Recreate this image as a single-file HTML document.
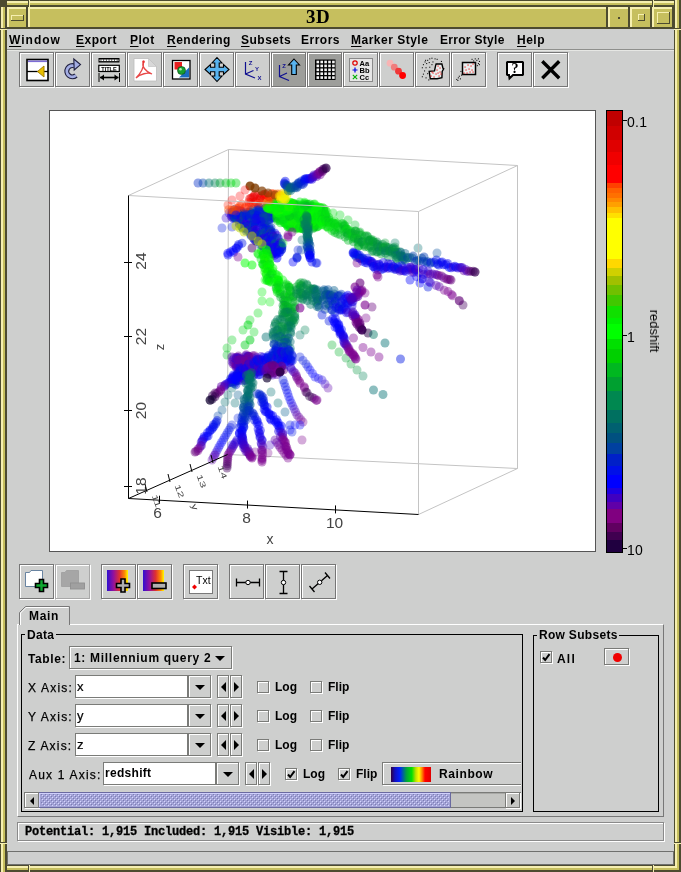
<!DOCTYPE html><html><head><meta charset="utf-8"><style>html,body{margin:0;padding:0;}body{width:681px;height:872px;position:relative;overflow:hidden;background:#4d4b30;font-family:'Liberation Sans',sans-serif}</style></head><body><div style="position:absolute;left:0;top:0;width:681px;height:872px;background:#c6bf5e"></div><div style="position:absolute;left:0px;top:0px;width:681px;height:1px;background:#4d4b30"></div><div style="position:absolute;left:0px;top:1px;width:681px;height:2px;background:#f6efb0"></div><div style="position:absolute;left:0px;top:3px;width:681px;height:2px;background:#c6bf5e"></div><div style="position:absolute;left:0px;top:5px;width:681px;height:2px;background:#4d4b30"></div><div style="position:absolute;left:0px;top:865px;width:681px;height:1px;background:#4d4b30"></div><div style="position:absolute;left:0px;top:866px;width:681px;height:2px;background:#f6efb0"></div><div style="position:absolute;left:0px;top:868px;width:681px;height:2px;background:#c6bf5e"></div><div style="position:absolute;left:0px;top:870px;width:681px;height:2px;background:#4d4b30"></div><div style="position:absolute;left:0px;top:0px;width:1px;height:872px;background:#4d4b30"></div><div style="position:absolute;left:1px;top:0px;width:2px;height:872px;background:#f6efb0"></div><div style="position:absolute;left:3px;top:0px;width:2px;height:872px;background:#c6bf5e"></div><div style="position:absolute;left:5px;top:0px;width:2px;height:872px;background:#4d4b30"></div><div style="position:absolute;left:674px;top:0px;width:1px;height:872px;background:#4d4b30"></div><div style="position:absolute;left:675px;top:0px;width:2px;height:872px;background:#f6efb0"></div><div style="position:absolute;left:677px;top:0px;width:2px;height:872px;background:#c6bf5e"></div><div style="position:absolute;left:679px;top:0px;width:2px;height:872px;background:#4d4b30"></div><div style="position:absolute;left:6px;top:6px;width:1px;height:1px;background:#4d4b30"></div><div style="position:absolute;left:5px;top:5px;width:2px;height:2px;background:#4d4b30"></div><div style="position:absolute;left:4px;top:4px;width:3px;height:3px;background:#c6bf5e"></div><div style="position:absolute;left:3px;top:3px;width:4px;height:4px;background:#c6bf5e"></div><div style="position:absolute;left:2px;top:2px;width:5px;height:5px;background:#f6efb0"></div><div style="position:absolute;left:1px;top:1px;width:6px;height:6px;background:#f6efb0"></div><div style="position:absolute;left:0px;top:0px;width:7px;height:7px;background:#4d4b30"></div><div style="position:absolute;left:674px;top:865px;width:7px;height:7px;background:#4d4b30"></div><div style="position:absolute;left:674px;top:865px;width:6px;height:6px;background:#4d4b30"></div><div style="position:absolute;left:674px;top:865px;width:5px;height:5px;background:#c6bf5e"></div><div style="position:absolute;left:674px;top:865px;width:4px;height:4px;background:#c6bf5e"></div><div style="position:absolute;left:674px;top:865px;width:3px;height:3px;background:#f6efb0"></div><div style="position:absolute;left:674px;top:865px;width:2px;height:2px;background:#f6efb0"></div><div style="position:absolute;left:674px;top:865px;width:1px;height:1px;background:#4d4b30"></div><div style="position:absolute;left:0px;top:28px;width:7px;height:1px;background:#4d4b30"></div><div style="position:absolute;left:0px;top:29px;width:7px;height:1px;background:#f6efb0"></div><div style="position:absolute;left:674px;top:28px;width:7px;height:1px;background:#4d4b30"></div><div style="position:absolute;left:674px;top:29px;width:7px;height:1px;background:#f6efb0"></div><div style="position:absolute;left:0px;top:842px;width:7px;height:1px;background:#4d4b30"></div><div style="position:absolute;left:0px;top:843px;width:7px;height:1px;background:#f6efb0"></div><div style="position:absolute;left:674px;top:842px;width:7px;height:1px;background:#4d4b30"></div><div style="position:absolute;left:674px;top:843px;width:7px;height:1px;background:#f6efb0"></div><div style="position:absolute;left:28px;top:0px;width:1px;height:7px;background:#4d4b30"></div><div style="position:absolute;left:29px;top:0px;width:1px;height:7px;background:#f6efb0"></div><div style="position:absolute;left:652px;top:0px;width:1px;height:7px;background:#4d4b30"></div><div style="position:absolute;left:653px;top:0px;width:1px;height:7px;background:#f6efb0"></div><div style="position:absolute;left:28px;top:865px;width:1px;height:7px;background:#4d4b30"></div><div style="position:absolute;left:29px;top:865px;width:1px;height:7px;background:#f6efb0"></div><div style="position:absolute;left:652px;top:865px;width:1px;height:7px;background:#4d4b30"></div><div style="position:absolute;left:653px;top:865px;width:1px;height:7px;background:#f6efb0"></div><div style="position:absolute;left:7px;top:7px;width:21px;height:22px;background:#4d4b30"></div><div style="position:absolute;left:7px;top:7px;width:19px;height:20px;background:#f6efb0"></div><div style="position:absolute;left:9px;top:9px;width:17px;height:18px;background:#c6bf5e"></div><div style="position:absolute;left:11px;top:15px;width:13px;height:6px;background:#4d4b30"></div><div style="position:absolute;left:11px;top:15px;width:12px;height:5px;background:#f6efb0"></div><div style="position:absolute;left:12px;top:16px;width:11px;height:4px;background:#c6bf5e"></div><div style="position:absolute;left:28px;top:7px;width:580px;height:22px;background:#4d4b30"></div><div style="position:absolute;left:28px;top:7px;width:578px;height:20px;background:#f6efb0"></div><div style="position:absolute;left:30px;top:9px;width:576px;height:18px;background:#c6bf5e"></div><div style="position:absolute;left:608px;top:7px;width:22px;height:22px;background:#4d4b30"></div><div style="position:absolute;left:608px;top:7px;width:20px;height:20px;background:#f6efb0"></div><div style="position:absolute;left:610px;top:9px;width:18px;height:18px;background:#c6bf5e"></div><div style="position:absolute;left:630px;top:7px;width:22px;height:22px;background:#4d4b30"></div><div style="position:absolute;left:630px;top:7px;width:20px;height:20px;background:#f6efb0"></div><div style="position:absolute;left:632px;top:9px;width:18px;height:18px;background:#c6bf5e"></div><div style="position:absolute;left:652px;top:7px;width:22px;height:22px;background:#4d4b30"></div><div style="position:absolute;left:652px;top:7px;width:20px;height:20px;background:#f6efb0"></div><div style="position:absolute;left:654px;top:9px;width:18px;height:18px;background:#c6bf5e"></div><div style="position:absolute;left:618px;top:17px;width:2px;height:2px;background:#4d4b30"></div><div style="position:absolute;left:638px;top:14px;width:7px;height:7px;background:#4d4b30"></div><div style="position:absolute;left:638px;top:14px;width:6px;height:6px;background:#f6efb0"></div><div style="position:absolute;left:639px;top:15px;width:5px;height:5px;background:#c6bf5e"></div><div style="position:absolute;left:657px;top:12px;width:13px;height:12px;background:#4d4b30"></div><div style="position:absolute;left:657px;top:12px;width:12px;height:11px;background:#f6efb0"></div><div style="position:absolute;left:658px;top:13px;width:11px;height:10px;background:#c6bf5e"></div><div style="position:absolute;left:306px;top:6px;white-space:pre;will-change:transform;font-family:'Liberation Serif',serif;font-weight:bold;font-size:19px;color:#000;line-height:22px;letter-spacing:0.5px">3D</div><div style="position:absolute;left:7px;top:29px;width:667px;height:836px;background:#cecfce"></div><div style="position:absolute;left:7px;top:49px;width:667px;height:1px;background:#8e8f8c"></div><div style="position:absolute;left:7px;top:50px;width:667px;height:1px;background:#e6e7e4"></div><div style="position:absolute;left:9px;top:33px;white-space:pre;will-change:transform;font-family:'Liberation Sans',sans-serif;font-weight:bold;font-size:12px;color:#000;line-height:14px;letter-spacing:1.0px"><u style="text-decoration-thickness:1px;text-underline-offset:2px">W</u>indow</div><div style="position:absolute;left:76px;top:33px;white-space:pre;will-change:transform;font-family:'Liberation Sans',sans-serif;font-weight:bold;font-size:12px;color:#000;line-height:14px;letter-spacing:0.5px"><u style="text-decoration-thickness:1px;text-underline-offset:2px">E</u>xport</div><div style="position:absolute;left:129.5px;top:33px;white-space:pre;will-change:transform;font-family:'Liberation Sans',sans-serif;font-weight:bold;font-size:12px;color:#000;line-height:14px;letter-spacing:0.5px"><u style="text-decoration-thickness:1px;text-underline-offset:2px">P</u>lot</div><div style="position:absolute;left:166.5px;top:33px;white-space:pre;will-change:transform;font-family:'Liberation Sans',sans-serif;font-weight:bold;font-size:12px;color:#000;line-height:14px;letter-spacing:0.5px"><u style="text-decoration-thickness:1px;text-underline-offset:2px">R</u>endering</div><div style="position:absolute;left:240.5px;top:33px;white-space:pre;will-change:transform;font-family:'Liberation Sans',sans-serif;font-weight:bold;font-size:12px;color:#000;line-height:14px;letter-spacing:0.5px"><u style="text-decoration-thickness:1px;text-underline-offset:2px">S</u>ubsets</div><div style="position:absolute;left:301.3px;top:33px;white-space:pre;will-change:transform;font-family:'Liberation Sans',sans-serif;font-weight:bold;font-size:12px;color:#000;line-height:14px;letter-spacing:0.5px">Errors</div><div style="position:absolute;left:351.3px;top:33px;white-space:pre;will-change:transform;font-family:'Liberation Sans',sans-serif;font-weight:bold;font-size:12px;color:#000;line-height:14px;letter-spacing:0.5px"><u style="text-decoration-thickness:1px;text-underline-offset:2px">M</u>arker Style</div><div style="position:absolute;left:440.2px;top:33px;white-space:pre;will-change:transform;font-family:'Liberation Sans',sans-serif;font-weight:bold;font-size:12px;color:#000;line-height:14px;letter-spacing:0.3px">Error Style</div><div style="position:absolute;left:517px;top:33px;white-space:pre;will-change:transform;font-family:'Liberation Sans',sans-serif;font-weight:bold;font-size:12px;color:#000;line-height:14px;letter-spacing:0.5px"><u style="text-decoration-thickness:1px;text-underline-offset:2px">H</u>elp</div><div style="position:absolute;left:19px;top:52px;width:35px;height:35px;box-sizing:border-box;border:1px solid #767676;background:#cecfce;box-shadow:1px 1px 0 #fff, inset 1px 1px 0 #fff"></div><div style="position:absolute;left:55px;top:52px;width:35px;height:35px;box-sizing:border-box;border:1px solid #767676;background:#cecfce;box-shadow:1px 1px 0 #fff, inset 1px 1px 0 #fff"></div><div style="position:absolute;left:91px;top:52px;width:35px;height:35px;box-sizing:border-box;border:1px solid #767676;background:#cecfce;box-shadow:1px 1px 0 #fff, inset 1px 1px 0 #fff"></div><div style="position:absolute;left:127px;top:52px;width:35px;height:35px;box-sizing:border-box;border:1px solid #767676;background:#cecfce;box-shadow:1px 1px 0 #fff, inset 1px 1px 0 #fff"></div><div style="position:absolute;left:163px;top:52px;width:35px;height:35px;box-sizing:border-box;border:1px solid #767676;background:#cecfce;box-shadow:1px 1px 0 #fff, inset 1px 1px 0 #fff"></div><div style="position:absolute;left:199px;top:52px;width:35px;height:35px;box-sizing:border-box;border:1px solid #767676;background:#cecfce;box-shadow:1px 1px 0 #fff, inset 1px 1px 0 #fff"></div><div style="position:absolute;left:235px;top:52px;width:35px;height:35px;box-sizing:border-box;border:1px solid #767676;background:#cecfce;box-shadow:1px 1px 0 #fff, inset 1px 1px 0 #fff"></div><div style="position:absolute;left:271px;top:52px;width:35px;height:35px;box-sizing:border-box;border:1px solid #767676;background:#9d9e9b;box-shadow:1px 1px 0 #fff, inset 1px 1px 0 #fff"></div><div style="position:absolute;left:307px;top:52px;width:35px;height:35px;box-sizing:border-box;border:1px solid #767676;background:#9d9e9b;box-shadow:1px 1px 0 #fff, inset 1px 1px 0 #fff"></div><div style="position:absolute;left:343px;top:52px;width:35px;height:35px;box-sizing:border-box;border:1px solid #767676;background:#cecfce;box-shadow:1px 1px 0 #fff, inset 1px 1px 0 #fff"></div><div style="position:absolute;left:379px;top:52px;width:35px;height:35px;box-sizing:border-box;border:1px solid #767676;background:#cecfce;box-shadow:1px 1px 0 #fff, inset 1px 1px 0 #fff"></div><div style="position:absolute;left:415px;top:52px;width:35px;height:35px;box-sizing:border-box;border:1px solid #767676;background:#cecfce;box-shadow:1px 1px 0 #fff, inset 1px 1px 0 #fff"></div><div style="position:absolute;left:451px;top:52px;width:35px;height:35px;box-sizing:border-box;border:1px solid #767676;background:#cecfce;box-shadow:1px 1px 0 #fff, inset 1px 1px 0 #fff"></div><div style="position:absolute;left:497px;top:52px;width:35px;height:35px;box-sizing:border-box;border:1px solid #767676;background:#cecfce;box-shadow:1px 1px 0 #fff, inset 1px 1px 0 #fff"></div><div style="position:absolute;left:533px;top:52px;width:35px;height:35px;box-sizing:border-box;border:1px solid #767676;background:#cecfce;box-shadow:1px 1px 0 #fff, inset 1px 1px 0 #fff"></div><div style="position:absolute;left:49px;top:110px;width:547px;height:442px;background:#fff;box-sizing:border-box;border:1px solid #555"></div><div style="position:absolute;left:606px;top:110px;width:17px;height:443px;box-sizing:border-box;border:1px solid #000;background:linear-gradient(to bottom,#c00000 0.00% 3.48%,#d00000 3.48% 6.64%,#e00000 6.64% 9.39%,#f00000 9.39% 12.14%,#ff0000 12.14% 16.25%,#ff4000 16.25% 17.45%,#ff6000 17.45% 18.62%,#ff7000 18.62% 19.64%,#ff8800 19.64% 20.61%,#ffa000 20.61% 21.78%,#ffc000 21.78% 23.16%,#ffe000 23.16% 24.33%,#ffff00 24.33% 33.52%,#ffd800 33.52% 35.49%,#d0d000 35.49% 37.47%,#a0c000 37.47% 39.41%,#70c000 39.41% 41.76%,#40c800 41.76% 44.13%,#10e000 44.13% 46.88%,#00f000 46.88% 48.31%,#00ff00 48.31% 51.63%,#00e000 51.63% 53.95%,#00d000 53.95% 57.11%,#00b820 57.11% 60.27%,#00a030 60.27% 63.43%,#008850 63.43% 67.88%,#007060 67.88% 70.65%,#006070 70.65% 73.00%,#005080 73.00% 75.35%,#0040a0 75.35% 77.72%,#0020c8 77.72% 80.47%,#0010e8 80.47% 82.44%,#0000ff 82.44% 85.60%,#2000e0 85.60% 86.77%,#4000c0 86.77% 88.74%,#6000a8 88.74% 90.29%,#800080 90.29% 93.45%,#600060 93.45% 95.42%,#400050 95.42% 97.38%,#200040 97.38% 100.00%)"></div><div style="position:absolute;left:623px;top:120px;width:4px;height:1px;background:#000"></div><div style="position:absolute;left:627px;top:115px;white-space:pre;will-change:transform;font-family:'Liberation Sans',sans-serif;font-size:14px;color:#000;line-height:14px;letter-spacing:0.3px">0.1</div><div style="position:absolute;left:623px;top:335px;width:4px;height:1px;background:#000"></div><div style="position:absolute;left:627px;top:330px;white-space:pre;will-change:transform;font-family:'Liberation Sans',sans-serif;font-size:14px;color:#000;line-height:14px;letter-spacing:0.3px">1</div><div style="position:absolute;left:623px;top:548px;width:4px;height:1px;background:#000"></div><div style="position:absolute;left:627px;top:543px;white-space:pre;will-change:transform;font-family:'Liberation Sans',sans-serif;font-size:14px;color:#000;line-height:14px;letter-spacing:0.3px">10</div><div style="position:absolute;left:647px;top:324px;width:0;height:0"><div style="position:absolute;transform:translate(-50%,-50%) rotate(90deg);left:6.5px;top:7px;font-family:'Liberation Sans',sans-serif;font-size:14px;color:#000;line-height:14px;font-size:13px;white-space:pre;will-change:transform">redshift</div></div><div style="position:absolute;left:19px;top:564px;width:35px;height:35px;box-sizing:border-box;border:1px solid #767676;background:#cecfce;box-shadow:1px 1px 0 #fff, inset 1px 1px 0 #fff"></div><div style="position:absolute;left:55px;top:564px;width:35px;height:35px;box-sizing:border-box;border:1px solid #a8a8a8;background:#cecfce;box-shadow:1px 1px 0 #fff, inset 1px 1px 0 #fff"></div><div style="position:absolute;left:101px;top:564px;width:35px;height:35px;box-sizing:border-box;border:1px solid #767676;background:#cecfce;box-shadow:1px 1px 0 #fff, inset 1px 1px 0 #fff"></div><div style="position:absolute;left:137px;top:564px;width:35px;height:35px;box-sizing:border-box;border:1px solid #767676;background:#cecfce;box-shadow:1px 1px 0 #fff, inset 1px 1px 0 #fff"></div><div style="position:absolute;left:183px;top:564px;width:35px;height:35px;box-sizing:border-box;border:1px solid #767676;background:#cecfce;box-shadow:1px 1px 0 #fff, inset 1px 1px 0 #fff"></div><div style="position:absolute;left:229px;top:564px;width:35px;height:35px;box-sizing:border-box;border:1px solid #767676;background:#cecfce;box-shadow:1px 1px 0 #fff, inset 1px 1px 0 #fff"></div><div style="position:absolute;left:265px;top:564px;width:35px;height:35px;box-sizing:border-box;border:1px solid #767676;background:#cecfce;box-shadow:1px 1px 0 #fff, inset 1px 1px 0 #fff"></div><div style="position:absolute;left:301px;top:564px;width:35px;height:35px;box-sizing:border-box;border:1px solid #767676;background:#cecfce;box-shadow:1px 1px 0 #fff, inset 1px 1px 0 #fff"></div><div style="position:absolute;left:17px;top:624px;width:647px;height:193px;box-sizing:border-box;border-top:1px solid #fff;border-left:1px solid #fff;border-right:1px solid #777;border-bottom:1px solid #777"></div><svg style="position:absolute;left:0;top:0" width="681" height="872"><path d="M19.5 625 L19.5 612.5 L25.5 606.5 L69.5 606.5 L69.5 625" fill="#cecfce" stroke="#777" stroke-width="1"/><path d="M20.5 625 L20.5 613 L26 607.5 L68.5 607.5" fill="none" stroke="#fff" stroke-width="1"/></svg><div style="position:absolute;left:29px;top:609px;white-space:pre;will-change:transform;font-family:'Liberation Sans',sans-serif;font-weight:bold;font-size:12px;line-height:14px;letter-spacing:0.7px">Main</div><div style="position:absolute;left:21px;top:634px;width:502px;height:178px;box-sizing:border-box;border:1px solid #000"></div><div style="position:absolute;left:25px;top:626px;width:31px;height:14px;background:#cecfce"></div><div style="position:absolute;left:27px;top:628px;white-space:pre;will-change:transform;font-family:'Liberation Sans',sans-serif;font-weight:bold;font-size:12px;line-height:14px;color:#000;letter-spacing:0.3px">Data</div><div style="position:absolute;left:533px;top:635px;width:126px;height:177px;box-sizing:border-box;border:1px solid #000"></div><div style="position:absolute;left:537px;top:627px;width:82px;height:14px;background:#cecfce"></div><div style="position:absolute;left:539px;top:628px;white-space:pre;will-change:transform;font-family:'Liberation Sans',sans-serif;font-weight:bold;font-size:12px;line-height:14px;color:#000;letter-spacing:0.3px">Row Subsets</div><div style="position:absolute;left:17px;top:822px;width:647px;height:19px;box-sizing:border-box;border:1px solid #8a8a8a;box-shadow:inset 1px 1px 0 #fff, 1px 1px 0 #fff"></div><div style="position:absolute;left:25px;top:825px;white-space:pre;will-change:transform;font-family:'Liberation Mono',monospace;font-weight:bold;font-size:12px;line-height:14px;letter-spacing:-0.2px;color:#000;-webkit-text-stroke:0.3px #000">Potential: 1,915 Included: 1,915 Visible: 1,915</div><div style="position:absolute;left:7px;top:851px;width:667px;height:14px;box-sizing:border-box;border-top:1px solid #6f706d;border-left:1px solid #6f706d;border-bottom:1px solid #6f706d;border-right:1px solid #6f706d;background:#cecfce"></div><div style="position:absolute;left:50px;top:111px;width:545px;height:440px;overflow:hidden"><div style="position:absolute;left:-50px;top:-111px"><svg style="position:absolute;left:0;top:0" width="681" height="872"><g><line x1="228.5" y1="149.5" x2="227.5" y2="454.5" stroke="#c4c4c4" stroke-width="1"/><line x1="228.5" y1="149.5" x2="517.5" y2="165.5" stroke="#c4c4c4" stroke-width="1"/><line x1="517.5" y1="165.5" x2="517.5" y2="468.5" stroke="#c4c4c4" stroke-width="1"/><line x1="227.5" y1="454.5" x2="517.5" y2="468.5" stroke="#c4c4c4" stroke-width="1"/><line x1="128.5" y1="195.5" x2="228.5" y2="149.5" stroke="#c4c4c4" stroke-width="1"/><line x1="418.5" y1="211.5" x2="517.5" y2="165.5" stroke="#c4c4c4" stroke-width="1"/><line x1="418.5" y1="514.5" x2="517.5" y2="468.5" stroke="#c4c4c4" stroke-width="1"/></g><circle cx="198.0" cy="183.0" r="4.5" fill="#002cc6" fill-opacity="0.42"/><circle cx="203.0" cy="183.0" r="4.5" fill="#0042a9" fill-opacity="0.42"/><circle cx="209.0" cy="183.0" r="4.5" fill="#006e70" fill-opacity="0.42"/><circle cx="215.0" cy="183.0" r="4.5" fill="#008256" fill-opacity="0.42"/><circle cx="220.0" cy="183.0" r="4.5" fill="#00a030" fill-opacity="0.42"/><circle cx="226.0" cy="183.0" r="4.5" fill="#00c020" fill-opacity="0.42"/><circle cx="231.0" cy="183.0" r="4.5" fill="#00d714" fill-opacity="0.42"/><circle cx="236.0" cy="183.0" r="4.5" fill="#00d714" fill-opacity="0.42"/><circle cx="231.9" cy="212.5" r="4.5" fill="#3d00c8" fill-opacity="0.45"/><circle cx="232.4" cy="212.3" r="4.5" fill="#0009f4" fill-opacity="0.45"/><circle cx="232.5" cy="212.4" r="4.5" fill="#0002fc" fill-opacity="0.45"/><circle cx="234.7" cy="209.5" r="4.5" fill="#0034bb" fill-opacity="0.45"/><circle cx="231.8" cy="215.0" r="4.5" fill="#0b00f5" fill-opacity="0.45"/><circle cx="231.3" cy="216.5" r="4.5" fill="#4600c0" fill-opacity="0.45"/><circle cx="233.3" cy="213.9" r="4.5" fill="#004b9e" fill-opacity="0.45"/><circle cx="233.8" cy="213.3" r="4.5" fill="#005a8a" fill-opacity="0.45"/><circle cx="235.4" cy="211.1" r="4.5" fill="#005e84" fill-opacity="0.45"/><circle cx="234.9" cy="212.9" r="4.5" fill="#2b00d8" fill-opacity="0.45"/><circle cx="234.2" cy="214.8" r="4.5" fill="#0016e2" fill-opacity="0.45"/><circle cx="235.4" cy="213.4" r="4.5" fill="#0038b6" fill-opacity="0.45"/><circle cx="233.1" cy="218.5" r="4.5" fill="#2b00d9" fill-opacity="0.45"/><circle cx="236.7" cy="212.4" r="4.5" fill="#0040ac" fill-opacity="0.45"/><circle cx="238.1" cy="210.2" r="4.5" fill="#1b00e7" fill-opacity="0.45"/><circle cx="234.4" cy="217.6" r="4.5" fill="#0027cc" fill-opacity="0.45"/><circle cx="234.8" cy="217.9" r="4.5" fill="#00637e" fill-opacity="0.45"/><circle cx="234.5" cy="218.6" r="4.5" fill="#001bdc" fill-opacity="0.45"/><circle cx="237.7" cy="213.8" r="4.5" fill="#00588d" fill-opacity="0.45"/><circle cx="235.8" cy="217.8" r="4.5" fill="#0039b4" fill-opacity="0.45"/><circle cx="238.4" cy="213.3" r="4.5" fill="#4600c1" fill-opacity="0.45"/><circle cx="240.2" cy="211.3" r="4.5" fill="#003db0" fill-opacity="0.45"/><circle cx="240.6" cy="210.7" r="4.5" fill="#2100e1" fill-opacity="0.45"/><circle cx="238.0" cy="216.1" r="4.5" fill="#001ed8" fill-opacity="0.45"/><circle cx="237.2" cy="218.2" r="4.5" fill="#004f99" fill-opacity="0.45"/><circle cx="241.4" cy="211.6" r="4.5" fill="#0022d3" fill-opacity="0.45"/><circle cx="240.6" cy="213.4" r="4.5" fill="#4700bf" fill-opacity="0.45"/><circle cx="240.8" cy="214.0" r="4.5" fill="#3500d0" fill-opacity="0.45"/><circle cx="240.4" cy="215.1" r="4.5" fill="#2e00d6" fill-opacity="0.45"/><circle cx="242.7" cy="211.8" r="4.5" fill="#4b00bc" fill-opacity="0.45"/><circle cx="241.8" cy="213.7" r="4.5" fill="#1c00e6" fill-opacity="0.45"/><circle cx="241.9" cy="214.3" r="4.5" fill="#00588d" fill-opacity="0.45"/><circle cx="240.2" cy="217.9" r="4.5" fill="#003eaf" fill-opacity="0.45"/><circle cx="242.0" cy="215.5" r="4.5" fill="#001dd9" fill-opacity="0.45"/><circle cx="241.6" cy="217.1" r="4.5" fill="#000bf1" fill-opacity="0.45"/><circle cx="244.0" cy="213.4" r="4.5" fill="#004b9d" fill-opacity="0.45"/><circle cx="239.8" cy="221.7" r="4.5" fill="#003db0" fill-opacity="0.45"/><circle cx="240.4" cy="220.7" r="4.5" fill="#4100c5" fill-opacity="0.45"/><circle cx="239.2" cy="223.7" r="4.5" fill="#3400d1" fill-opacity="0.45"/><circle cx="243.4" cy="217.0" r="4.5" fill="#005393" fill-opacity="0.45"/><circle cx="239.5" cy="224.2" r="4.5" fill="#003eae" fill-opacity="0.45"/><circle cx="245.2" cy="215.0" r="4.5" fill="#2700dc" fill-opacity="0.45"/><circle cx="245.2" cy="215.6" r="4.5" fill="#0048a1" fill-opacity="0.45"/><circle cx="247.3" cy="212.6" r="4.5" fill="#0040ac" fill-opacity="0.45"/><circle cx="241.4" cy="223.7" r="4.5" fill="#0004f9" fill-opacity="0.45"/><circle cx="241.1" cy="224.8" r="4.5" fill="#0044a7" fill-opacity="0.45"/><circle cx="246.4" cy="215.7" r="4.5" fill="#001ed8" fill-opacity="0.45"/><circle cx="247.4" cy="214.4" r="4.5" fill="#002ac8" fill-opacity="0.45"/><circle cx="248.3" cy="213.9" r="4.5" fill="#002bc7" fill-opacity="0.45"/><circle cx="241.6" cy="226.7" r="4.5" fill="#0300fc" fill-opacity="0.45"/><circle cx="245.1" cy="221.0" r="4.5" fill="#004d9a" fill-opacity="0.45"/><circle cx="250.0" cy="212.5" r="4.5" fill="#3a00cb" fill-opacity="0.45"/><circle cx="242.4" cy="227.1" r="4.5" fill="#006083" fill-opacity="0.45"/><circle cx="246.8" cy="219.9" r="4.5" fill="#1300ee" fill-opacity="0.45"/><circle cx="242.5" cy="228.0" r="4.5" fill="#00578d" fill-opacity="0.45"/><circle cx="245.1" cy="224.2" r="4.5" fill="#3800cd" fill-opacity="0.45"/><circle cx="245.7" cy="223.9" r="4.5" fill="#2100e2" fill-opacity="0.45"/><circle cx="249.1" cy="218.4" r="4.5" fill="#0900f7" fill-opacity="0.45"/><circle cx="244.7" cy="227.0" r="4.5" fill="#0023d2" fill-opacity="0.45"/><circle cx="245.0" cy="227.1" r="4.5" fill="#000bf1" fill-opacity="0.45"/><circle cx="249.6" cy="219.2" r="4.5" fill="#0009f3" fill-opacity="0.45"/><circle cx="252.7" cy="214.3" r="4.5" fill="#0001fe" fill-opacity="0.45"/><circle cx="245.6" cy="228.0" r="4.5" fill="#1300ee" fill-opacity="0.45"/><circle cx="247.1" cy="225.6" r="4.5" fill="#000af3" fill-opacity="0.45"/><circle cx="246.3" cy="227.6" r="4.5" fill="#00568f" fill-opacity="0.45"/><circle cx="254.5" cy="213.8" r="4.5" fill="#0006f7" fill-opacity="0.45"/><circle cx="253.8" cy="218.2" r="4.5" fill="#0c00f4" fill-opacity="0.45"/><circle cx="248.8" cy="224.0" r="4.5" fill="#3c00c9" fill-opacity="0.45"/><circle cx="257.2" cy="215.3" r="4.5" fill="#0035bb" fill-opacity="0.45"/><circle cx="254.9" cy="218.4" r="4.5" fill="#0049a0" fill-opacity="0.45"/><circle cx="248.9" cy="225.4" r="4.5" fill="#001fd7" fill-opacity="0.45"/><circle cx="253.7" cy="220.7" r="4.5" fill="#0500fb" fill-opacity="0.45"/><circle cx="252.4" cy="222.3" r="4.5" fill="#2300df" fill-opacity="0.45"/><circle cx="246.5" cy="229.3" r="4.5" fill="#0028cb" fill-opacity="0.45"/><circle cx="254.5" cy="221.1" r="4.5" fill="#004e9a" fill-opacity="0.45"/><circle cx="247.5" cy="229.0" r="4.5" fill="#2d00d7" fill-opacity="0.45"/><circle cx="246.2" cy="231.0" r="4.5" fill="#0038b6" fill-opacity="0.45"/><circle cx="253.2" cy="223.6" r="4.5" fill="#0039b5" fill-opacity="0.45"/><circle cx="254.0" cy="223.3" r="4.5" fill="#0003fc" fill-opacity="0.45"/><circle cx="255.6" cy="222.1" r="4.5" fill="#2b00d9" fill-opacity="0.45"/><circle cx="254.1" cy="224.5" r="4.5" fill="#00578d" fill-opacity="0.45"/><circle cx="248.2" cy="230.8" r="4.5" fill="#005d87" fill-opacity="0.45"/><circle cx="252.8" cy="226.6" r="4.5" fill="#0033bc" fill-opacity="0.45"/><circle cx="260.8" cy="218.6" r="4.5" fill="#004e9a" fill-opacity="0.45"/><circle cx="260.9" cy="218.8" r="4.5" fill="#2900db" fill-opacity="0.45"/><circle cx="259.4" cy="220.7" r="4.5" fill="#005c88" fill-opacity="0.45"/><circle cx="255.4" cy="225.6" r="4.5" fill="#0002fc" fill-opacity="0.45"/><circle cx="250.6" cy="231.2" r="4.5" fill="#4400c2" fill-opacity="0.45"/><circle cx="259.4" cy="222.3" r="4.5" fill="#001add" fill-opacity="0.45"/><circle cx="262.2" cy="219.5" r="4.5" fill="#001add" fill-opacity="0.45"/><circle cx="260.2" cy="222.4" r="4.5" fill="#0039b5" fill-opacity="0.45"/><circle cx="253.0" cy="230.4" r="4.5" fill="#0013e6" fill-opacity="0.45"/><circle cx="252.4" cy="231.5" r="4.5" fill="#0026cd" fill-opacity="0.45"/><circle cx="250.5" cy="234.1" r="4.5" fill="#005690" fill-opacity="0.45"/><circle cx="253.4" cy="231.5" r="4.5" fill="#004f98" fill-opacity="0.45"/><circle cx="254.9" cy="230.2" r="4.5" fill="#3a00cb" fill-opacity="0.45"/><circle cx="255.9" cy="229.5" r="4.5" fill="#3300d1" fill-opacity="0.45"/><circle cx="250.9" cy="235.6" r="4.5" fill="#001cdb" fill-opacity="0.45"/><circle cx="261.6" cy="224.4" r="4.5" fill="#1100f0" fill-opacity="0.45"/><circle cx="255.7" cy="231.4" r="4.5" fill="#1000f0" fill-opacity="0.45"/><circle cx="252.0" cy="235.4" r="4.5" fill="#4900bd" fill-opacity="0.45"/><circle cx="257.6" cy="230.2" r="4.5" fill="#2000e2" fill-opacity="0.45"/><circle cx="252.4" cy="236.0" r="4.5" fill="#2e00d6" fill-opacity="0.45"/><circle cx="264.5" cy="223.5" r="4.5" fill="#001fd7" fill-opacity="0.45"/><circle cx="254.9" cy="234.3" r="4.5" fill="#0018e0" fill-opacity="0.45"/><circle cx="254.4" cy="235.1" r="4.5" fill="#00598b" fill-opacity="0.45"/><circle cx="264.0" cy="225.6" r="4.5" fill="#002fc1" fill-opacity="0.45"/><circle cx="264.7" cy="225.3" r="4.5" fill="#004c9c" fill-opacity="0.45"/><circle cx="256.4" cy="234.5" r="4.5" fill="#2b00d9" fill-opacity="0.45"/><circle cx="253.4" cy="238.2" r="4.5" fill="#0017e1" fill-opacity="0.45"/><circle cx="266.2" cy="225.1" r="4.5" fill="#0041ab" fill-opacity="0.45"/><circle cx="263.4" cy="228.4" r="4.5" fill="#1300ee" fill-opacity="0.45"/><circle cx="260.3" cy="232.2" r="4.5" fill="#2c00d8" fill-opacity="0.45"/><circle cx="263.6" cy="229.1" r="4.5" fill="#0028cb" fill-opacity="0.45"/><circle cx="255.2" cy="238.7" r="4.5" fill="#0043a8" fill-opacity="0.45"/><circle cx="254.5" cy="239.9" r="4.5" fill="#0012e7" fill-opacity="0.45"/><circle cx="265.9" cy="228.0" r="4.5" fill="#0010ea" fill-opacity="0.45"/><circle cx="260.2" cy="234.6" r="4.5" fill="#005f84" fill-opacity="0.45"/><circle cx="261.8" cy="233.5" r="4.5" fill="#0025ce" fill-opacity="0.45"/><circle cx="261.3" cy="234.4" r="4.5" fill="#0017e1" fill-opacity="0.45"/><circle cx="268.8" cy="226.7" r="4.5" fill="#0010ea" fill-opacity="0.45"/><circle cx="255.8" cy="241.0" r="4.5" fill="#3d00c9" fill-opacity="0.45"/><circle cx="263.2" cy="233.5" r="4.5" fill="#004f98" fill-opacity="0.45"/><circle cx="258.4" cy="239.2" r="4.5" fill="#3800cd" fill-opacity="0.45"/><circle cx="266.0" cy="231.5" r="4.5" fill="#0046a5" fill-opacity="0.45"/><circle cx="257.2" cy="241.4" r="4.5" fill="#004f98" fill-opacity="0.45"/><circle cx="270.9" cy="227.3" r="4.5" fill="#0045a5" fill-opacity="0.45"/><circle cx="261.1" cy="238.0" r="4.5" fill="#0031bf" fill-opacity="0.45"/><circle cx="262.4" cy="237.1" r="4.5" fill="#005393" fill-opacity="0.45"/><circle cx="270.1" cy="229.5" r="4.5" fill="#0014e4" fill-opacity="0.45"/><circle cx="269.1" cy="230.8" r="4.5" fill="#0011e8" fill-opacity="0.45"/><circle cx="266.7" cy="233.9" r="4.5" fill="#0023d1" fill-opacity="0.45"/><circle cx="270.6" cy="231.0" r="4.5" fill="#0044a7" fill-opacity="0.45"/><circle cx="263.2" cy="238.4" r="4.5" fill="#0011e8" fill-opacity="0.45"/><circle cx="263.9" cy="238.3" r="4.5" fill="#2e00d5" fill-opacity="0.45"/><circle cx="261.9" cy="240.3" r="4.5" fill="#2400de" fill-opacity="0.45"/><circle cx="268.9" cy="234.4" r="4.5" fill="#0032bd" fill-opacity="0.45"/><circle cx="270.6" cy="233.3" r="4.5" fill="#4d00ba" fill-opacity="0.45"/><circle cx="272.1" cy="232.3" r="4.5" fill="#003eae" fill-opacity="0.45"/><circle cx="270.3" cy="234.3" r="4.5" fill="#005492" fill-opacity="0.45"/><circle cx="268.1" cy="236.9" r="4.5" fill="#2000e2" fill-opacity="0.45"/><circle cx="268.4" cy="236.7" r="4.5" fill="#0900f7" fill-opacity="0.45"/><circle cx="271.6" cy="234.1" r="4.5" fill="#0900f7" fill-opacity="0.45"/><circle cx="260.6" cy="245.2" r="4.5" fill="#005195" fill-opacity="0.45"/><circle cx="263.9" cy="242.4" r="4.5" fill="#0016e3" fill-opacity="0.45"/><circle cx="272.5" cy="234.9" r="4.5" fill="#00588c" fill-opacity="0.45"/><circle cx="274.8" cy="232.9" r="4.5" fill="#000eed" fill-opacity="0.45"/><circle cx="267.3" cy="240.5" r="4.5" fill="#004c9c" fill-opacity="0.45"/><circle cx="272.7" cy="235.7" r="4.5" fill="#2b00d9" fill-opacity="0.45"/><circle cx="262.8" cy="245.8" r="4.5" fill="#005491" fill-opacity="0.45"/><circle cx="262.5" cy="246.1" r="4.5" fill="#001cdb" fill-opacity="0.45"/><circle cx="271.7" cy="238.2" r="4.5" fill="#001bdc" fill-opacity="0.45"/><circle cx="270.4" cy="239.8" r="4.5" fill="#0006f7" fill-opacity="0.45"/><circle cx="266.7" cy="243.4" r="4.5" fill="#2c00d8" fill-opacity="0.45"/><circle cx="270.4" cy="240.5" r="4.5" fill="#1500ec" fill-opacity="0.45"/><circle cx="274.2" cy="237.5" r="4.5" fill="#004a9f" fill-opacity="0.45"/><circle cx="276.8" cy="235.5" r="4.5" fill="#3600ce" fill-opacity="0.45"/><circle cx="267.8" cy="244.5" r="4.5" fill="#2f00d5" fill-opacity="0.45"/><circle cx="272.0" cy="240.9" r="4.5" fill="#0007f6" fill-opacity="0.45"/><circle cx="264.5" cy="248.3" r="4.5" fill="#2300e0" fill-opacity="0.45"/><circle cx="265.7" cy="247.5" r="4.5" fill="#1600eb" fill-opacity="0.45"/><circle cx="267.3" cy="246.6" r="4.5" fill="#0025d0" fill-opacity="0.45"/><circle cx="266.7" cy="247.6" r="4.5" fill="#0b00f5" fill-opacity="0.45"/><circle cx="268.4" cy="246.4" r="4.5" fill="#0025d0" fill-opacity="0.45"/><circle cx="277.4" cy="238.4" r="4.5" fill="#002ec3" fill-opacity="0.45"/><circle cx="278.3" cy="237.9" r="4.5" fill="#002cc5" fill-opacity="0.45"/><circle cx="270.9" cy="245.4" r="4.5" fill="#003fad" fill-opacity="0.45"/><circle cx="270.7" cy="246.1" r="4.5" fill="#002fc2" fill-opacity="0.45"/><circle cx="272.0" cy="245.2" r="4.5" fill="#0011e9" fill-opacity="0.45"/><circle cx="266.9" cy="250.2" r="4.5" fill="#0000ff" fill-opacity="0.45"/><circle cx="270.1" cy="247.8" r="4.5" fill="#4900bd" fill-opacity="0.45"/><circle cx="272.0" cy="246.2" r="4.5" fill="#1500ec" fill-opacity="0.45"/><circle cx="274.8" cy="244.1" r="4.5" fill="#005b88" fill-opacity="0.45"/><circle cx="275.3" cy="244.0" r="4.5" fill="#005492" fill-opacity="0.45"/><circle cx="269.3" cy="250.1" r="4.5" fill="#000eec" fill-opacity="0.45"/><circle cx="268.9" cy="251.0" r="4.5" fill="#000cf0" fill-opacity="0.45"/><circle cx="273.1" cy="247.8" r="4.5" fill="#2400df" fill-opacity="0.45"/><circle cx="273.6" cy="247.3" r="4.5" fill="#1900e8" fill-opacity="0.45"/><circle cx="270.0" cy="251.1" r="4.5" fill="#004a9e" fill-opacity="0.45"/><circle cx="278.8" cy="243.4" r="4.5" fill="#0017e2" fill-opacity="0.45"/><circle cx="280.3" cy="242.6" r="4.5" fill="#4200c4" fill-opacity="0.45"/><circle cx="275.3" cy="247.6" r="4.5" fill="#0007f6" fill-opacity="0.45"/><circle cx="278.1" cy="245.3" r="4.5" fill="#0300fd" fill-opacity="0.45"/><circle cx="278.4" cy="245.6" r="4.5" fill="#1000f1" fill-opacity="0.45"/><circle cx="281.4" cy="243.1" r="4.5" fill="#003daf" fill-opacity="0.45"/><circle cx="280.0" cy="244.7" r="4.5" fill="#1800e9" fill-opacity="0.45"/><circle cx="272.5" cy="252.3" r="4.5" fill="#1700eb" fill-opacity="0.45"/><circle cx="271.8" cy="253.3" r="4.5" fill="#4100c4" fill-opacity="0.45"/><circle cx="272.9" cy="252.7" r="4.5" fill="#0021d4" fill-opacity="0.45"/><circle cx="272.6" cy="253.6" r="4.5" fill="#003daf" fill-opacity="0.45"/><circle cx="273.2" cy="253.5" r="4.5" fill="#1100ef" fill-opacity="0.45"/><circle cx="273.0" cy="254.0" r="4.5" fill="#2600dd" fill-opacity="0.45"/><circle cx="281.7" cy="246.3" r="4.5" fill="#0003fb" fill-opacity="0.45"/><circle cx="281.0" cy="247.4" r="4.5" fill="#005b89" fill-opacity="0.45"/><circle cx="282.0" cy="246.9" r="4.5" fill="#001fd7" fill-opacity="0.45"/><circle cx="279.1" cy="250.2" r="4.5" fill="#003bb3" fill-opacity="0.45"/><circle cx="279.6" cy="250.1" r="4.5" fill="#1d00e5" fill-opacity="0.45"/><circle cx="274.5" cy="255.3" r="4.5" fill="#4300c3" fill-opacity="0.45"/><circle cx="281.7" cy="249.0" r="4.5" fill="#005195" fill-opacity="0.45"/><circle cx="277.0" cy="253.9" r="4.5" fill="#0003fb" fill-opacity="0.45"/><circle cx="281.7" cy="249.7" r="4.5" fill="#0900f7" fill-opacity="0.45"/><circle cx="279.1" cy="252.7" r="4.5" fill="#0002fd" fill-opacity="0.45"/><circle cx="280.0" cy="252.0" r="4.5" fill="#0016e2" fill-opacity="0.45"/><circle cx="262.1" cy="210.5" r="4.5" fill="#004d9b" fill-opacity="0.42"/><circle cx="275.3" cy="213.0" r="4.5" fill="#0800f7" fill-opacity="0.42"/><circle cx="265.3" cy="214.5" r="4.5" fill="#004a9e" fill-opacity="0.42"/><circle cx="252.1" cy="216.9" r="4.5" fill="#006082" fill-opacity="0.42"/><circle cx="258.4" cy="213.4" r="4.5" fill="#00637f" fill-opacity="0.42"/><circle cx="257.4" cy="208.7" r="4.5" fill="#001bdc" fill-opacity="0.42"/><circle cx="255.2" cy="218.0" r="4.5" fill="#005294" fill-opacity="0.42"/><circle cx="255.3" cy="219.7" r="4.5" fill="#0100fe" fill-opacity="0.42"/><circle cx="266.3" cy="215.2" r="4.5" fill="#0003fb" fill-opacity="0.42"/><circle cx="253.3" cy="209.1" r="4.5" fill="#005295" fill-opacity="0.42"/><circle cx="255.7" cy="215.9" r="4.5" fill="#0003fb" fill-opacity="0.42"/><circle cx="254.3" cy="218.7" r="4.5" fill="#1d00e5" fill-opacity="0.42"/><circle cx="257.3" cy="219.3" r="4.5" fill="#000cf0" fill-opacity="0.42"/><circle cx="270.0" cy="211.5" r="4.5" fill="#003daf" fill-opacity="0.42"/><circle cx="272.7" cy="218.3" r="4.5" fill="#00647d" fill-opacity="0.42"/><circle cx="271.1" cy="217.0" r="4.5" fill="#002ec3" fill-opacity="0.42"/><circle cx="259.0" cy="210.0" r="4.5" fill="#0008f5" fill-opacity="0.42"/><circle cx="267.7" cy="215.7" r="4.5" fill="#0017e2" fill-opacity="0.42"/><circle cx="268.7" cy="216.2" r="4.5" fill="#000eec" fill-opacity="0.42"/><circle cx="259.4" cy="210.0" r="4.5" fill="#005b89" fill-opacity="0.42"/><circle cx="254.5" cy="219.3" r="4.5" fill="#003eaf" fill-opacity="0.42"/><circle cx="270.7" cy="218.5" r="4.5" fill="#0023d2" fill-opacity="0.42"/><circle cx="273.8" cy="210.2" r="4.5" fill="#0f00f2" fill-opacity="0.42"/><circle cx="250.4" cy="216.7" r="4.5" fill="#0046a4" fill-opacity="0.42"/><circle cx="258.4" cy="218.6" r="4.5" fill="#1300ee" fill-opacity="0.42"/><circle cx="267.5" cy="211.6" r="4.5" fill="#003eae" fill-opacity="0.42"/><circle cx="256.4" cy="217.6" r="4.5" fill="#003ab4" fill-opacity="0.42"/><circle cx="257.3" cy="216.3" r="4.5" fill="#0024d1" fill-opacity="0.42"/><circle cx="265.0" cy="208.4" r="4.5" fill="#0100fe" fill-opacity="0.42"/><circle cx="256.6" cy="212.7" r="4.5" fill="#000af2" fill-opacity="0.42"/><circle cx="267.4" cy="211.1" r="4.5" fill="#006b74" fill-opacity="0.42"/><circle cx="251.7" cy="213.4" r="4.5" fill="#0023d1" fill-opacity="0.42"/><circle cx="273.0" cy="212.6" r="4.5" fill="#0004fa" fill-opacity="0.42"/><circle cx="271.5" cy="216.3" r="4.5" fill="#0006f7" fill-opacity="0.42"/><circle cx="265.5" cy="215.2" r="4.5" fill="#000dee" fill-opacity="0.42"/><circle cx="265.3" cy="212.6" r="4.5" fill="#001add" fill-opacity="0.42"/><circle cx="269.5" cy="219.4" r="4.5" fill="#0018df" fill-opacity="0.42"/><circle cx="262.2" cy="217.8" r="4.5" fill="#0009f3" fill-opacity="0.42"/><circle cx="249.9" cy="213.1" r="4.5" fill="#003ab4" fill-opacity="0.42"/><circle cx="254.8" cy="220.7" r="4.5" fill="#0015e3" fill-opacity="0.42"/><circle cx="251.7" cy="214.2" r="4.5" fill="#000fec" fill-opacity="0.42"/><circle cx="258.5" cy="206.6" r="4.5" fill="#0038b6" fill-opacity="0.42"/><circle cx="267.3" cy="208.2" r="4.5" fill="#0400fc" fill-opacity="0.42"/><circle cx="266.4" cy="207.1" r="4.5" fill="#0a00f6" fill-opacity="0.42"/><circle cx="272.8" cy="212.3" r="4.5" fill="#0029ca" fill-opacity="0.42"/><circle cx="258.9" cy="207.1" r="4.5" fill="#0036b8" fill-opacity="0.42"/><circle cx="257.3" cy="215.5" r="4.5" fill="#000cef" fill-opacity="0.42"/><circle cx="270.6" cy="213.7" r="4.5" fill="#00588d" fill-opacity="0.42"/><circle cx="264.6" cy="219.0" r="4.5" fill="#0047a2" fill-opacity="0.42"/><circle cx="265.3" cy="213.6" r="4.5" fill="#0045a5" fill-opacity="0.42"/><circle cx="270.5" cy="218.3" r="4.5" fill="#0008f5" fill-opacity="0.42"/><circle cx="263.5" cy="215.8" r="4.5" fill="#0031bf" fill-opacity="0.42"/><circle cx="250.5" cy="210.2" r="4.5" fill="#006976" fill-opacity="0.42"/><circle cx="266.7" cy="216.2" r="4.5" fill="#005195" fill-opacity="0.42"/><circle cx="263.1" cy="220.7" r="4.5" fill="#001fd6" fill-opacity="0.42"/><circle cx="263.0" cy="217.4" r="4.5" fill="#0049a0" fill-opacity="0.42"/><circle cx="267.7" cy="220.2" r="4.5" fill="#0045a5" fill-opacity="0.42"/><circle cx="249.9" cy="211.8" r="4.5" fill="#002fc2" fill-opacity="0.42"/><circle cx="261.1" cy="221.5" r="4.5" fill="#0f00f2" fill-opacity="0.42"/><circle cx="256.3" cy="219.0" r="4.5" fill="#1700ea" fill-opacity="0.42"/><circle cx="222.0" cy="228.0" r="4.5" fill="#0016e2" fill-opacity="0.33"/><circle cx="232.0" cy="227.0" r="4.5" fill="#0016e2" fill-opacity="0.33"/><circle cx="229.0" cy="213.0" r="4.5" fill="#2e00d5" fill-opacity="0.33"/><circle cx="226.0" cy="218.0" r="4.5" fill="#2e00d5" fill-opacity="0.33"/><circle cx="242.0" cy="243.3" r="4.5" fill="#0014e5" fill-opacity="0.42"/><circle cx="238.6" cy="244.5" r="4.5" fill="#000dee" fill-opacity="0.42"/><circle cx="238.4" cy="246.0" r="4.5" fill="#000bf1" fill-opacity="0.42"/><circle cx="236.1" cy="248.1" r="4.5" fill="#0004f9" fill-opacity="0.42"/><circle cx="236.4" cy="248.5" r="4.5" fill="#0004f9" fill-opacity="0.42"/><circle cx="233.2" cy="250.5" r="4.5" fill="#0000ff" fill-opacity="0.42"/><circle cx="233.6" cy="252.3" r="4.5" fill="#0000ff" fill-opacity="0.42"/><circle cx="230.4" cy="251.9" r="4.5" fill="#0000ff" fill-opacity="0.42"/><circle cx="227.8" cy="253.3" r="4.5" fill="#0000ff" fill-opacity="0.42"/><circle cx="228.0" cy="255.0" r="4.5" fill="#0000ff" fill-opacity="0.42"/><circle cx="238.0" cy="257.0" r="4.5" fill="#7c0090" fill-opacity="0.38"/><circle cx="252.0" cy="248.0" r="4.5" fill="#460060" fill-opacity="0.5"/><circle cx="277.0" cy="252.0" r="4.5" fill="#0000ff" fill-opacity="0.5"/><circle cx="277.0" cy="258.0" r="4.5" fill="#0000ff" fill-opacity="0.5"/><circle cx="288.0" cy="237.0" r="4.5" fill="#7c0090" fill-opacity="0.55"/><circle cx="283.0" cy="243.0" r="4.5" fill="#00ff00" fill-opacity="0.3"/><circle cx="236.0" cy="226.0" r="4.5" fill="#cbdd00" fill-opacity="0.5"/><circle cx="244.0" cy="232.0" r="4.5" fill="#cbdd00" fill-opacity="0.5"/><circle cx="252.0" cy="236.0" r="4.5" fill="#cbdd00" fill-opacity="0.5"/><circle cx="258.0" cy="241.0" r="4.5" fill="#cbdd00" fill-opacity="0.5"/><circle cx="262.0" cy="244.0" r="4.5" fill="#cbdd00" fill-opacity="0.5"/><circle cx="240.0" cy="228.0" r="4.5" fill="#bad100" fill-opacity="0.5"/><circle cx="292.1" cy="214.8" r="4.5" fill="#00c61d" fill-opacity="0.42"/><circle cx="325.6" cy="216.1" r="4.5" fill="#00be21" fill-opacity="0.42"/><circle cx="305.3" cy="212.4" r="4.5" fill="#00f505" fill-opacity="0.42"/><circle cx="300.3" cy="211.7" r="4.5" fill="#00e10f" fill-opacity="0.42"/><circle cx="277.1" cy="218.7" r="4.5" fill="#00d714" fill-opacity="0.42"/><circle cx="310.9" cy="210.0" r="4.5" fill="#00c41e" fill-opacity="0.42"/><circle cx="280.4" cy="222.7" r="4.5" fill="#0afb00" fill-opacity="0.42"/><circle cx="307.5" cy="210.3" r="4.5" fill="#00db12" fill-opacity="0.42"/><circle cx="291.8" cy="215.1" r="4.5" fill="#00c020" fill-opacity="0.42"/><circle cx="296.5" cy="223.2" r="4.5" fill="#0cfa00" fill-opacity="0.42"/><circle cx="295.9" cy="225.0" r="4.5" fill="#00cb1a" fill-opacity="0.42"/><circle cx="288.3" cy="225.0" r="4.5" fill="#08fc00" fill-opacity="0.42"/><circle cx="288.1" cy="221.9" r="4.5" fill="#00b326" fill-opacity="0.42"/><circle cx="312.1" cy="206.1" r="4.5" fill="#14f700" fill-opacity="0.42"/><circle cx="286.3" cy="224.2" r="4.5" fill="#00f803" fill-opacity="0.42"/><circle cx="285.8" cy="212.3" r="4.5" fill="#14f700" fill-opacity="0.42"/><circle cx="325.2" cy="215.3" r="4.5" fill="#00fb02" fill-opacity="0.42"/><circle cx="291.6" cy="211.0" r="4.5" fill="#00eb0a" fill-opacity="0.42"/><circle cx="288.2" cy="214.1" r="4.5" fill="#00ef08" fill-opacity="0.42"/><circle cx="285.5" cy="223.2" r="4.5" fill="#00f604" fill-opacity="0.42"/><circle cx="308.9" cy="227.4" r="4.5" fill="#00f008" fill-opacity="0.42"/><circle cx="320.4" cy="212.4" r="4.5" fill="#00ca1b" fill-opacity="0.42"/><circle cx="290.4" cy="227.1" r="4.5" fill="#0afb00" fill-opacity="0.42"/><circle cx="307.1" cy="219.3" r="4.5" fill="#00ce19" fill-opacity="0.42"/><circle cx="299.1" cy="210.3" r="4.5" fill="#00e90b" fill-opacity="0.42"/><circle cx="312.4" cy="206.8" r="4.5" fill="#0afb00" fill-opacity="0.42"/><circle cx="303.5" cy="221.5" r="4.5" fill="#05fd00" fill-opacity="0.42"/><circle cx="296.2" cy="218.1" r="4.5" fill="#00b724" fill-opacity="0.42"/><circle cx="285.3" cy="220.4" r="4.5" fill="#00d117" fill-opacity="0.42"/><circle cx="304.5" cy="203.4" r="4.5" fill="#00ea0b" fill-opacity="0.42"/><circle cx="293.8" cy="223.8" r="4.5" fill="#13f700" fill-opacity="0.42"/><circle cx="284.3" cy="222.8" r="4.5" fill="#00b227" fill-opacity="0.42"/><circle cx="307.2" cy="205.0" r="4.5" fill="#00d515" fill-opacity="0.42"/><circle cx="316.9" cy="216.9" r="4.5" fill="#00ee08" fill-opacity="0.42"/><circle cx="297.0" cy="212.3" r="4.5" fill="#00eb0a" fill-opacity="0.42"/><circle cx="279.0" cy="215.3" r="4.5" fill="#00c020" fill-opacity="0.42"/><circle cx="294.1" cy="212.4" r="4.5" fill="#00c61d" fill-opacity="0.42"/><circle cx="317.8" cy="210.1" r="4.5" fill="#00ed09" fill-opacity="0.42"/><circle cx="292.2" cy="216.0" r="4.5" fill="#00cb1a" fill-opacity="0.42"/><circle cx="320.6" cy="215.2" r="4.5" fill="#00cb1a" fill-opacity="0.42"/><circle cx="307.9" cy="210.7" r="4.5" fill="#00b525" fill-opacity="0.42"/><circle cx="293.9" cy="211.5" r="4.5" fill="#0bfb00" fill-opacity="0.42"/><circle cx="302.7" cy="226.6" r="4.5" fill="#00cd19" fill-opacity="0.42"/><circle cx="290.0" cy="227.9" r="4.5" fill="#00ed09" fill-opacity="0.42"/><circle cx="293.1" cy="217.1" r="4.5" fill="#00b227" fill-opacity="0.42"/><circle cx="318.3" cy="226.0" r="4.5" fill="#00db12" fill-opacity="0.42"/><circle cx="283.9" cy="212.1" r="4.5" fill="#00f605" fill-opacity="0.42"/><circle cx="323.8" cy="208.5" r="4.5" fill="#00c11f" fill-opacity="0.42"/><circle cx="294.7" cy="213.1" r="4.5" fill="#00c020" fill-opacity="0.42"/><circle cx="296.1" cy="228.9" r="4.5" fill="#00f804" fill-opacity="0.42"/><circle cx="280.8" cy="210.3" r="4.5" fill="#00fd01" fill-opacity="0.42"/><circle cx="295.1" cy="214.9" r="4.5" fill="#11f800" fill-opacity="0.42"/><circle cx="313.0" cy="228.6" r="4.5" fill="#00b625" fill-opacity="0.42"/><circle cx="294.1" cy="209.5" r="4.5" fill="#00cf18" fill-opacity="0.42"/><circle cx="300.8" cy="207.4" r="4.5" fill="#00d714" fill-opacity="0.42"/><circle cx="303.1" cy="214.3" r="4.5" fill="#00fc02" fill-opacity="0.42"/><circle cx="292.4" cy="217.1" r="4.5" fill="#00ea0b" fill-opacity="0.42"/><circle cx="292.2" cy="213.5" r="4.5" fill="#00dd11" fill-opacity="0.42"/><circle cx="300.3" cy="226.5" r="4.5" fill="#00ef08" fill-opacity="0.42"/><circle cx="298.8" cy="213.9" r="4.5" fill="#00cf18" fill-opacity="0.42"/><circle cx="317.6" cy="226.8" r="4.5" fill="#00d615" fill-opacity="0.42"/><circle cx="285.6" cy="217.7" r="4.5" fill="#00d416" fill-opacity="0.42"/><circle cx="293.6" cy="204.7" r="4.5" fill="#00c71c" fill-opacity="0.42"/><circle cx="276.2" cy="217.2" r="4.5" fill="#00bf20" fill-opacity="0.42"/><circle cx="312.2" cy="208.9" r="4.5" fill="#00e60d" fill-opacity="0.42"/><circle cx="279.4" cy="210.6" r="4.5" fill="#00dd11" fill-opacity="0.42"/><circle cx="285.1" cy="214.6" r="4.5" fill="#00b923" fill-opacity="0.42"/><circle cx="299.4" cy="219.0" r="4.5" fill="#00ca1b" fill-opacity="0.42"/><circle cx="320.0" cy="209.0" r="4.5" fill="#00d615" fill-opacity="0.42"/><circle cx="302.2" cy="208.3" r="4.5" fill="#00d614" fill-opacity="0.42"/><circle cx="310.3" cy="218.1" r="4.5" fill="#00e40d" fill-opacity="0.42"/><circle cx="285.6" cy="215.9" r="4.5" fill="#0ff900" fill-opacity="0.42"/><circle cx="295.6" cy="206.4" r="4.5" fill="#00f803" fill-opacity="0.42"/><circle cx="296.3" cy="224.3" r="4.5" fill="#00f803" fill-opacity="0.42"/><circle cx="324.6" cy="221.6" r="4.5" fill="#00b326" fill-opacity="0.42"/><circle cx="289.8" cy="204.8" r="4.5" fill="#00e70c" fill-opacity="0.42"/><circle cx="306.2" cy="209.8" r="4.5" fill="#00c81c" fill-opacity="0.42"/><circle cx="279.4" cy="210.6" r="4.5" fill="#09fc00" fill-opacity="0.42"/><circle cx="304.4" cy="211.2" r="4.5" fill="#00dc12" fill-opacity="0.42"/><circle cx="302.6" cy="215.9" r="4.5" fill="#00f804" fill-opacity="0.42"/><circle cx="297.5" cy="223.6" r="4.5" fill="#0dfa00" fill-opacity="0.42"/><circle cx="320.6" cy="208.3" r="4.5" fill="#00e90b" fill-opacity="0.42"/><circle cx="289.7" cy="224.4" r="4.5" fill="#0ff900" fill-opacity="0.42"/><circle cx="326.2" cy="218.6" r="4.5" fill="#00f207" fill-opacity="0.42"/><circle cx="276.9" cy="216.1" r="4.5" fill="#00b227" fill-opacity="0.42"/><circle cx="290.4" cy="217.1" r="4.5" fill="#00f306" fill-opacity="0.42"/><circle cx="323.8" cy="209.8" r="4.5" fill="#00fc01" fill-opacity="0.42"/><circle cx="310.1" cy="208.9" r="4.5" fill="#00e20f" fill-opacity="0.42"/><circle cx="313.5" cy="227.6" r="4.5" fill="#00b028" fill-opacity="0.42"/><circle cx="308.1" cy="226.6" r="4.5" fill="#00fd01" fill-opacity="0.42"/><circle cx="306.2" cy="213.9" r="4.5" fill="#08fc00" fill-opacity="0.42"/><circle cx="299.8" cy="208.3" r="4.5" fill="#00b923" fill-opacity="0.42"/><circle cx="317.0" cy="207.4" r="4.5" fill="#04fd00" fill-opacity="0.42"/><circle cx="293.6" cy="203.2" r="4.5" fill="#00e50d" fill-opacity="0.42"/><circle cx="312.8" cy="219.1" r="4.5" fill="#00f207" fill-opacity="0.42"/><circle cx="299.2" cy="210.0" r="4.5" fill="#00fe01" fill-opacity="0.42"/><circle cx="303.9" cy="227.4" r="4.5" fill="#00c41e" fill-opacity="0.42"/><circle cx="287.3" cy="224.2" r="4.5" fill="#00bb22" fill-opacity="0.42"/><circle cx="291.5" cy="212.4" r="4.5" fill="#00f206" fill-opacity="0.42"/><circle cx="321.0" cy="210.9" r="4.5" fill="#00f505" fill-opacity="0.42"/><circle cx="297.0" cy="212.8" r="4.5" fill="#00b127" fill-opacity="0.42"/><circle cx="284.4" cy="219.7" r="4.5" fill="#00dc11" fill-opacity="0.42"/><circle cx="321.3" cy="219.0" r="4.5" fill="#00f406" fill-opacity="0.42"/><circle cx="301.9" cy="228.5" r="4.5" fill="#0afb00" fill-opacity="0.42"/><circle cx="297.0" cy="227.9" r="4.5" fill="#00f704" fill-opacity="0.42"/><circle cx="298.5" cy="226.2" r="4.5" fill="#00fd01" fill-opacity="0.42"/><circle cx="322.6" cy="207.6" r="4.5" fill="#11f800" fill-opacity="0.42"/><circle cx="280.1" cy="218.9" r="4.5" fill="#00ea0a" fill-opacity="0.42"/><circle cx="318.6" cy="211.7" r="4.5" fill="#00fe01" fill-opacity="0.42"/><circle cx="282.4" cy="212.1" r="4.5" fill="#00ed09" fill-opacity="0.42"/><circle cx="289.5" cy="205.6" r="4.5" fill="#00de11" fill-opacity="0.42"/><circle cx="278.1" cy="215.5" r="4.5" fill="#00ce19" fill-opacity="0.42"/><circle cx="276.8" cy="214.2" r="4.5" fill="#00fe00" fill-opacity="0.42"/><circle cx="304.0" cy="210.4" r="4.5" fill="#00d515" fill-opacity="0.42"/><circle cx="303.6" cy="225.3" r="4.5" fill="#00c51d" fill-opacity="0.42"/><circle cx="307.3" cy="203.9" r="4.5" fill="#00f803" fill-opacity="0.42"/><circle cx="289.8" cy="216.4" r="4.5" fill="#00d814" fill-opacity="0.42"/><circle cx="297.1" cy="216.0" r="4.5" fill="#00d615" fill-opacity="0.42"/><circle cx="297.7" cy="205.7" r="4.5" fill="#00bc22" fill-opacity="0.42"/><circle cx="306.3" cy="220.9" r="4.5" fill="#13f700" fill-opacity="0.42"/><circle cx="284.9" cy="216.2" r="4.5" fill="#00e50d" fill-opacity="0.42"/><circle cx="300.1" cy="228.5" r="4.5" fill="#0cfa00" fill-opacity="0.42"/><circle cx="318.4" cy="210.2" r="4.5" fill="#00db12" fill-opacity="0.42"/><circle cx="305.3" cy="209.4" r="4.5" fill="#03fe00" fill-opacity="0.42"/><circle cx="300.0" cy="218.7" r="4.5" fill="#00f107" fill-opacity="0.42"/><circle cx="288.4" cy="209.0" r="4.5" fill="#00f605" fill-opacity="0.42"/><circle cx="295.4" cy="213.8" r="4.5" fill="#00c11f" fill-opacity="0.42"/><circle cx="308.2" cy="222.2" r="4.5" fill="#01ff00" fill-opacity="0.42"/><circle cx="293.4" cy="204.1" r="4.5" fill="#00c41e" fill-opacity="0.42"/><circle cx="317.4" cy="219.4" r="4.5" fill="#00ec09" fill-opacity="0.42"/><circle cx="307.4" cy="229.5" r="4.5" fill="#10f900" fill-opacity="0.42"/><circle cx="279.4" cy="216.8" r="4.5" fill="#00b127" fill-opacity="0.42"/><circle cx="312.8" cy="223.4" r="4.5" fill="#00c81c" fill-opacity="0.42"/><circle cx="314.4" cy="217.7" r="4.5" fill="#00ba23" fill-opacity="0.42"/><circle cx="312.3" cy="222.8" r="4.5" fill="#00f306" fill-opacity="0.42"/><circle cx="295.6" cy="217.8" r="4.5" fill="#11f800" fill-opacity="0.42"/><circle cx="324.7" cy="215.7" r="4.5" fill="#00c91b" fill-opacity="0.42"/><circle cx="303.7" cy="223.0" r="4.5" fill="#00da12" fill-opacity="0.42"/><circle cx="302.9" cy="225.5" r="4.5" fill="#00b625" fill-opacity="0.42"/><circle cx="292.1" cy="222.1" r="4.5" fill="#00b227" fill-opacity="0.42"/><circle cx="298.0" cy="214.2" r="4.5" fill="#00e90b" fill-opacity="0.42"/><circle cx="298.3" cy="213.3" r="4.5" fill="#00ee08" fill-opacity="0.42"/><circle cx="293.8" cy="203.8" r="4.5" fill="#00d714" fill-opacity="0.42"/><circle cx="315.4" cy="209.8" r="4.5" fill="#00ea0b" fill-opacity="0.42"/><circle cx="310.9" cy="208.8" r="4.5" fill="#00c51e" fill-opacity="0.42"/><circle cx="305.3" cy="224.1" r="4.5" fill="#00fd01" fill-opacity="0.42"/><circle cx="292.0" cy="214.3" r="4.5" fill="#00fb02" fill-opacity="0.42"/><circle cx="305.9" cy="225.3" r="4.5" fill="#00f207" fill-opacity="0.42"/><circle cx="277.5" cy="220.6" r="4.5" fill="#00ce19" fill-opacity="0.42"/><circle cx="309.7" cy="211.2" r="4.5" fill="#00ea0a" fill-opacity="0.42"/><circle cx="321.4" cy="221.1" r="4.5" fill="#00ec09" fill-opacity="0.42"/><circle cx="301.5" cy="217.9" r="4.5" fill="#00fe01" fill-opacity="0.42"/><circle cx="300.7" cy="224.7" r="4.5" fill="#00b724" fill-opacity="0.42"/><circle cx="299.1" cy="208.9" r="4.5" fill="#00ed09" fill-opacity="0.42"/><circle cx="316.3" cy="227.1" r="4.5" fill="#00ed09" fill-opacity="0.42"/><circle cx="304.2" cy="204.1" r="4.5" fill="#00b924" fill-opacity="0.42"/><circle cx="316.6" cy="217.0" r="4.5" fill="#00ea0a" fill-opacity="0.42"/><circle cx="323.2" cy="222.6" r="4.5" fill="#00f008" fill-opacity="0.42"/><circle cx="304.4" cy="206.0" r="4.5" fill="#0ef900" fill-opacity="0.42"/><circle cx="292.0" cy="220.2" r="4.5" fill="#10f900" fill-opacity="0.42"/><circle cx="313.7" cy="224.8" r="4.5" fill="#11f800" fill-opacity="0.42"/><circle cx="295.5" cy="224.4" r="4.5" fill="#00db12" fill-opacity="0.42"/><circle cx="316.3" cy="224.9" r="4.5" fill="#00f604" fill-opacity="0.42"/><circle cx="298.7" cy="204.7" r="4.5" fill="#02fe00" fill-opacity="0.42"/><circle cx="305.9" cy="223.1" r="4.5" fill="#00cb1a" fill-opacity="0.42"/><circle cx="288.6" cy="220.9" r="4.5" fill="#00bd22" fill-opacity="0.42"/><circle cx="304.1" cy="223.5" r="4.5" fill="#00ee09" fill-opacity="0.42"/><circle cx="303.1" cy="218.8" r="4.5" fill="#12f800" fill-opacity="0.42"/><circle cx="288.6" cy="208.3" r="4.5" fill="#00c21f" fill-opacity="0.42"/><circle cx="316.0" cy="214.8" r="4.5" fill="#00cf18" fill-opacity="0.42"/><circle cx="312.6" cy="212.8" r="4.5" fill="#00cd19" fill-opacity="0.42"/><circle cx="289.3" cy="204.2" r="4.5" fill="#00bc22" fill-opacity="0.42"/><circle cx="304.0" cy="227.1" r="4.5" fill="#0afb00" fill-opacity="0.42"/><circle cx="287.4" cy="219.8" r="4.5" fill="#0efa00" fill-opacity="0.42"/><circle cx="290.9" cy="221.4" r="4.5" fill="#00e010" fill-opacity="0.42"/><circle cx="300.1" cy="221.5" r="4.5" fill="#00e90b" fill-opacity="0.42"/><circle cx="291.5" cy="216.9" r="4.5" fill="#00d018" fill-opacity="0.42"/><circle cx="302.5" cy="220.3" r="4.5" fill="#00ee08" fill-opacity="0.42"/><circle cx="293.1" cy="218.5" r="4.5" fill="#00d714" fill-opacity="0.42"/><circle cx="296.2" cy="206.1" r="4.5" fill="#00cc1a" fill-opacity="0.42"/><circle cx="318.1" cy="217.3" r="4.5" fill="#00ec09" fill-opacity="0.42"/><circle cx="317.3" cy="219.4" r="4.5" fill="#0ef900" fill-opacity="0.42"/><circle cx="282.1" cy="216.3" r="4.5" fill="#00e20f" fill-opacity="0.42"/><circle cx="296.0" cy="222.3" r="4.5" fill="#12f800" fill-opacity="0.42"/><circle cx="287.9" cy="226.8" r="4.5" fill="#00d913" fill-opacity="0.42"/><circle cx="300.4" cy="227.4" r="4.5" fill="#00fd01" fill-opacity="0.42"/><circle cx="282.0" cy="218.1" r="4.5" fill="#00b426" fill-opacity="0.42"/><circle cx="289.2" cy="224.1" r="4.5" fill="#00b525" fill-opacity="0.42"/><circle cx="304.8" cy="205.0" r="4.5" fill="#00d416" fill-opacity="0.42"/><circle cx="287.8" cy="220.8" r="4.5" fill="#00f505" fill-opacity="0.42"/><circle cx="313.7" cy="204.5" r="4.5" fill="#00eb0a" fill-opacity="0.42"/><circle cx="306.3" cy="214.5" r="4.5" fill="#04fd00" fill-opacity="0.42"/><circle cx="287.6" cy="215.7" r="4.5" fill="#00ed09" fill-opacity="0.42"/><circle cx="312.0" cy="215.2" r="4.5" fill="#00fd01" fill-opacity="0.42"/><circle cx="304.9" cy="227.4" r="4.5" fill="#00f903" fill-opacity="0.42"/><circle cx="321.2" cy="216.1" r="4.5" fill="#00e90b" fill-opacity="0.42"/><circle cx="303.2" cy="225.8" r="4.5" fill="#00d117" fill-opacity="0.42"/><circle cx="282.4" cy="212.7" r="4.5" fill="#00da13" fill-opacity="0.42"/><circle cx="314.5" cy="204.0" r="4.5" fill="#00ef08" fill-opacity="0.42"/><circle cx="288.0" cy="226.8" r="4.5" fill="#00f107" fill-opacity="0.42"/><circle cx="297.4" cy="204.6" r="4.5" fill="#00ce19" fill-opacity="0.42"/><circle cx="325.0" cy="213.1" r="4.5" fill="#01ff00" fill-opacity="0.42"/><circle cx="288.9" cy="209.2" r="4.5" fill="#00d913" fill-opacity="0.42"/><circle cx="292.5" cy="221.5" r="4.5" fill="#00c81c" fill-opacity="0.42"/><circle cx="289.6" cy="214.6" r="4.5" fill="#00f704" fill-opacity="0.42"/><circle cx="297.0" cy="221.3" r="4.5" fill="#00de11" fill-opacity="0.42"/><circle cx="306.6" cy="218.5" r="4.5" fill="#0dfa00" fill-opacity="0.42"/><circle cx="319.5" cy="223.0" r="4.5" fill="#07fc00" fill-opacity="0.42"/><circle cx="280.2" cy="219.7" r="4.5" fill="#00e10f" fill-opacity="0.42"/><circle cx="314.6" cy="227.1" r="4.5" fill="#00bc22" fill-opacity="0.42"/><circle cx="314.4" cy="218.3" r="4.5" fill="#00df10" fill-opacity="0.42"/><circle cx="306.7" cy="207.6" r="4.5" fill="#00cb1a" fill-opacity="0.42"/><circle cx="301.7" cy="227.8" r="4.5" fill="#00f008" fill-opacity="0.42"/><circle cx="290.6" cy="226.5" r="4.5" fill="#00bf20" fill-opacity="0.42"/><circle cx="311.3" cy="206.7" r="4.5" fill="#00e70c" fill-opacity="0.42"/><circle cx="296.5" cy="205.4" r="4.5" fill="#00c020" fill-opacity="0.42"/><circle cx="304.9" cy="211.3" r="4.5" fill="#00eb0a" fill-opacity="0.42"/><circle cx="295.9" cy="210.1" r="4.5" fill="#00fd01" fill-opacity="0.42"/><circle cx="321.8" cy="216.9" r="4.5" fill="#00b525" fill-opacity="0.42"/><circle cx="311.3" cy="215.1" r="4.5" fill="#00ce19" fill-opacity="0.42"/><circle cx="283.9" cy="221.4" r="4.5" fill="#00e90b" fill-opacity="0.42"/><circle cx="325.6" cy="210.3" r="4.5" fill="#0ff900" fill-opacity="0.42"/><circle cx="300.0" cy="211.3" r="4.5" fill="#10f900" fill-opacity="0.42"/><circle cx="297.0" cy="227.7" r="4.5" fill="#00b028" fill-opacity="0.42"/><circle cx="312.9" cy="221.5" r="4.5" fill="#12f800" fill-opacity="0.42"/><circle cx="284.6" cy="213.4" r="4.5" fill="#00eb0a" fill-opacity="0.42"/><circle cx="293.5" cy="227.7" r="4.5" fill="#00bf20" fill-opacity="0.42"/><circle cx="298.6" cy="224.6" r="4.5" fill="#00d416" fill-opacity="0.42"/><circle cx="304.5" cy="202.2" r="4.5" fill="#00ea0b" fill-opacity="0.42"/><circle cx="295.4" cy="206.3" r="4.5" fill="#00c31e" fill-opacity="0.42"/><circle cx="308.6" cy="220.7" r="4.5" fill="#08fc00" fill-opacity="0.42"/><circle cx="313.9" cy="213.2" r="4.5" fill="#00e00f" fill-opacity="0.42"/><circle cx="312.8" cy="221.5" r="4.5" fill="#13f800" fill-opacity="0.42"/><circle cx="293.0" cy="213.9" r="4.5" fill="#00d316" fill-opacity="0.42"/><circle cx="300.1" cy="222.6" r="4.5" fill="#00e10f" fill-opacity="0.42"/><circle cx="293.2" cy="221.3" r="4.5" fill="#0ff900" fill-opacity="0.42"/><circle cx="324.6" cy="221.2" r="4.5" fill="#00f107" fill-opacity="0.42"/><circle cx="311.8" cy="218.8" r="4.5" fill="#00e10f" fill-opacity="0.42"/><circle cx="313.7" cy="215.9" r="4.5" fill="#00bc22" fill-opacity="0.42"/><circle cx="285.3" cy="216.9" r="4.5" fill="#00c21f" fill-opacity="0.42"/><circle cx="297.0" cy="218.0" r="4.5" fill="#00db12" fill-opacity="0.42"/><circle cx="290.7" cy="206.8" r="4.5" fill="#00f505" fill-opacity="0.42"/><circle cx="324.4" cy="211.1" r="4.5" fill="#00b028" fill-opacity="0.42"/><circle cx="279.8" cy="220.5" r="4.5" fill="#00ca1b" fill-opacity="0.42"/><circle cx="303.9" cy="218.0" r="4.5" fill="#00ff00" fill-opacity="0.42"/><circle cx="307.2" cy="218.6" r="4.5" fill="#00ed09" fill-opacity="0.42"/><circle cx="302.3" cy="208.2" r="4.5" fill="#00de11" fill-opacity="0.42"/><circle cx="313.9" cy="216.4" r="4.5" fill="#00b426" fill-opacity="0.42"/><circle cx="320.8" cy="216.7" r="4.5" fill="#00c21f" fill-opacity="0.42"/><circle cx="307.9" cy="204.4" r="4.5" fill="#00e90b" fill-opacity="0.42"/><circle cx="309.7" cy="204.0" r="4.5" fill="#00c61d" fill-opacity="0.42"/><circle cx="310.2" cy="215.6" r="4.5" fill="#00b526" fill-opacity="0.42"/><circle cx="284.2" cy="222.8" r="4.5" fill="#00f704" fill-opacity="0.42"/><circle cx="305.4" cy="214.8" r="4.5" fill="#00d814" fill-opacity="0.42"/><circle cx="304.3" cy="224.6" r="4.5" fill="#00ec0a" fill-opacity="0.42"/><circle cx="289.1" cy="205.5" r="4.5" fill="#00ec0a" fill-opacity="0.42"/><circle cx="292.0" cy="209.6" r="4.5" fill="#00f405" fill-opacity="0.42"/><circle cx="314.2" cy="211.5" r="4.5" fill="#09fb00" fill-opacity="0.42"/><circle cx="290.6" cy="226.4" r="4.5" fill="#00fb02" fill-opacity="0.42"/><circle cx="301.2" cy="205.7" r="4.5" fill="#00ce19" fill-opacity="0.42"/><circle cx="305.7" cy="220.1" r="4.5" fill="#03fe00" fill-opacity="0.42"/><circle cx="291.9" cy="223.4" r="4.5" fill="#14f700" fill-opacity="0.42"/><circle cx="285.5" cy="215.9" r="4.5" fill="#00f007" fill-opacity="0.42"/><circle cx="277.3" cy="212.8" r="4.5" fill="#00fb02" fill-opacity="0.42"/><circle cx="312.8" cy="210.6" r="4.5" fill="#00c71c" fill-opacity="0.42"/><circle cx="322.1" cy="224.8" r="4.5" fill="#00e60d" fill-opacity="0.42"/><circle cx="313.9" cy="214.5" r="4.5" fill="#00e80c" fill-opacity="0.42"/><circle cx="299.0" cy="210.3" r="4.5" fill="#00f505" fill-opacity="0.42"/><circle cx="290.8" cy="203.8" r="4.5" fill="#00f007" fill-opacity="0.42"/><circle cx="308.3" cy="223.6" r="4.5" fill="#00b127" fill-opacity="0.42"/><circle cx="314.4" cy="224.9" r="4.5" fill="#00eb0a" fill-opacity="0.42"/><circle cx="294.6" cy="210.9" r="4.5" fill="#00d416" fill-opacity="0.42"/><circle cx="320.3" cy="207.6" r="4.5" fill="#00d316" fill-opacity="0.42"/><circle cx="282.4" cy="215.7" r="4.5" fill="#07fc00" fill-opacity="0.42"/><circle cx="313.3" cy="206.1" r="4.5" fill="#00e40e" fill-opacity="0.42"/><circle cx="293.5" cy="208.2" r="4.5" fill="#00ea0a" fill-opacity="0.42"/><circle cx="304.5" cy="226.8" r="4.5" fill="#00d813" fill-opacity="0.42"/><circle cx="297.4" cy="215.8" r="4.5" fill="#00d316" fill-opacity="0.42"/><circle cx="283.1" cy="219.5" r="4.5" fill="#00d615" fill-opacity="0.42"/><circle cx="311.2" cy="213.7" r="4.5" fill="#00e20e" fill-opacity="0.42"/><circle cx="324.3" cy="215.5" r="4.5" fill="#00f107" fill-opacity="0.42"/><circle cx="299.8" cy="202.1" r="4.5" fill="#00e90b" fill-opacity="0.42"/><circle cx="308.2" cy="212.3" r="4.5" fill="#00b128" fill-opacity="0.42"/><circle cx="289.4" cy="216.4" r="4.5" fill="#00bf20" fill-opacity="0.42"/><circle cx="287.1" cy="205.1" r="4.5" fill="#00c020" fill-opacity="0.42"/><circle cx="307.5" cy="206.4" r="4.5" fill="#00b028" fill-opacity="0.42"/><circle cx="324.3" cy="221.2" r="4.5" fill="#00cb1a" fill-opacity="0.42"/><circle cx="301.9" cy="228.6" r="4.5" fill="#00e40e" fill-opacity="0.42"/><circle cx="278.4" cy="213.1" r="4.5" fill="#00fc01" fill-opacity="0.42"/><circle cx="298.1" cy="227.0" r="4.5" fill="#0cfa00" fill-opacity="0.42"/><circle cx="280.3" cy="211.8" r="4.5" fill="#00e010" fill-opacity="0.42"/><circle cx="303.2" cy="228.5" r="4.5" fill="#00be21" fill-opacity="0.42"/><circle cx="304.5" cy="205.7" r="4.5" fill="#00b923" fill-opacity="0.42"/><circle cx="304.9" cy="210.8" r="4.5" fill="#00ec0a" fill-opacity="0.42"/><circle cx="306.0" cy="217.6" r="4.5" fill="#00ee09" fill-opacity="0.42"/><circle cx="317.7" cy="206.4" r="4.5" fill="#06fd00" fill-opacity="0.42"/><circle cx="308.7" cy="223.9" r="4.5" fill="#00be21" fill-opacity="0.42"/><circle cx="283.7" cy="207.1" r="4.5" fill="#0cfa00" fill-opacity="0.42"/><circle cx="313.8" cy="215.5" r="4.5" fill="#00d316" fill-opacity="0.42"/><circle cx="317.8" cy="207.6" r="4.5" fill="#00fc01" fill-opacity="0.42"/><circle cx="275.5" cy="202.6" r="4.5" fill="#29ef00" fill-opacity="0.42"/><circle cx="275.8" cy="208.8" r="4.5" fill="#00f704" fill-opacity="0.42"/><circle cx="278.1" cy="210.6" r="4.5" fill="#00f306" fill-opacity="0.42"/><circle cx="282.1" cy="207.9" r="4.5" fill="#00f306" fill-opacity="0.42"/><circle cx="275.1" cy="206.5" r="4.5" fill="#21f200" fill-opacity="0.42"/><circle cx="290.2" cy="204.3" r="4.5" fill="#0cfa00" fill-opacity="0.42"/><circle cx="284.6" cy="211.6" r="4.5" fill="#00f306" fill-opacity="0.42"/><circle cx="279.3" cy="202.4" r="4.5" fill="#10f900" fill-opacity="0.42"/><circle cx="275.5" cy="207.3" r="4.5" fill="#00f704" fill-opacity="0.42"/><circle cx="268.7" cy="208.5" r="4.5" fill="#08fc00" fill-opacity="0.42"/><circle cx="270.4" cy="207.1" r="4.5" fill="#00e30e" fill-opacity="0.42"/><circle cx="273.3" cy="210.1" r="4.5" fill="#17f600" fill-opacity="0.42"/><circle cx="273.4" cy="204.5" r="4.5" fill="#00e70c" fill-opacity="0.42"/><circle cx="277.1" cy="211.4" r="4.5" fill="#00f406" fill-opacity="0.42"/><circle cx="267.0" cy="207.6" r="4.5" fill="#0afb00" fill-opacity="0.42"/><circle cx="279.5" cy="201.4" r="4.5" fill="#04fd00" fill-opacity="0.42"/><circle cx="288.3" cy="207.5" r="4.5" fill="#13f800" fill-opacity="0.42"/><circle cx="267.3" cy="208.1" r="4.5" fill="#12f800" fill-opacity="0.42"/><circle cx="276.1" cy="201.4" r="4.5" fill="#16f600" fill-opacity="0.42"/><circle cx="275.7" cy="207.2" r="4.5" fill="#00e60d" fill-opacity="0.42"/><circle cx="279.9" cy="209.9" r="4.5" fill="#0efa00" fill-opacity="0.42"/><circle cx="285.5" cy="201.0" r="4.5" fill="#00f903" fill-opacity="0.42"/><circle cx="275.8" cy="205.5" r="4.5" fill="#00e60d" fill-opacity="0.42"/><circle cx="287.2" cy="207.9" r="4.5" fill="#0bfb00" fill-opacity="0.42"/><circle cx="278.1" cy="201.2" r="4.5" fill="#0dfa00" fill-opacity="0.42"/><circle cx="290.9" cy="202.5" r="4.5" fill="#29ef00" fill-opacity="0.42"/><circle cx="273.6" cy="203.0" r="4.5" fill="#0cfa00" fill-opacity="0.42"/><circle cx="272.3" cy="206.7" r="4.5" fill="#00f405" fill-opacity="0.42"/><circle cx="269.1" cy="202.4" r="4.5" fill="#00e10f" fill-opacity="0.42"/><circle cx="288.8" cy="205.8" r="4.5" fill="#00ea0b" fill-opacity="0.42"/><circle cx="273.1" cy="201.9" r="4.5" fill="#00df10" fill-opacity="0.42"/><circle cx="288.7" cy="207.7" r="4.5" fill="#08fc00" fill-opacity="0.42"/><circle cx="276.4" cy="203.7" r="4.5" fill="#00e010" fill-opacity="0.42"/><circle cx="282.1" cy="209.5" r="4.5" fill="#1ef300" fill-opacity="0.42"/><circle cx="270.5" cy="209.2" r="4.5" fill="#24f100" fill-opacity="0.42"/><circle cx="285.6" cy="210.2" r="4.5" fill="#00f704" fill-opacity="0.42"/><circle cx="279.6" cy="203.0" r="4.5" fill="#00eb0a" fill-opacity="0.42"/><circle cx="278.5" cy="200.8" r="4.5" fill="#20f200" fill-opacity="0.42"/><circle cx="278.3" cy="206.1" r="4.5" fill="#00e80c" fill-opacity="0.42"/><circle cx="292.5" cy="204.1" r="4.5" fill="#29ef00" fill-opacity="0.42"/><circle cx="273.9" cy="209.5" r="4.5" fill="#00fd01" fill-opacity="0.42"/><circle cx="289.5" cy="209.4" r="4.5" fill="#11f800" fill-opacity="0.42"/><circle cx="275.1" cy="205.9" r="4.5" fill="#00fb02" fill-opacity="0.42"/><circle cx="282.9" cy="207.3" r="4.5" fill="#00fe00" fill-opacity="0.42"/><circle cx="276.6" cy="211.1" r="4.5" fill="#16f600" fill-opacity="0.42"/><circle cx="277.2" cy="206.7" r="4.5" fill="#18f600" fill-opacity="0.42"/><circle cx="270.0" cy="207.3" r="4.5" fill="#03fe00" fill-opacity="0.42"/><circle cx="282.7" cy="204.4" r="4.5" fill="#00e90b" fill-opacity="0.42"/><circle cx="287.8" cy="210.9" r="4.5" fill="#00fd01" fill-opacity="0.42"/><circle cx="270.9" cy="208.6" r="4.5" fill="#00e80c" fill-opacity="0.42"/><circle cx="288.8" cy="205.1" r="4.5" fill="#2aef00" fill-opacity="0.42"/><circle cx="287.2" cy="210.5" r="4.5" fill="#00f008" fill-opacity="0.42"/><circle cx="278.7" cy="203.7" r="4.5" fill="#00fd01" fill-opacity="0.42"/><circle cx="284.6" cy="206.4" r="4.5" fill="#11f800" fill-opacity="0.42"/><circle cx="291.0" cy="205.0" r="4.5" fill="#00e90b" fill-opacity="0.42"/><circle cx="288.7" cy="207.1" r="4.5" fill="#24f100" fill-opacity="0.42"/><circle cx="279.7" cy="208.0" r="4.5" fill="#00e40d" fill-opacity="0.42"/><circle cx="275.3" cy="209.7" r="4.5" fill="#00f505" fill-opacity="0.42"/><circle cx="290.3" cy="202.2" r="4.5" fill="#00fb02" fill-opacity="0.42"/><circle cx="266.7" cy="206.0" r="4.5" fill="#09fb00" fill-opacity="0.42"/><circle cx="309.0" cy="214.2" r="4.5" fill="#00fb02" fill-opacity="0.42"/><circle cx="311.1" cy="211.8" r="4.5" fill="#00f008" fill-opacity="0.42"/><circle cx="311.7" cy="212.1" r="4.5" fill="#00f007" fill-opacity="0.42"/><circle cx="310.1" cy="216.0" r="4.5" fill="#05fd00" fill-opacity="0.42"/><circle cx="312.4" cy="213.9" r="4.5" fill="#00f207" fill-opacity="0.42"/><circle cx="315.1" cy="210.1" r="4.5" fill="#00f306" fill-opacity="0.42"/><circle cx="313.8" cy="213.9" r="4.5" fill="#00f903" fill-opacity="0.42"/><circle cx="314.6" cy="214.4" r="4.5" fill="#05fd00" fill-opacity="0.42"/><circle cx="312.6" cy="219.0" r="4.5" fill="#05fd00" fill-opacity="0.42"/><circle cx="313.3" cy="219.4" r="4.5" fill="#00f107" fill-opacity="0.42"/><circle cx="316.9" cy="214.2" r="4.5" fill="#00f406" fill-opacity="0.42"/><circle cx="316.4" cy="216.6" r="4.5" fill="#00f306" fill-opacity="0.42"/><circle cx="317.3" cy="216.2" r="4.5" fill="#00dd11" fill-opacity="0.42"/><circle cx="319.8" cy="212.4" r="4.5" fill="#00f505" fill-opacity="0.42"/><circle cx="316.8" cy="219.4" r="4.5" fill="#00ec0a" fill-opacity="0.42"/><circle cx="319.8" cy="216.2" r="4.5" fill="#00f207" fill-opacity="0.42"/><circle cx="322.0" cy="213.4" r="4.5" fill="#00d018" fill-opacity="0.42"/><circle cx="321.4" cy="216.1" r="4.5" fill="#00f008" fill-opacity="0.42"/><circle cx="319.5" cy="220.9" r="4.5" fill="#00e010" fill-opacity="0.42"/><circle cx="319.8" cy="220.7" r="4.5" fill="#00fc02" fill-opacity="0.42"/><circle cx="321.9" cy="219.2" r="4.5" fill="#00d117" fill-opacity="0.42"/><circle cx="325.3" cy="214.3" r="4.5" fill="#00d018" fill-opacity="0.42"/><circle cx="322.9" cy="220.2" r="4.5" fill="#00fc01" fill-opacity="0.42"/><circle cx="324.4" cy="218.9" r="4.5" fill="#00dc12" fill-opacity="0.42"/><circle cx="322.4" cy="224.3" r="4.5" fill="#00f804" fill-opacity="0.42"/><circle cx="325.5" cy="219.7" r="4.5" fill="#00d714" fill-opacity="0.42"/><circle cx="325.8" cy="220.0" r="4.5" fill="#00e60d" fill-opacity="0.42"/><circle cx="327.0" cy="218.9" r="4.5" fill="#00d714" fill-opacity="0.42"/><circle cx="328.7" cy="217.2" r="4.5" fill="#00d217" fill-opacity="0.42"/><circle cx="327.2" cy="222.1" r="4.5" fill="#00f406" fill-opacity="0.42"/><circle cx="328.8" cy="219.8" r="4.5" fill="#00cc1a" fill-opacity="0.42"/><circle cx="326.2" cy="226.6" r="4.5" fill="#00ee08" fill-opacity="0.42"/><circle cx="328.9" cy="222.9" r="4.5" fill="#00d018" fill-opacity="0.42"/><circle cx="327.3" cy="226.6" r="4.5" fill="#00e10f" fill-opacity="0.42"/><circle cx="330.4" cy="222.3" r="4.5" fill="#00e50d" fill-opacity="0.42"/><circle cx="328.4" cy="228.0" r="4.5" fill="#00de11" fill-opacity="0.42"/><circle cx="332.2" cy="222.7" r="4.5" fill="#00d018" fill-opacity="0.42"/><circle cx="330.3" cy="226.6" r="4.5" fill="#00ec09" fill-opacity="0.42"/><circle cx="334.4" cy="221.3" r="4.5" fill="#00e20e" fill-opacity="0.42"/><circle cx="333.9" cy="223.1" r="4.5" fill="#00d615" fill-opacity="0.42"/><circle cx="334.4" cy="223.9" r="4.5" fill="#00d615" fill-opacity="0.42"/><circle cx="335.4" cy="224.0" r="4.5" fill="#00d416" fill-opacity="0.42"/><circle cx="332.0" cy="230.9" r="4.5" fill="#00e010" fill-opacity="0.42"/><circle cx="337.2" cy="223.3" r="4.5" fill="#00e20f" fill-opacity="0.42"/><circle cx="335.7" cy="227.3" r="4.5" fill="#00e10f" fill-opacity="0.42"/><circle cx="334.4" cy="230.1" r="4.5" fill="#00db12" fill-opacity="0.42"/><circle cx="337.8" cy="226.4" r="4.5" fill="#00ce19" fill-opacity="0.42"/><circle cx="334.9" cy="232.6" r="4.5" fill="#00bf20" fill-opacity="0.42"/><circle cx="338.4" cy="227.6" r="4.5" fill="#00df10" fill-opacity="0.42"/><circle cx="341.6" cy="223.8" r="4.5" fill="#00da13" fill-opacity="0.42"/><circle cx="342.6" cy="223.4" r="4.5" fill="#00c71d" fill-opacity="0.42"/><circle cx="339.8" cy="229.3" r="4.5" fill="#00d714" fill-opacity="0.42"/><circle cx="337.6" cy="233.9" r="4.5" fill="#00c21f" fill-opacity="0.42"/><circle cx="344.0" cy="225.0" r="4.5" fill="#00c020" fill-opacity="0.42"/><circle cx="343.6" cy="226.3" r="4.5" fill="#00cb1a" fill-opacity="0.42"/><circle cx="344.9" cy="225.8" r="4.5" fill="#00bf20" fill-opacity="0.42"/><circle cx="340.5" cy="234.9" r="4.5" fill="#00b725" fill-opacity="0.42"/><circle cx="344.5" cy="229.2" r="4.5" fill="#00b426" fill-opacity="0.42"/><circle cx="345.6" cy="228.7" r="4.5" fill="#00b824" fill-opacity="0.42"/><circle cx="346.3" cy="228.8" r="4.5" fill="#00d416" fill-opacity="0.42"/><circle cx="344.8" cy="231.9" r="4.5" fill="#00d316" fill-opacity="0.42"/><circle cx="347.3" cy="229.1" r="4.5" fill="#00d814" fill-opacity="0.42"/><circle cx="347.9" cy="229.7" r="4.5" fill="#00d018" fill-opacity="0.42"/><circle cx="346.8" cy="232.7" r="4.5" fill="#00b326" fill-opacity="0.42"/><circle cx="345.1" cy="237.0" r="4.5" fill="#00b326" fill-opacity="0.42"/><circle cx="348.0" cy="233.8" r="4.5" fill="#00b724" fill-opacity="0.42"/><circle cx="347.7" cy="235.5" r="4.5" fill="#00ae29" fill-opacity="0.42"/><circle cx="351.1" cy="231.3" r="4.5" fill="#00d615" fill-opacity="0.42"/><circle cx="351.1" cy="232.8" r="4.5" fill="#00b227" fill-opacity="0.42"/><circle cx="350.6" cy="234.0" r="4.5" fill="#00c51d" fill-opacity="0.42"/><circle cx="348.3" cy="240.2" r="4.5" fill="#00be21" fill-opacity="0.42"/><circle cx="352.7" cy="233.5" r="4.5" fill="#00ca1b" fill-opacity="0.42"/><circle cx="355.1" cy="231.2" r="4.5" fill="#00a72d" fill-opacity="0.42"/><circle cx="355.7" cy="230.9" r="4.5" fill="#00a82c" fill-opacity="0.42"/><circle cx="352.7" cy="236.9" r="4.5" fill="#00cd19" fill-opacity="0.42"/><circle cx="355.5" cy="234.5" r="4.5" fill="#00a72c" fill-opacity="0.42"/><circle cx="353.1" cy="238.7" r="4.5" fill="#00cd19" fill-opacity="0.42"/><circle cx="354.3" cy="237.9" r="4.5" fill="#00a12f" fill-opacity="0.42"/><circle cx="353.4" cy="241.8" r="4.5" fill="#00a92b" fill-opacity="0.42"/><circle cx="359.1" cy="232.8" r="4.5" fill="#00b426" fill-opacity="0.42"/><circle cx="356.5" cy="238.4" r="4.5" fill="#00bc22" fill-opacity="0.42"/><circle cx="359.5" cy="234.9" r="4.5" fill="#00aa2b" fill-opacity="0.42"/><circle cx="358.0" cy="238.7" r="4.5" fill="#00c71c" fill-opacity="0.42"/><circle cx="358.2" cy="239.9" r="4.5" fill="#009d33" fill-opacity="0.42"/><circle cx="361.7" cy="235.1" r="4.5" fill="#00bb23" fill-opacity="0.42"/><circle cx="358.2" cy="242.2" r="4.5" fill="#009d34" fill-opacity="0.42"/><circle cx="358.3" cy="246.1" r="4.5" fill="#009d34" fill-opacity="0.42"/><circle cx="358.9" cy="246.1" r="4.5" fill="#00c51e" fill-opacity="0.42"/><circle cx="361.1" cy="241.8" r="4.5" fill="#00a42e" fill-opacity="0.42"/><circle cx="361.6" cy="242.3" r="4.5" fill="#009a37" fill-opacity="0.42"/><circle cx="362.4" cy="241.2" r="4.5" fill="#009939" fill-opacity="0.42"/><circle cx="365.1" cy="236.3" r="4.5" fill="#009b36" fill-opacity="0.42"/><circle cx="366.7" cy="235.7" r="4.5" fill="#00be21" fill-opacity="0.42"/><circle cx="363.9" cy="244.3" r="4.5" fill="#00a62d" fill-opacity="0.42"/><circle cx="364.0" cy="245.3" r="4.5" fill="#009b37" fill-opacity="0.42"/><circle cx="367.7" cy="236.8" r="4.5" fill="#009b37" fill-opacity="0.42"/><circle cx="365.1" cy="246.8" r="4.5" fill="#00a82c" fill-opacity="0.42"/><circle cx="367.7" cy="240.9" r="4.5" fill="#00ba23" fill-opacity="0.42"/><circle cx="369.0" cy="240.2" r="4.5" fill="#009e32" fill-opacity="0.42"/><circle cx="369.1" cy="241.3" r="4.5" fill="#009b36" fill-opacity="0.42"/><circle cx="370.2" cy="240.3" r="4.5" fill="#00943f" fill-opacity="0.42"/><circle cx="371.0" cy="239.5" r="4.5" fill="#00ab2b" fill-opacity="0.42"/><circle cx="368.8" cy="247.4" r="4.5" fill="#00a52d" fill-opacity="0.42"/><circle cx="369.9" cy="246.1" r="4.5" fill="#00a82c" fill-opacity="0.42"/><circle cx="372.5" cy="241.7" r="4.5" fill="#009242" fill-opacity="0.42"/><circle cx="373.0" cy="241.6" r="4.5" fill="#00a42e" fill-opacity="0.42"/><circle cx="371.4" cy="247.6" r="4.5" fill="#00973c" fill-opacity="0.42"/><circle cx="373.2" cy="245.8" r="4.5" fill="#00ac2a" fill-opacity="0.42"/><circle cx="375.2" cy="242.6" r="4.5" fill="#00a42e" fill-opacity="0.42"/><circle cx="372.1" cy="251.4" r="4.5" fill="#009d33" fill-opacity="0.42"/><circle cx="373.1" cy="250.7" r="4.5" fill="#008a4c" fill-opacity="0.42"/><circle cx="377.2" cy="242.1" r="4.5" fill="#008f45" fill-opacity="0.42"/><circle cx="377.2" cy="244.8" r="4.5" fill="#008e46" fill-opacity="0.42"/><circle cx="377.8" cy="244.3" r="4.5" fill="#00943f" fill-opacity="0.42"/><circle cx="377.8" cy="246.8" r="4.5" fill="#008c49" fill-opacity="0.42"/><circle cx="377.8" cy="247.1" r="4.5" fill="#009939" fill-opacity="0.42"/><circle cx="376.6" cy="252.0" r="4.5" fill="#00a031" fill-opacity="0.42"/><circle cx="377.5" cy="251.8" r="4.5" fill="#008651" fill-opacity="0.42"/><circle cx="380.9" cy="246.4" r="4.5" fill="#008651" fill-opacity="0.42"/><circle cx="379.4" cy="250.5" r="4.5" fill="#008552" fill-opacity="0.42"/><circle cx="382.6" cy="244.5" r="4.5" fill="#008d49" fill-opacity="0.42"/><circle cx="381.1" cy="251.2" r="4.5" fill="#008355" fill-opacity="0.42"/><circle cx="382.9" cy="247.6" r="4.5" fill="#009c35" fill-opacity="0.42"/><circle cx="381.0" cy="253.8" r="4.5" fill="#009d34" fill-opacity="0.42"/><circle cx="384.1" cy="247.8" r="4.5" fill="#009d34" fill-opacity="0.42"/><circle cx="385.5" cy="246.3" r="4.5" fill="#009a38" fill-opacity="0.42"/><circle cx="384.7" cy="250.4" r="4.5" fill="#008c4a" fill-opacity="0.42"/><circle cx="385.5" cy="250.5" r="4.5" fill="#007f5a" fill-opacity="0.42"/><circle cx="387.0" cy="247.5" r="4.5" fill="#009939" fill-opacity="0.42"/><circle cx="385.5" cy="253.3" r="4.5" fill="#007f5a" fill-opacity="0.42"/><circle cx="388.7" cy="247.5" r="4.5" fill="#009045" fill-opacity="0.42"/><circle cx="388.8" cy="249.1" r="4.5" fill="#008157" fill-opacity="0.42"/><circle cx="389.0" cy="251.1" r="4.5" fill="#008651" fill-opacity="0.42"/><circle cx="389.5" cy="251.4" r="4.5" fill="#009242" fill-opacity="0.42"/><circle cx="388.2" cy="256.7" r="4.5" fill="#00963d" fill-opacity="0.42"/><circle cx="390.9" cy="251.3" r="4.5" fill="#00953f" fill-opacity="0.42"/><circle cx="392.1" cy="249.1" r="4.5" fill="#008059" fill-opacity="0.42"/><circle cx="393.3" cy="247.9" r="4.5" fill="#008e46" fill-opacity="0.42"/><circle cx="392.4" cy="253.0" r="4.5" fill="#008058" fill-opacity="0.42"/><circle cx="394.0" cy="250.1" r="4.5" fill="#009341" fill-opacity="0.42"/><circle cx="395.1" cy="249.0" r="4.5" fill="#008b4b" fill-opacity="0.42"/><circle cx="394.6" cy="252.4" r="4.5" fill="#008454" fill-opacity="0.42"/><circle cx="395.5" cy="252.2" r="4.5" fill="#008751" fill-opacity="0.42"/><circle cx="395.3" cy="254.9" r="4.5" fill="#008355" fill-opacity="0.42"/><circle cx="396.1" cy="253.9" r="4.5" fill="#008552" fill-opacity="0.42"/><circle cx="397.6" cy="252.1" r="4.5" fill="#00716c" fill-opacity="0.42"/><circle cx="396.4" cy="258.2" r="4.5" fill="#008750" fill-opacity="0.42"/><circle cx="396.5" cy="259.2" r="4.5" fill="#008355" fill-opacity="0.42"/><circle cx="397.6" cy="257.0" r="4.5" fill="#008355" fill-opacity="0.42"/><circle cx="400.0" cy="252.2" r="4.5" fill="#006a75" fill-opacity="0.42"/><circle cx="400.6" cy="251.9" r="4.5" fill="#007369" fill-opacity="0.42"/><circle cx="400.1" cy="256.1" r="4.5" fill="#007864" fill-opacity="0.42"/><circle cx="401.2" cy="256.0" r="4.5" fill="#007962" fill-opacity="0.42"/><circle cx="401.3" cy="255.8" r="4.5" fill="#007c5e" fill-opacity="0.42"/><circle cx="401.9" cy="257.3" r="4.5" fill="#007567" fill-opacity="0.42"/><circle cx="402.6" cy="256.2" r="4.5" fill="#007369" fill-opacity="0.42"/><circle cx="402.4" cy="260.3" r="4.5" fill="#007864" fill-opacity="0.42"/><circle cx="405.0" cy="253.4" r="4.5" fill="#005e84" fill-opacity="0.42"/><circle cx="403.8" cy="259.4" r="4.5" fill="#005c87" fill-opacity="0.42"/><circle cx="405.0" cy="257.0" r="4.5" fill="#006e70" fill-opacity="0.42"/><circle cx="405.1" cy="260.2" r="4.5" fill="#006c72" fill-opacity="0.45"/><circle cx="407.6" cy="257.8" r="4.5" fill="#0049a0" fill-opacity="0.45"/><circle cx="409.7" cy="257.5" r="4.5" fill="#006e70" fill-opacity="0.45"/><circle cx="412.2" cy="258.0" r="4.5" fill="#00637e" fill-opacity="0.45"/><circle cx="413.1" cy="256.1" r="4.5" fill="#0041ab" fill-opacity="0.45"/><circle cx="415.5" cy="261.6" r="4.5" fill="#0033bd" fill-opacity="0.45"/><circle cx="417.3" cy="260.5" r="4.5" fill="#003bb2" fill-opacity="0.45"/><circle cx="419.4" cy="260.8" r="4.5" fill="#00588c" fill-opacity="0.45"/><circle cx="421.7" cy="258.2" r="4.5" fill="#005097" fill-opacity="0.45"/><circle cx="424.0" cy="257.0" r="4.5" fill="#003ab4" fill-opacity="0.45"/><circle cx="423.9" cy="261.5" r="4.5" fill="#0031bf" fill-opacity="0.45"/><circle cx="426.6" cy="262.8" r="4.5" fill="#0029ca" fill-opacity="0.45"/><circle cx="427.2" cy="261.4" r="4.5" fill="#004c9d" fill-opacity="0.45"/><circle cx="430.5" cy="263.2" r="4.5" fill="#0037b8" fill-opacity="0.45"/><circle cx="431.0" cy="262.3" r="4.5" fill="#0018e0" fill-opacity="0.45"/><circle cx="434.4" cy="262.5" r="4.5" fill="#003bb3" fill-opacity="0.45"/><circle cx="436.3" cy="259.9" r="4.5" fill="#0007f6" fill-opacity="0.45"/><circle cx="437.5" cy="264.0" r="4.5" fill="#0002fc" fill-opacity="0.45"/><circle cx="438.8" cy="265.0" r="4.5" fill="#000fec" fill-opacity="0.45"/><circle cx="441.0" cy="262.7" r="4.5" fill="#001dd9" fill-opacity="0.45"/><circle cx="442.1" cy="261.9" r="4.5" fill="#0400fc" fill-opacity="0.45"/><circle cx="443.5" cy="264.7" r="4.5" fill="#0a00f6" fill-opacity="0.45"/><circle cx="446.1" cy="264.7" r="4.5" fill="#0010ea" fill-opacity="0.45"/><circle cx="447.5" cy="263.5" r="4.5" fill="#0c00f4" fill-opacity="0.45"/><circle cx="449.0" cy="267.4" r="4.5" fill="#0005f8" fill-opacity="0.45"/><circle cx="451.1" cy="267.8" r="4.5" fill="#0002fc" fill-opacity="0.45"/><circle cx="453.1" cy="267.0" r="4.5" fill="#4300c3" fill-opacity="0.45"/><circle cx="454.8" cy="266.3" r="4.5" fill="#0900f7" fill-opacity="0.45"/><circle cx="455.9" cy="267.2" r="4.5" fill="#0005f9" fill-opacity="0.45"/><circle cx="458.1" cy="268.0" r="4.5" fill="#3000d4" fill-opacity="0.45"/><circle cx="459.8" cy="267.4" r="4.5" fill="#1f00e3" fill-opacity="0.45"/><circle cx="461.2" cy="267.8" r="4.5" fill="#3400d0" fill-opacity="0.45"/><circle cx="462.1" cy="267.5" r="4.5" fill="#3c00ca" fill-opacity="0.45"/><circle cx="463.9" cy="270.7" r="4.5" fill="#6500a5" fill-opacity="0.45"/><circle cx="465.8" cy="269.6" r="4.5" fill="#4900be" fill-opacity="0.45"/><circle cx="467.2" cy="271.4" r="4.5" fill="#4900be" fill-opacity="0.45"/><circle cx="469.0" cy="271.1" r="4.5" fill="#6f0085" fill-opacity="0.45"/><circle cx="470.9" cy="271.4" r="4.5" fill="#52006a" fill-opacity="0.45"/><circle cx="473.2" cy="271.3" r="4.5" fill="#490063" fill-opacity="0.45"/><circle cx="475.0" cy="272.0" r="4.5" fill="#45005f" fill-opacity="0.45"/><circle cx="475.0" cy="272.0" r="4.5" fill="#30004d" fill-opacity="0.45"/><circle cx="318.0" cy="209.0" r="4.5" fill="#00ef08" fill-opacity="0.33"/><circle cx="327.0" cy="212.0" r="4.5" fill="#00ef08" fill-opacity="0.33"/><circle cx="333.0" cy="213.0" r="4.5" fill="#00df10" fill-opacity="0.33"/><circle cx="340.0" cy="215.0" r="4.5" fill="#00d714" fill-opacity="0.33"/><circle cx="348.0" cy="220.0" r="4.5" fill="#00cf18" fill-opacity="0.33"/><circle cx="355.0" cy="225.0" r="4.5" fill="#00c020" fill-opacity="0.33"/><circle cx="360.0" cy="232.0" r="4.5" fill="#00b028" fill-opacity="0.33"/><circle cx="373.0" cy="240.0" r="4.5" fill="#00a030" fill-opacity="0.33"/><circle cx="385.0" cy="243.0" r="4.5" fill="#00a030" fill-opacity="0.33"/><circle cx="395.0" cy="247.0" r="4.5" fill="#00a030" fill-opacity="0.33"/><circle cx="395.0" cy="243.0" r="4.5" fill="#007863" fill-opacity="0.33"/><circle cx="418.0" cy="248.0" r="4.5" fill="#006e70" fill-opacity="0.33"/><circle cx="437.0" cy="253.0" r="4.5" fill="#004d9b" fill-opacity="0.33"/><circle cx="353.3" cy="252.1" r="4.5" fill="#002cc5" fill-opacity="0.42"/><circle cx="353.7" cy="253.1" r="4.5" fill="#0006f7" fill-opacity="0.42"/><circle cx="354.7" cy="253.7" r="4.5" fill="#0002fc" fill-opacity="0.42"/><circle cx="354.9" cy="255.4" r="4.5" fill="#0016e3" fill-opacity="0.42"/><circle cx="356.6" cy="253.7" r="4.5" fill="#0014e5" fill-opacity="0.42"/><circle cx="356.5" cy="257.2" r="4.5" fill="#002ec3" fill-opacity="0.42"/><circle cx="357.8" cy="255.0" r="4.5" fill="#0004fa" fill-opacity="0.42"/><circle cx="359.3" cy="255.0" r="4.5" fill="#0015e4" fill-opacity="0.42"/><circle cx="359.1" cy="258.0" r="4.5" fill="#0015e4" fill-opacity="0.42"/><circle cx="360.1" cy="258.2" r="4.5" fill="#0006f7" fill-opacity="0.42"/><circle cx="360.4" cy="258.6" r="4.5" fill="#0026ce" fill-opacity="0.42"/><circle cx="361.8" cy="258.0" r="4.5" fill="#002dc5" fill-opacity="0.42"/><circle cx="362.9" cy="258.1" r="4.5" fill="#000eed" fill-opacity="0.42"/><circle cx="362.4" cy="261.3" r="4.5" fill="#1100ef" fill-opacity="0.42"/><circle cx="364.6" cy="260.1" r="4.5" fill="#0016e3" fill-opacity="0.42"/><circle cx="367.2" cy="258.3" r="4.5" fill="#0015e3" fill-opacity="0.42"/><circle cx="365.3" cy="262.5" r="4.5" fill="#0008f5" fill-opacity="0.42"/><circle cx="367.7" cy="260.5" r="4.5" fill="#1a00e8" fill-opacity="0.42"/><circle cx="367.3" cy="263.1" r="4.5" fill="#0a00f6" fill-opacity="0.42"/><circle cx="369.6" cy="261.2" r="4.5" fill="#000af2" fill-opacity="0.42"/><circle cx="370.7" cy="261.3" r="4.5" fill="#0500fb" fill-opacity="0.42"/><circle cx="371.6" cy="261.6" r="4.5" fill="#1400ed" fill-opacity="0.42"/><circle cx="372.0" cy="263.2" r="4.5" fill="#1f00e3" fill-opacity="0.42"/><circle cx="373.2" cy="263.0" r="4.5" fill="#2200e1" fill-opacity="0.42"/><circle cx="373.1" cy="266.5" r="4.5" fill="#0007f5" fill-opacity="0.42"/><circle cx="373.8" cy="266.5" r="4.5" fill="#000eed" fill-opacity="0.42"/><circle cx="375.3" cy="268.7" r="4.5" fill="#0f00f2" fill-opacity="0.42"/><circle cx="376.7" cy="264.7" r="4.5" fill="#0f00f1" fill-opacity="0.42"/><circle cx="377.0" cy="267.4" r="4.5" fill="#0500fb" fill-opacity="0.42"/><circle cx="379.1" cy="264.2" r="4.5" fill="#1600eb" fill-opacity="0.42"/><circle cx="379.1" cy="264.8" r="4.5" fill="#1b00e7" fill-opacity="0.42"/><circle cx="380.2" cy="266.5" r="4.5" fill="#0010ea" fill-opacity="0.42"/><circle cx="380.9" cy="269.7" r="4.5" fill="#0011e9" fill-opacity="0.42"/><circle cx="383.3" cy="262.5" r="4.5" fill="#0d00f4" fill-opacity="0.42"/><circle cx="383.5" cy="268.7" r="4.5" fill="#0003fb" fill-opacity="0.42"/><circle cx="384.4" cy="267.8" r="4.5" fill="#1e00e4" fill-opacity="0.42"/><circle cx="385.7" cy="266.9" r="4.5" fill="#000cf0" fill-opacity="0.42"/><circle cx="386.6" cy="266.9" r="4.5" fill="#0b00f5" fill-opacity="0.42"/><circle cx="388.3" cy="263.7" r="4.5" fill="#2200e0" fill-opacity="0.42"/><circle cx="388.1" cy="268.4" r="4.5" fill="#3200d2" fill-opacity="0.42"/><circle cx="389.2" cy="267.2" r="4.5" fill="#0b00f5" fill-opacity="0.42"/><circle cx="390.8" cy="264.2" r="4.5" fill="#1500ec" fill-opacity="0.42"/><circle cx="391.7" cy="268.3" r="4.5" fill="#0006f7" fill-opacity="0.42"/><circle cx="392.9" cy="266.5" r="4.5" fill="#0010eb" fill-opacity="0.42"/><circle cx="393.6" cy="266.9" r="4.5" fill="#0e00f2" fill-opacity="0.42"/><circle cx="394.9" cy="268.0" r="4.5" fill="#3700ce" fill-opacity="0.42"/><circle cx="395.1" cy="269.5" r="4.5" fill="#0013e6" fill-opacity="0.42"/><circle cx="396.1" cy="269.1" r="4.5" fill="#1f00e3" fill-opacity="0.42"/><circle cx="397.9" cy="266.8" r="4.5" fill="#0005f9" fill-opacity="0.42"/><circle cx="398.3" cy="268.1" r="4.5" fill="#0015e4" fill-opacity="0.42"/><circle cx="399.2" cy="269.2" r="4.5" fill="#000cef" fill-opacity="0.42"/><circle cx="399.9" cy="271.0" r="4.5" fill="#3800cc" fill-opacity="0.42"/><circle cx="401.6" cy="265.7" r="4.5" fill="#000cef" fill-opacity="0.42"/><circle cx="401.8" cy="270.5" r="4.5" fill="#2a00d9" fill-opacity="0.42"/><circle cx="403.3" cy="268.4" r="4.5" fill="#2800db" fill-opacity="0.42"/><circle cx="403.7" cy="270.9" r="4.5" fill="#3900cc" fill-opacity="0.42"/><circle cx="405.0" cy="270.2" r="4.5" fill="#2d00d7" fill-opacity="0.42"/><circle cx="406.0" cy="271.5" r="4.5" fill="#0200fd" fill-opacity="0.42"/><circle cx="407.6" cy="267.7" r="4.5" fill="#1a00e8" fill-opacity="0.42"/><circle cx="408.7" cy="269.6" r="4.5" fill="#2c00d8" fill-opacity="0.42"/><circle cx="410.2" cy="267.5" r="4.5" fill="#0a00f6" fill-opacity="0.42"/><circle cx="410.9" cy="267.1" r="4.5" fill="#5100b7" fill-opacity="0.42"/><circle cx="411.4" cy="269.1" r="4.5" fill="#2100e2" fill-opacity="0.42"/><circle cx="412.5" cy="272.3" r="4.5" fill="#3a00cb" fill-opacity="0.42"/><circle cx="413.3" cy="268.9" r="4.5" fill="#3e00c8" fill-opacity="0.42"/><circle cx="413.9" cy="272.2" r="4.5" fill="#5000b8" fill-opacity="0.42"/><circle cx="415.0" cy="270.0" r="4.5" fill="#2e00d5" fill-opacity="0.42"/><circle cx="415.7" cy="269.3" r="4.5" fill="#1700eb" fill-opacity="0.45"/><circle cx="419.2" cy="268.4" r="4.5" fill="#4b00bc" fill-opacity="0.45"/><circle cx="419.0" cy="272.9" r="4.5" fill="#3f00c7" fill-opacity="0.45"/><circle cx="423.1" cy="269.8" r="4.5" fill="#1900e9" fill-opacity="0.45"/><circle cx="423.7" cy="274.5" r="4.5" fill="#5100b6" fill-opacity="0.45"/><circle cx="427.9" cy="271.0" r="4.5" fill="#2c00d8" fill-opacity="0.45"/><circle cx="427.6" cy="273.9" r="4.5" fill="#3300d1" fill-opacity="0.45"/><circle cx="430.3" cy="274.3" r="4.5" fill="#6b009f" fill-opacity="0.45"/><circle cx="432.7" cy="274.1" r="4.5" fill="#4b00bc" fill-opacity="0.45"/><circle cx="435.5" cy="274.6" r="4.5" fill="#5800b0" fill-opacity="0.45"/><circle cx="437.1" cy="274.9" r="4.5" fill="#5200b5" fill-opacity="0.45"/><circle cx="438.7" cy="275.5" r="4.5" fill="#750096" fill-opacity="0.45"/><circle cx="441.5" cy="275.9" r="4.5" fill="#6c0082" fill-opacity="0.45"/><circle cx="443.8" cy="277.7" r="4.5" fill="#6800a2" fill-opacity="0.45"/><circle cx="446.6" cy="279.0" r="4.5" fill="#6e0083" fill-opacity="0.45"/><circle cx="448.2" cy="279.4" r="4.5" fill="#700085" fill-opacity="0.45"/><circle cx="449.9" cy="279.5" r="4.5" fill="#6a0080" fill-opacity="0.45"/><circle cx="451.0" cy="280.0" r="4.5" fill="#66007d" fill-opacity="0.45"/><circle cx="353.0" cy="253.0" r="4.5" fill="#0000ff" fill-opacity="0.4"/><circle cx="357.0" cy="263.0" r="4.5" fill="#7c0090" fill-opacity="0.4"/><circle cx="378.0" cy="270.0" r="4.5" fill="#1f00e3" fill-opacity="0.4"/><circle cx="378.0" cy="277.0" r="4.5" fill="#7c0090" fill-opacity="0.4"/><circle cx="410.0" cy="280.0" r="4.5" fill="#0000ff" fill-opacity="0.4"/><circle cx="420.0" cy="283.0" r="4.5" fill="#0000ff" fill-opacity="0.4"/><circle cx="428.0" cy="287.0" r="4.5" fill="#0016e2" fill-opacity="0.4"/><circle cx="416.7" cy="276.7" r="4.5" fill="#0500fa" fill-opacity="0.4"/><circle cx="421.6" cy="279.0" r="4.5" fill="#1500ec" fill-opacity="0.4"/><circle cx="422.7" cy="278.8" r="4.5" fill="#1800ea" fill-opacity="0.4"/><circle cx="429.2" cy="281.8" r="4.5" fill="#2c00d7" fill-opacity="0.4"/><circle cx="430.5" cy="282.7" r="4.5" fill="#3200d2" fill-opacity="0.4"/><circle cx="436.2" cy="285.5" r="4.5" fill="#4f00b8" fill-opacity="0.4"/><circle cx="439.3" cy="286.8" r="4.5" fill="#5e00ab" fill-opacity="0.4"/><circle cx="444.3" cy="290.2" r="4.5" fill="#7a0092" fill-opacity="0.4"/><circle cx="448.0" cy="291.6" r="4.5" fill="#7c0090" fill-opacity="0.4"/><circle cx="451.5" cy="294.6" r="4.5" fill="#7c0090" fill-opacity="0.4"/><circle cx="452.5" cy="295.7" r="4.5" fill="#7c0090" fill-opacity="0.4"/><circle cx="459.3" cy="300.7" r="4.5" fill="#610078" fill-opacity="0.4"/><circle cx="459.3" cy="300.8" r="4.5" fill="#610078" fill-opacity="0.4"/><circle cx="463.0" cy="305.0" r="4.5" fill="#460060" fill-opacity="0.4"/><circle cx="228.5" cy="209.7" r="4.5" fill="#ff6100" fill-opacity="0.38"/><circle cx="231.8" cy="210.1" r="4.5" fill="#ff5600" fill-opacity="0.38"/><circle cx="233.3" cy="210.2" r="4.5" fill="#ff5000" fill-opacity="0.38"/><circle cx="235.7" cy="211.0" r="4.5" fill="#ff4900" fill-opacity="0.38"/><circle cx="236.3" cy="208.2" r="4.5" fill="#ff4200" fill-opacity="0.38"/><circle cx="238.8" cy="207.9" r="4.5" fill="#ff3900" fill-opacity="0.38"/><circle cx="239.7" cy="205.6" r="4.5" fill="#ff3300" fill-opacity="0.38"/><circle cx="241.7" cy="204.3" r="4.5" fill="#ff2f00" fill-opacity="0.38"/><circle cx="245.0" cy="208.0" r="4.5" fill="#ff2c00" fill-opacity="0.38"/><circle cx="246.0" cy="206.1" r="4.5" fill="#ff2900" fill-opacity="0.38"/><circle cx="249.3" cy="205.7" r="4.5" fill="#ff2400" fill-opacity="0.38"/><circle cx="248.9" cy="202.2" r="4.5" fill="#ff2300" fill-opacity="0.38"/><circle cx="251.1" cy="202.5" r="4.5" fill="#ff2000" fill-opacity="0.38"/><circle cx="253.4" cy="203.3" r="4.5" fill="#ff1c00" fill-opacity="0.38"/><circle cx="255.4" cy="201.7" r="4.5" fill="#ff1d00" fill-opacity="0.38"/><circle cx="257.4" cy="203.2" r="4.5" fill="#ff2500" fill-opacity="0.38"/><circle cx="260.1" cy="199.7" r="4.5" fill="#ff3600" fill-opacity="0.38"/><circle cx="261.7" cy="203.3" r="4.5" fill="#ff3a00" fill-opacity="0.38"/><circle cx="263.5" cy="199.7" r="4.5" fill="#ff4700" fill-opacity="0.38"/><circle cx="265.9" cy="199.5" r="4.5" fill="#ff5300" fill-opacity="0.38"/><circle cx="268.1" cy="201.3" r="4.5" fill="#ff5c00" fill-opacity="0.38"/><circle cx="268.2" cy="199.0" r="4.5" fill="#ff5f00" fill-opacity="0.38"/><circle cx="270.0" cy="200.0" r="4.5" fill="#ff6600" fill-opacity="0.38"/><circle cx="249.6" cy="198.8" r="4.5" fill="#eb0000" fill-opacity="0.4"/><circle cx="251.0" cy="198.2" r="4.5" fill="#eb0000" fill-opacity="0.4"/><circle cx="252.8" cy="197.3" r="4.5" fill="#eb0000" fill-opacity="0.4"/><circle cx="254.0" cy="196.6" r="4.5" fill="#eb0000" fill-opacity="0.4"/><circle cx="254.8" cy="194.7" r="4.5" fill="#eb0000" fill-opacity="0.4"/><circle cx="257.3" cy="195.8" r="4.5" fill="#eb0000" fill-opacity="0.4"/><circle cx="259.8" cy="198.4" r="4.5" fill="#eb0000" fill-opacity="0.4"/><circle cx="261.1" cy="196.1" r="4.5" fill="#eb0000" fill-opacity="0.4"/><circle cx="262.9" cy="194.7" r="4.5" fill="#f10000" fill-opacity="0.4"/><circle cx="264.8" cy="193.9" r="4.5" fill="#fe0000" fill-opacity="0.4"/><circle cx="265.3" cy="194.4" r="4.5" fill="#ff0300" fill-opacity="0.4"/><circle cx="268.3" cy="196.6" r="4.5" fill="#ff1c00" fill-opacity="0.4"/><circle cx="269.8" cy="197.1" r="4.5" fill="#ff2900" fill-opacity="0.4"/><circle cx="271.5" cy="194.2" r="4.5" fill="#ff3800" fill-opacity="0.4"/><circle cx="271.9" cy="193.6" r="4.5" fill="#ff3b00" fill-opacity="0.4"/><circle cx="274.1" cy="193.9" r="4.5" fill="#ff4d00" fill-opacity="0.4"/><circle cx="276.5" cy="196.5" r="4.5" fill="#ff6200" fill-opacity="0.4"/><circle cx="276.8" cy="194.1" r="4.5" fill="#ff6500" fill-opacity="0.4"/><circle cx="278.7" cy="194.1" r="4.5" fill="#ff7500" fill-opacity="0.4"/><circle cx="280.0" cy="196.0" r="4.5" fill="#ff8000" fill-opacity="0.4"/><circle cx="250.0" cy="186.0" r="4.5" fill="#803c00" fill-opacity="0.85"/><circle cx="255.0" cy="188.0" r="4.5" fill="#803c00" fill-opacity="0.8"/><circle cx="262.0" cy="191.0" r="4.5" fill="#803c00" fill-opacity="0.7"/><circle cx="268.0" cy="193.0" r="4.5" fill="#803c00" fill-opacity="0.6"/><circle cx="275.0" cy="195.0" r="4.5" fill="#803c00" fill-opacity="0.55"/><circle cx="240.0" cy="196.0" r="4.5" fill="#ff0000" fill-opacity="0.3"/><circle cx="232.0" cy="200.0" r="4.5" fill="#ff0000" fill-opacity="0.3"/><circle cx="228.0" cy="205.0" r="4.5" fill="#ff1a00" fill-opacity="0.3"/><circle cx="245.0" cy="190.0" r="4.5" fill="#ff0000" fill-opacity="0.3"/><circle cx="236.0" cy="215.0" r="4.5" fill="#0000ff" fill-opacity="0.45"/><circle cx="246.0" cy="215.0" r="4.5" fill="#0016e2" fill-opacity="0.45"/><circle cx="258.0" cy="210.0" r="4.5" fill="#0016e2" fill-opacity="0.4"/><circle cx="268.0" cy="208.0" r="4.5" fill="#00ff00" fill-opacity="0.4"/><circle cx="282.7" cy="195.7" r="4.5" fill="#ffd500" fill-opacity="0.5"/><circle cx="281.0" cy="196.5" r="4.5" fill="#ffd300" fill-opacity="0.5"/><circle cx="280.8" cy="195.8" r="4.5" fill="#fff100" fill-opacity="0.5"/><circle cx="283.0" cy="197.1" r="4.5" fill="#f9fb00" fill-opacity="0.5"/><circle cx="285.0" cy="199.2" r="4.5" fill="#ffc100" fill-opacity="0.5"/><circle cx="286.9" cy="195.0" r="4.5" fill="#fff100" fill-opacity="0.5"/><circle cx="279.3" cy="196.0" r="4.5" fill="#ffd000" fill-opacity="0.5"/><circle cx="280.9" cy="199.3" r="4.5" fill="#ffef00" fill-opacity="0.5"/><circle cx="282.7" cy="193.3" r="4.5" fill="#ffc500" fill-opacity="0.5"/><circle cx="283.4" cy="199.1" r="4.5" fill="#f2f600" fill-opacity="0.5"/><circle cx="284.9" cy="193.7" r="4.5" fill="#e9f000" fill-opacity="0.5"/><circle cx="285.2" cy="199.3" r="4.5" fill="#edf300" fill-opacity="0.5"/><circle cx="285.2" cy="181.2" r="4.5" fill="#0008f4" fill-opacity="0.45"/><circle cx="284.3" cy="183.0" r="4.5" fill="#0013e6" fill-opacity="0.45"/><circle cx="284.6" cy="184.0" r="4.5" fill="#001dda" fill-opacity="0.45"/><circle cx="285.3" cy="184.8" r="4.5" fill="#0027cc" fill-opacity="0.45"/><circle cx="286.5" cy="185.6" r="4.5" fill="#0035ba" fill-opacity="0.45"/><circle cx="287.3" cy="185.5" r="4.5" fill="#0039b5" fill-opacity="0.45"/><circle cx="286.9" cy="187.0" r="4.5" fill="#0043a7" fill-opacity="0.45"/><circle cx="289.2" cy="187.4" r="4.5" fill="#005492" fill-opacity="0.45"/><circle cx="290.1" cy="188.1" r="4.5" fill="#005f84" fill-opacity="0.45"/><circle cx="288.3" cy="190.9" r="4.5" fill="#006c72" fill-opacity="0.45"/><circle cx="290.7" cy="190.5" r="4.5" fill="#006c72" fill-opacity="0.45"/><circle cx="291.0" cy="188.0" r="4.5" fill="#00647c" fill-opacity="0.45"/><circle cx="291.0" cy="187.1" r="4.5" fill="#006280" fill-opacity="0.45"/><circle cx="292.3" cy="187.8" r="4.5" fill="#005e84" fill-opacity="0.45"/><circle cx="294.7" cy="187.8" r="4.5" fill="#005492" fill-opacity="0.45"/><circle cx="294.5" cy="186.1" r="4.5" fill="#005096" fill-opacity="0.45"/><circle cx="296.7" cy="187.7" r="4.5" fill="#004b9d" fill-opacity="0.45"/><circle cx="296.2" cy="185.4" r="4.5" fill="#0048a2" fill-opacity="0.45"/><circle cx="297.8" cy="186.4" r="4.5" fill="#0043a8" fill-opacity="0.45"/><circle cx="297.8" cy="183.7" r="4.5" fill="#003cb1" fill-opacity="0.45"/><circle cx="299.1" cy="183.2" r="4.5" fill="#0035ba" fill-opacity="0.45"/><circle cx="298.9" cy="182.5" r="4.5" fill="#0034bb" fill-opacity="0.45"/><circle cx="301.2" cy="184.3" r="4.5" fill="#002fc2" fill-opacity="0.45"/><circle cx="303.0" cy="184.4" r="4.5" fill="#0027cc" fill-opacity="0.45"/><circle cx="301.5" cy="180.9" r="4.5" fill="#0025cf" fill-opacity="0.45"/><circle cx="304.3" cy="182.3" r="4.5" fill="#001cda" fill-opacity="0.45"/><circle cx="304.6" cy="180.6" r="4.5" fill="#0017e1" fill-opacity="0.45"/><circle cx="304.7" cy="179.0" r="4.5" fill="#0012e8" fill-opacity="0.45"/><circle cx="305.3" cy="179.3" r="4.5" fill="#000fec" fill-opacity="0.45"/><circle cx="306.7" cy="178.5" r="4.5" fill="#0005f9" fill-opacity="0.45"/><circle cx="308.3" cy="178.6" r="4.5" fill="#0600fa" fill-opacity="0.45"/><circle cx="309.8" cy="179.4" r="4.5" fill="#0e00f2" fill-opacity="0.45"/><circle cx="310.3" cy="178.5" r="4.5" fill="#1700eb" fill-opacity="0.45"/><circle cx="312.1" cy="179.2" r="4.5" fill="#2200e1" fill-opacity="0.45"/><circle cx="312.5" cy="177.5" r="4.5" fill="#2c00d7" fill-opacity="0.45"/><circle cx="312.5" cy="176.9" r="4.5" fill="#2f00d5" fill-opacity="0.45"/><circle cx="314.0" cy="176.2" r="4.5" fill="#3e00c7" fill-opacity="0.45"/><circle cx="313.8" cy="174.9" r="4.5" fill="#4200c4" fill-opacity="0.45"/><circle cx="316.7" cy="176.6" r="4.5" fill="#5200b5" fill-opacity="0.45"/><circle cx="316.5" cy="174.7" r="4.5" fill="#5800b0" fill-opacity="0.45"/><circle cx="317.8" cy="173.8" r="4.5" fill="#6700a3" fill-opacity="0.45"/><circle cx="318.4" cy="173.5" r="4.5" fill="#6d009d" fill-opacity="0.45"/><circle cx="320.1" cy="174.7" r="4.5" fill="#760096" fill-opacity="0.45"/><circle cx="319.6" cy="171.8" r="4.5" fill="#78008c" fill-opacity="0.45"/><circle cx="320.4" cy="171.5" r="4.5" fill="#700085" fill-opacity="0.45"/><circle cx="322.6" cy="171.6" r="4.5" fill="#600077" fill-opacity="0.45"/><circle cx="322.7" cy="170.4" r="4.5" fill="#580070" fill-opacity="0.45"/><circle cx="323.0" cy="169.3" r="4.5" fill="#4e0068" fill-opacity="0.45"/><circle cx="324.4" cy="168.7" r="4.5" fill="#41005b" fill-opacity="0.45"/><circle cx="326.1" cy="168.3" r="4.5" fill="#32004e" fill-opacity="0.45"/><circle cx="326.0" cy="168.0" r="4.5" fill="#30004d" fill-opacity="0.45"/><circle cx="306.2" cy="215.6" r="4.5" fill="#008b4b" fill-opacity="0.45"/><circle cx="307.0" cy="216.5" r="4.5" fill="#008a4c" fill-opacity="0.45"/><circle cx="306.7" cy="217.3" r="4.5" fill="#00894d" fill-opacity="0.45"/><circle cx="307.2" cy="218.0" r="4.5" fill="#00884f" fill-opacity="0.45"/><circle cx="304.0" cy="219.8" r="4.5" fill="#008651" fill-opacity="0.45"/><circle cx="307.5" cy="220.2" r="4.5" fill="#008552" fill-opacity="0.45"/><circle cx="306.6" cy="221.6" r="4.5" fill="#008454" fill-opacity="0.45"/><circle cx="305.3" cy="222.6" r="4.5" fill="#008355" fill-opacity="0.45"/><circle cx="304.3" cy="224.5" r="4.5" fill="#008158" fill-opacity="0.45"/><circle cx="305.3" cy="224.8" r="4.5" fill="#008059" fill-opacity="0.45"/><circle cx="308.2" cy="226.0" r="4.5" fill="#007f5b" fill-opacity="0.45"/><circle cx="306.2" cy="226.6" r="4.5" fill="#007e5b" fill-opacity="0.45"/><circle cx="307.6" cy="228.3" r="4.5" fill="#007c5e" fill-opacity="0.45"/><circle cx="308.0" cy="228.7" r="4.5" fill="#007b5f" fill-opacity="0.45"/><circle cx="307.5" cy="230.3" r="4.5" fill="#007a61" fill-opacity="0.45"/><circle cx="306.1" cy="231.5" r="4.5" fill="#007863" fill-opacity="0.45"/><circle cx="308.6" cy="231.6" r="4.5" fill="#007863" fill-opacity="0.45"/><circle cx="307.2" cy="233.6" r="4.5" fill="#007666" fill-opacity="0.45"/><circle cx="307.8" cy="234.1" r="4.5" fill="#007567" fill-opacity="0.45"/><circle cx="307.1" cy="235.9" r="4.5" fill="#00736a" fill-opacity="0.45"/><circle cx="307.2" cy="236.6" r="4.5" fill="#00726b" fill-opacity="0.45"/><circle cx="307.3" cy="237.7" r="4.5" fill="#00716c" fill-opacity="0.45"/><circle cx="308.2" cy="238.9" r="4.5" fill="#006f6e" fill-opacity="0.45"/><circle cx="308.3" cy="239.3" r="4.5" fill="#006f6f" fill-opacity="0.45"/><circle cx="308.7" cy="240.6" r="4.5" fill="#006a75" fill-opacity="0.45"/><circle cx="307.1" cy="242.1" r="4.5" fill="#006280" fill-opacity="0.45"/><circle cx="308.8" cy="243.0" r="4.5" fill="#005c88" fill-opacity="0.45"/><circle cx="309.1" cy="243.4" r="4.5" fill="#00598b" fill-opacity="0.45"/><circle cx="307.0" cy="245.3" r="4.5" fill="#004f98" fill-opacity="0.45"/><circle cx="310.0" cy="245.5" r="4.5" fill="#004b9d" fill-opacity="0.45"/><circle cx="307.4" cy="247.2" r="4.5" fill="#0043a8" fill-opacity="0.45"/><circle cx="307.9" cy="247.8" r="4.5" fill="#003fad" fill-opacity="0.45"/><circle cx="309.6" cy="249.3" r="4.5" fill="#0035bb" fill-opacity="0.45"/><circle cx="309.8" cy="249.7" r="4.5" fill="#0032bd" fill-opacity="0.45"/><circle cx="308.4" cy="251.0" r="4.5" fill="#002bc6" fill-opacity="0.45"/><circle cx="308.4" cy="252.4" r="4.5" fill="#0023d2" fill-opacity="0.45"/><circle cx="310.7" cy="252.8" r="4.5" fill="#001fd7" fill-opacity="0.45"/><circle cx="309.3" cy="254.6" r="4.5" fill="#0015e4" fill-opacity="0.45"/><circle cx="309.4" cy="255.3" r="4.5" fill="#0010ea" fill-opacity="0.45"/><circle cx="310.0" cy="255.9" r="4.5" fill="#000dee" fill-opacity="0.45"/><circle cx="310.4" cy="257.9" r="4.5" fill="#0000ff" fill-opacity="0.45"/><circle cx="310.0" cy="258.0" r="4.5" fill="#0000ff" fill-opacity="0.45"/><circle cx="302.0" cy="240.0" r="4.5" fill="#006e70" fill-opacity="0.33"/><circle cx="301.0" cy="250.0" r="4.5" fill="#004d9b" fill-opacity="0.33"/><circle cx="317.0" cy="263.0" r="4.5" fill="#0000ff" fill-opacity="0.33"/><circle cx="288.0" cy="235.0" r="4.5" fill="#7c0090" fill-opacity="0.4"/><circle cx="292.0" cy="232.0" r="4.5" fill="#7c0090" fill-opacity="0.4"/><circle cx="297.0" cy="258.0" r="4.5" fill="#0016e2" fill-opacity="0.4"/><circle cx="293.0" cy="262.0" r="4.5" fill="#0000ff" fill-opacity="0.4"/><circle cx="261.5" cy="250.7" r="4.5" fill="#1ff300" fill-opacity="0.42"/><circle cx="266.3" cy="249.8" r="4.5" fill="#00fb02" fill-opacity="0.42"/><circle cx="266.3" cy="250.0" r="4.5" fill="#07fc00" fill-opacity="0.42"/><circle cx="257.8" cy="253.4" r="4.5" fill="#00f903" fill-opacity="0.42"/><circle cx="258.5" cy="254.3" r="4.5" fill="#00ed09" fill-opacity="0.42"/><circle cx="263.3" cy="253.3" r="4.5" fill="#00eb0a" fill-opacity="0.42"/><circle cx="266.6" cy="252.9" r="4.5" fill="#00fb02" fill-opacity="0.42"/><circle cx="263.3" cy="254.5" r="4.5" fill="#00ef08" fill-opacity="0.42"/><circle cx="263.0" cy="255.4" r="4.5" fill="#00e90b" fill-opacity="0.42"/><circle cx="267.9" cy="254.5" r="4.5" fill="#19f500" fill-opacity="0.42"/><circle cx="267.3" cy="254.9" r="4.5" fill="#00de11" fill-opacity="0.42"/><circle cx="264.8" cy="256.5" r="4.5" fill="#00fd01" fill-opacity="0.42"/><circle cx="266.6" cy="256.8" r="4.5" fill="#00e90b" fill-opacity="0.42"/><circle cx="261.0" cy="259.1" r="4.5" fill="#00e70c" fill-opacity="0.42"/><circle cx="264.2" cy="258.5" r="4.5" fill="#1cf400" fill-opacity="0.42"/><circle cx="269.4" cy="258.0" r="4.5" fill="#0cfa00" fill-opacity="0.42"/><circle cx="264.3" cy="260.3" r="4.5" fill="#00ee09" fill-opacity="0.42"/><circle cx="265.1" cy="260.4" r="4.5" fill="#10f900" fill-opacity="0.42"/><circle cx="268.0" cy="260.2" r="4.5" fill="#00ed09" fill-opacity="0.42"/><circle cx="269.4" cy="260.2" r="4.5" fill="#10f900" fill-opacity="0.42"/><circle cx="265.1" cy="262.5" r="4.5" fill="#20f200" fill-opacity="0.42"/><circle cx="262.7" cy="264.2" r="4.5" fill="#00fe00" fill-opacity="0.42"/><circle cx="262.8" cy="264.3" r="4.5" fill="#00d813" fill-opacity="0.42"/><circle cx="263.7" cy="264.7" r="4.5" fill="#00e20f" fill-opacity="0.42"/><circle cx="269.9" cy="263.9" r="4.5" fill="#14f700" fill-opacity="0.42"/><circle cx="269.7" cy="264.1" r="4.5" fill="#00dc12" fill-opacity="0.42"/><circle cx="267.4" cy="265.9" r="4.5" fill="#12f800" fill-opacity="0.42"/><circle cx="270.0" cy="265.4" r="4.5" fill="#00eb0a" fill-opacity="0.42"/><circle cx="264.5" cy="268.1" r="4.5" fill="#00f803" fill-opacity="0.42"/><circle cx="268.0" cy="267.4" r="4.5" fill="#00fc01" fill-opacity="0.42"/><circle cx="265.8" cy="268.8" r="4.5" fill="#00e60d" fill-opacity="0.42"/><circle cx="267.2" cy="268.9" r="4.5" fill="#0ef900" fill-opacity="0.42"/><circle cx="269.3" cy="268.7" r="4.5" fill="#00fc02" fill-opacity="0.42"/><circle cx="272.9" cy="268.2" r="4.5" fill="#00f704" fill-opacity="0.42"/><circle cx="264.9" cy="272.0" r="4.5" fill="#16f600" fill-opacity="0.42"/><circle cx="270.2" cy="270.6" r="4.5" fill="#00fe01" fill-opacity="0.42"/><circle cx="267.9" cy="271.8" r="4.5" fill="#00dc12" fill-opacity="0.42"/><circle cx="272.8" cy="271.1" r="4.5" fill="#0ff900" fill-opacity="0.42"/><circle cx="266.3" cy="273.6" r="4.5" fill="#04fe00" fill-opacity="0.42"/><circle cx="266.3" cy="274.7" r="4.5" fill="#0ff900" fill-opacity="0.42"/><circle cx="271.7" cy="273.3" r="4.5" fill="#00df10" fill-opacity="0.42"/><circle cx="272.2" cy="274.1" r="4.5" fill="#00f206" fill-opacity="0.42"/><circle cx="270.4" cy="274.9" r="4.5" fill="#00dc12" fill-opacity="0.42"/><circle cx="267.7" cy="278.1" r="4.5" fill="#00d316" fill-opacity="0.42"/><circle cx="266.9" cy="279.9" r="4.5" fill="#00d117" fill-opacity="0.42"/><circle cx="266.8" cy="280.5" r="4.5" fill="#00ff00" fill-opacity="0.42"/><circle cx="275.5" cy="274.2" r="4.5" fill="#00f704" fill-opacity="0.42"/><circle cx="269.1" cy="280.3" r="4.5" fill="#00df10" fill-opacity="0.42"/><circle cx="268.9" cy="281.2" r="4.5" fill="#00d316" fill-opacity="0.42"/><circle cx="277.3" cy="274.9" r="4.5" fill="#00f604" fill-opacity="0.42"/><circle cx="274.2" cy="278.2" r="4.5" fill="#00cc1a" fill-opacity="0.42"/><circle cx="271.0" cy="282.2" r="4.5" fill="#04fd00" fill-opacity="0.42"/><circle cx="272.1" cy="281.8" r="4.5" fill="#00f007" fill-opacity="0.42"/><circle cx="278.8" cy="276.7" r="4.5" fill="#04fe00" fill-opacity="0.42"/><circle cx="274.7" cy="281.2" r="4.5" fill="#00eb0a" fill-opacity="0.42"/><circle cx="277.7" cy="279.6" r="4.5" fill="#04fd00" fill-opacity="0.42"/><circle cx="277.7" cy="280.5" r="4.5" fill="#00e30e" fill-opacity="0.42"/><circle cx="278.6" cy="280.3" r="4.5" fill="#00fe00" fill-opacity="0.42"/><circle cx="278.7" cy="281.0" r="4.5" fill="#00f903" fill-opacity="0.42"/><circle cx="277.3" cy="282.9" r="4.5" fill="#00ff00" fill-opacity="0.42"/><circle cx="279.2" cy="282.7" r="4.5" fill="#00e20f" fill-opacity="0.42"/><circle cx="282.8" cy="280.1" r="4.5" fill="#00f704" fill-opacity="0.42"/><circle cx="278.1" cy="285.3" r="4.5" fill="#00dd11" fill-opacity="0.42"/><circle cx="276.4" cy="287.3" r="4.5" fill="#00dc12" fill-opacity="0.42"/><circle cx="276.2" cy="288.7" r="4.5" fill="#00c21f" fill-opacity="0.42"/><circle cx="278.1" cy="287.7" r="4.5" fill="#00dd11" fill-opacity="0.42"/><circle cx="279.4" cy="287.3" r="4.5" fill="#00d814" fill-opacity="0.42"/><circle cx="277.2" cy="290.4" r="4.5" fill="#00f505" fill-opacity="0.42"/><circle cx="280.0" cy="288.7" r="4.5" fill="#00d117" fill-opacity="0.42"/><circle cx="286.2" cy="284.1" r="4.5" fill="#00d814" fill-opacity="0.42"/><circle cx="277.3" cy="292.4" r="4.5" fill="#00eb0a" fill-opacity="0.42"/><circle cx="286.0" cy="285.8" r="4.5" fill="#00c51d" fill-opacity="0.42"/><circle cx="280.3" cy="291.5" r="4.5" fill="#00e10f" fill-opacity="0.42"/><circle cx="288.4" cy="285.6" r="4.5" fill="#00e50d" fill-opacity="0.42"/><circle cx="279.7" cy="293.9" r="4.5" fill="#00c11f" fill-opacity="0.42"/><circle cx="288.2" cy="286.9" r="4.5" fill="#00c51d" fill-opacity="0.42"/><circle cx="289.1" cy="287.4" r="4.5" fill="#00b525" fill-opacity="0.42"/><circle cx="289.7" cy="287.5" r="4.5" fill="#00d117" fill-opacity="0.42"/><circle cx="290.3" cy="290.4" r="4.5" fill="#00b725" fill-opacity="0.42"/><circle cx="290.4" cy="291.4" r="4.5" fill="#00d018" fill-opacity="0.42"/><circle cx="283.2" cy="294.1" r="4.5" fill="#00e50d" fill-opacity="0.42"/><circle cx="286.9" cy="293.5" r="4.5" fill="#00cd19" fill-opacity="0.42"/><circle cx="284.6" cy="295.1" r="4.5" fill="#00ad29" fill-opacity="0.42"/><circle cx="280.8" cy="297.4" r="4.5" fill="#00b227" fill-opacity="0.42"/><circle cx="289.7" cy="294.5" r="4.5" fill="#00c91b" fill-opacity="0.42"/><circle cx="285.2" cy="297.0" r="4.5" fill="#00ce19" fill-opacity="0.42"/><circle cx="289.3" cy="296.4" r="4.5" fill="#00e10f" fill-opacity="0.42"/><circle cx="290.7" cy="296.0" r="4.5" fill="#00b426" fill-opacity="0.42"/><circle cx="293.3" cy="296.3" r="4.5" fill="#00d117" fill-opacity="0.42"/><circle cx="283.5" cy="299.9" r="4.5" fill="#00a72d" fill-opacity="0.42"/><circle cx="292.8" cy="297.4" r="4.5" fill="#00a130" fill-opacity="0.42"/><circle cx="285.0" cy="301.2" r="4.5" fill="#00be21" fill-opacity="0.42"/><circle cx="284.5" cy="301.9" r="4.5" fill="#00ba23" fill-opacity="0.42"/><circle cx="287.8" cy="301.1" r="4.5" fill="#00b028" fill-opacity="0.42"/><circle cx="286.5" cy="302.2" r="4.5" fill="#00cf18" fill-opacity="0.42"/><circle cx="292.5" cy="301.2" r="4.5" fill="#00c81c" fill-opacity="0.42"/><circle cx="283.0" cy="305.2" r="4.5" fill="#009c35" fill-opacity="0.42"/><circle cx="284.5" cy="305.3" r="4.5" fill="#00a030" fill-opacity="0.42"/><circle cx="294.9" cy="302.1" r="4.5" fill="#00a42e" fill-opacity="0.42"/><circle cx="285.0" cy="306.4" r="4.5" fill="#00ce19" fill-opacity="0.42"/><circle cx="286.5" cy="306.0" r="4.5" fill="#00b127" fill-opacity="0.42"/><circle cx="283.4" cy="308.3" r="4.5" fill="#00b127" fill-opacity="0.42"/><circle cx="287.9" cy="307.3" r="4.5" fill="#00a130" fill-opacity="0.42"/><circle cx="288.4" cy="307.6" r="4.5" fill="#00c71c" fill-opacity="0.42"/><circle cx="287.6" cy="308.9" r="4.5" fill="#009a37" fill-opacity="0.42"/><circle cx="294.6" cy="306.8" r="4.5" fill="#00ac2a" fill-opacity="0.42"/><circle cx="290.3" cy="309.1" r="4.5" fill="#00c020" fill-opacity="0.42"/><circle cx="292.3" cy="308.6" r="4.5" fill="#00b724" fill-opacity="0.42"/><circle cx="294.9" cy="308.5" r="4.5" fill="#00ab2b" fill-opacity="0.42"/><circle cx="286.1" cy="312.6" r="4.5" fill="#009b36" fill-opacity="0.42"/><circle cx="286.7" cy="312.5" r="4.5" fill="#009d33" fill-opacity="0.42"/><circle cx="290.4" cy="312.4" r="4.5" fill="#00aa2b" fill-opacity="0.42"/><circle cx="292.0" cy="312.0" r="4.5" fill="#00a030" fill-opacity="0.42"/><circle cx="245.0" cy="263.0" r="4.5" fill="#00ff00" fill-opacity="0.5"/><circle cx="252.0" cy="265.0" r="4.5" fill="#00ff00" fill-opacity="0.5"/><circle cx="265.0" cy="280.0" r="4.5" fill="#00ff00" fill-opacity="0.33"/><circle cx="298.0" cy="250.0" r="4.5" fill="#0016e2" fill-opacity="0.33"/><circle cx="297.0" cy="258.0" r="4.5" fill="#0016e2" fill-opacity="0.33"/><circle cx="294.7" cy="314.3" r="4.5" fill="#008f45" fill-opacity="0.42"/><circle cx="287.8" cy="311.6" r="4.5" fill="#008553" fill-opacity="0.42"/><circle cx="288.2" cy="312.7" r="4.5" fill="#00884e" fill-opacity="0.42"/><circle cx="285.5" cy="312.2" r="4.5" fill="#008058" fill-opacity="0.42"/><circle cx="294.8" cy="316.6" r="4.5" fill="#008f46" fill-opacity="0.42"/><circle cx="284.5" cy="312.7" r="4.5" fill="#008f46" fill-opacity="0.42"/><circle cx="294.7" cy="317.6" r="4.5" fill="#008652" fill-opacity="0.42"/><circle cx="282.4" cy="312.8" r="4.5" fill="#008e47" fill-opacity="0.42"/><circle cx="284.7" cy="314.6" r="4.5" fill="#007e5c" fill-opacity="0.42"/><circle cx="283.0" cy="314.1" r="4.5" fill="#00953e" fill-opacity="0.42"/><circle cx="290.2" cy="317.6" r="4.5" fill="#00973c" fill-opacity="0.42"/><circle cx="288.9" cy="318.2" r="4.5" fill="#009939" fill-opacity="0.42"/><circle cx="292.8" cy="320.2" r="4.5" fill="#00973b" fill-opacity="0.42"/><circle cx="292.3" cy="320.4" r="4.5" fill="#008b4b" fill-opacity="0.42"/><circle cx="282.9" cy="316.8" r="4.5" fill="#00953e" fill-opacity="0.42"/><circle cx="291.0" cy="321.3" r="4.5" fill="#008d49" fill-opacity="0.42"/><circle cx="293.5" cy="322.5" r="4.5" fill="#00963d" fill-opacity="0.42"/><circle cx="289.3" cy="321.6" r="4.5" fill="#008d48" fill-opacity="0.42"/><circle cx="289.6" cy="322.1" r="4.5" fill="#008b4b" fill-opacity="0.42"/><circle cx="288.3" cy="321.8" r="4.5" fill="#00953e" fill-opacity="0.42"/><circle cx="281.7" cy="319.8" r="4.5" fill="#008355" fill-opacity="0.42"/><circle cx="280.1" cy="319.5" r="4.5" fill="#008157" fill-opacity="0.42"/><circle cx="291.1" cy="324.7" r="4.5" fill="#008158" fill-opacity="0.42"/><circle cx="277.6" cy="319.6" r="4.5" fill="#007f5b" fill-opacity="0.42"/><circle cx="284.0" cy="322.7" r="4.5" fill="#008553" fill-opacity="0.42"/><circle cx="290.5" cy="326.4" r="4.5" fill="#007666" fill-opacity="0.42"/><circle cx="288.2" cy="325.9" r="4.5" fill="#007567" fill-opacity="0.42"/><circle cx="291.3" cy="327.7" r="4.5" fill="#008157" fill-opacity="0.42"/><circle cx="288.8" cy="327.1" r="4.5" fill="#008f45" fill-opacity="0.42"/><circle cx="286.9" cy="327.0" r="4.5" fill="#008059" fill-opacity="0.42"/><circle cx="275.4" cy="322.6" r="4.5" fill="#007765" fill-opacity="0.42"/><circle cx="287.6" cy="328.6" r="4.5" fill="#007962" fill-opacity="0.42"/><circle cx="282.0" cy="326.2" r="4.5" fill="#00973c" fill-opacity="0.42"/><circle cx="275.5" cy="323.9" r="4.5" fill="#00943f" fill-opacity="0.42"/><circle cx="282.4" cy="327.8" r="4.5" fill="#00983a" fill-opacity="0.42"/><circle cx="290.4" cy="332.0" r="4.5" fill="#007468" fill-opacity="0.42"/><circle cx="282.5" cy="329.0" r="4.5" fill="#008552" fill-opacity="0.42"/><circle cx="278.8" cy="327.5" r="4.5" fill="#00953e" fill-opacity="0.42"/><circle cx="274.4" cy="326.3" r="4.5" fill="#007b5f" fill-opacity="0.42"/><circle cx="277.6" cy="330.1" r="4.5" fill="#007a61" fill-opacity="0.42"/><circle cx="276.6" cy="330.7" r="4.5" fill="#007e5c" fill-opacity="0.42"/><circle cx="281.5" cy="331.2" r="4.5" fill="#00894e" fill-opacity="0.42"/><circle cx="274.3" cy="331.6" r="4.5" fill="#008553" fill-opacity="0.42"/><circle cx="284.6" cy="332.4" r="4.5" fill="#008a4d" fill-opacity="0.42"/><circle cx="272.9" cy="332.5" r="4.5" fill="#00736a" fill-opacity="0.42"/><circle cx="280.3" cy="333.5" r="4.5" fill="#008d49" fill-opacity="0.42"/><circle cx="290.8" cy="333.6" r="4.5" fill="#007665" fill-opacity="0.42"/><circle cx="273.2" cy="334.3" r="4.5" fill="#008257" fill-opacity="0.42"/><circle cx="287.4" cy="334.6" r="4.5" fill="#008750" fill-opacity="0.42"/><circle cx="282.1" cy="335.0" r="4.5" fill="#007b5f" fill-opacity="0.42"/><circle cx="273.3" cy="335.7" r="4.5" fill="#007e5b" fill-opacity="0.42"/><circle cx="281.4" cy="336.4" r="4.5" fill="#008552" fill-opacity="0.42"/><circle cx="279.9" cy="336.5" r="4.5" fill="#005c87" fill-opacity="0.42"/><circle cx="278.1" cy="337.0" r="4.5" fill="#007f5b" fill-opacity="0.42"/><circle cx="275.7" cy="337.8" r="4.5" fill="#00637e" fill-opacity="0.42"/><circle cx="288.5" cy="338.1" r="4.5" fill="#004d9b" fill-opacity="0.42"/><circle cx="274.0" cy="339.0" r="4.5" fill="#006e6f" fill-opacity="0.42"/><circle cx="284.5" cy="339.0" r="4.5" fill="#004e99" fill-opacity="0.42"/><circle cx="285.8" cy="339.5" r="4.5" fill="#008157" fill-opacity="0.42"/><circle cx="284.7" cy="340.4" r="4.5" fill="#007e5c" fill-opacity="0.42"/><circle cx="287.5" cy="340.7" r="4.5" fill="#006f6e" fill-opacity="0.42"/><circle cx="279.1" cy="341.3" r="4.5" fill="#007c5f" fill-opacity="0.42"/><circle cx="290.2" cy="341.8" r="4.5" fill="#006b73" fill-opacity="0.42"/><circle cx="286.4" cy="342.4" r="4.5" fill="#0047a3" fill-opacity="0.42"/><circle cx="284.0" cy="342.6" r="4.5" fill="#0049a0" fill-opacity="0.42"/><circle cx="281.0" cy="343.0" r="4.5" fill="#005e85" fill-opacity="0.42"/><circle cx="273.9" cy="343.9" r="4.5" fill="#004c9c" fill-opacity="0.42"/><circle cx="287.5" cy="344.1" r="4.5" fill="#005e85" fill-opacity="0.42"/><circle cx="281.0" cy="344.6" r="4.5" fill="#007567" fill-opacity="0.42"/><circle cx="283.4" cy="345.6" r="4.5" fill="#007567" fill-opacity="0.42"/><circle cx="274.2" cy="344.4" r="4.5" fill="#0035b9" fill-opacity="0.42"/><circle cx="283.7" cy="346.7" r="4.5" fill="#0024d1" fill-opacity="0.42"/><circle cx="277.8" cy="346.0" r="4.5" fill="#0026cd" fill-opacity="0.42"/><circle cx="290.3" cy="348.4" r="4.5" fill="#006b74" fill-opacity="0.42"/><circle cx="276.3" cy="346.7" r="4.5" fill="#003daf" fill-opacity="0.42"/><circle cx="288.2" cy="349.3" r="4.5" fill="#0036b9" fill-opacity="0.42"/><circle cx="287.8" cy="349.5" r="4.5" fill="#0038b7" fill-opacity="0.42"/><circle cx="276.2" cy="348.5" r="4.5" fill="#001ed8" fill-opacity="0.42"/><circle cx="284.6" cy="350.1" r="4.5" fill="#00588c" fill-opacity="0.42"/><circle cx="289.2" cy="351.5" r="4.5" fill="#0014e5" fill-opacity="0.42"/><circle cx="275.9" cy="350.0" r="4.5" fill="#0031bf" fill-opacity="0.42"/><circle cx="275.4" cy="350.6" r="4.5" fill="#000feb" fill-opacity="0.42"/><circle cx="285.7" cy="352.6" r="4.5" fill="#0037b8" fill-opacity="0.42"/><circle cx="276.5" cy="351.3" r="4.5" fill="#002bc7" fill-opacity="0.42"/><circle cx="284.3" cy="353.5" r="4.5" fill="#0028cb" fill-opacity="0.42"/><circle cx="273.0" cy="352.2" r="4.5" fill="#0008f4" fill-opacity="0.42"/><circle cx="273.7" cy="352.9" r="4.5" fill="#0030c1" fill-opacity="0.42"/><circle cx="287.7" cy="355.4" r="4.5" fill="#0009f3" fill-opacity="0.42"/><circle cx="280.4" cy="355.0" r="4.5" fill="#0034bc" fill-opacity="0.42"/><circle cx="287.5" cy="356.4" r="4.5" fill="#0016e3" fill-opacity="0.42"/><circle cx="281.7" cy="355.7" r="4.5" fill="#1000f1" fill-opacity="0.42"/><circle cx="274.6" cy="355.5" r="4.5" fill="#000fec" fill-opacity="0.42"/><circle cx="287.3" cy="357.8" r="4.5" fill="#1800ea" fill-opacity="0.42"/><circle cx="281.6" cy="357.5" r="4.5" fill="#0024d0" fill-opacity="0.42"/><circle cx="287.0" cy="358.8" r="4.5" fill="#0023d1" fill-opacity="0.42"/><circle cx="280.0" cy="358.0" r="4.5" fill="#0000ff" fill-opacity="0.42"/><circle cx="262.0" cy="292.0" r="4.5" fill="#00ef08" fill-opacity="0.33"/><circle cx="262.0" cy="301.0" r="4.5" fill="#00ef08" fill-opacity="0.33"/><circle cx="270.0" cy="302.0" r="4.5" fill="#00ef08" fill-opacity="0.33"/><circle cx="258.0" cy="313.0" r="4.5" fill="#00df10" fill-opacity="0.33"/><circle cx="250.0" cy="320.0" r="4.5" fill="#00d714" fill-opacity="0.33"/><circle cx="243.0" cy="330.0" r="4.5" fill="#00d714" fill-opacity="0.33"/><circle cx="232.0" cy="340.0" r="4.5" fill="#00cf18" fill-opacity="0.33"/><circle cx="227.0" cy="348.0" r="4.5" fill="#00cf18" fill-opacity="0.33"/><circle cx="227.0" cy="355.0" r="4.5" fill="#00c020" fill-opacity="0.33"/><circle cx="248.0" cy="325.0" r="4.5" fill="#00d714" fill-opacity="0.5"/><circle cx="250.0" cy="340.0" r="4.5" fill="#00cf18" fill-opacity="0.5"/><circle cx="245.0" cy="345.0" r="4.5" fill="#00cf18" fill-opacity="0.45"/><circle cx="254.0" cy="332.0" r="4.5" fill="#00d714" fill-opacity="0.33"/><circle cx="266.0" cy="337.0" r="4.5" fill="#006e70" fill-opacity="0.45"/><circle cx="295.0" cy="320.0" r="4.5" fill="#008c4a" fill-opacity="0.33"/><circle cx="305.0" cy="330.0" r="4.5" fill="#008256" fill-opacity="0.33"/><circle cx="300.0" cy="335.0" r="4.5" fill="#007863" fill-opacity="0.33"/><circle cx="296.4" cy="287.0" r="4.5" fill="#00b127" fill-opacity="0.42"/><circle cx="296.2" cy="289.8" r="4.5" fill="#009340" fill-opacity="0.42"/><circle cx="299.1" cy="284.0" r="4.5" fill="#00a72d" fill-opacity="0.42"/><circle cx="297.3" cy="289.9" r="4.5" fill="#00983a" fill-opacity="0.42"/><circle cx="300.7" cy="282.8" r="4.5" fill="#00a72c" fill-opacity="0.42"/><circle cx="296.5" cy="293.8" r="4.5" fill="#008d48" fill-opacity="0.42"/><circle cx="300.5" cy="286.0" r="4.5" fill="#00ab2a" fill-opacity="0.42"/><circle cx="300.0" cy="288.2" r="4.5" fill="#008c4a" fill-opacity="0.42"/><circle cx="301.5" cy="285.5" r="4.5" fill="#00aa2b" fill-opacity="0.42"/><circle cx="298.4" cy="294.1" r="4.5" fill="#008c4a" fill-opacity="0.42"/><circle cx="303.6" cy="283.1" r="4.5" fill="#009440" fill-opacity="0.42"/><circle cx="300.5" cy="291.8" r="4.5" fill="#00894e" fill-opacity="0.42"/><circle cx="303.3" cy="287.3" r="4.5" fill="#009044" fill-opacity="0.42"/><circle cx="300.6" cy="294.4" r="4.5" fill="#009a37" fill-opacity="0.42"/><circle cx="301.8" cy="293.6" r="4.5" fill="#008652" fill-opacity="0.42"/><circle cx="300.2" cy="297.8" r="4.5" fill="#008f46" fill-opacity="0.42"/><circle cx="302.6" cy="293.4" r="4.5" fill="#00963d" fill-opacity="0.42"/><circle cx="306.9" cy="284.3" r="4.5" fill="#008c4a" fill-opacity="0.42"/><circle cx="307.0" cy="285.4" r="4.5" fill="#008651" fill-opacity="0.42"/><circle cx="303.2" cy="295.7" r="4.5" fill="#00943f" fill-opacity="0.42"/><circle cx="302.6" cy="298.7" r="4.5" fill="#008256" fill-opacity="0.42"/><circle cx="302.9" cy="299.9" r="4.5" fill="#00884f" fill-opacity="0.42"/><circle cx="305.8" cy="294.4" r="4.5" fill="#008750" fill-opacity="0.42"/><circle cx="307.6" cy="290.6" r="4.5" fill="#008750" fill-opacity="0.42"/><circle cx="306.3" cy="295.0" r="4.5" fill="#007d5c" fill-opacity="0.42"/><circle cx="309.8" cy="288.5" r="4.5" fill="#00953e" fill-opacity="0.42"/><circle cx="308.7" cy="292.1" r="4.5" fill="#007c5e" fill-opacity="0.42"/><circle cx="308.6" cy="293.7" r="4.5" fill="#008256" fill-opacity="0.42"/><circle cx="308.0" cy="296.6" r="4.5" fill="#008256" fill-opacity="0.42"/><circle cx="311.6" cy="289.3" r="4.5" fill="#008e46" fill-opacity="0.42"/><circle cx="307.3" cy="300.5" r="4.5" fill="#007567" fill-opacity="0.42"/><circle cx="310.0" cy="295.4" r="4.5" fill="#008158" fill-opacity="0.42"/><circle cx="313.4" cy="288.8" r="4.5" fill="#007864" fill-opacity="0.42"/><circle cx="313.3" cy="289.7" r="4.5" fill="#008651" fill-opacity="0.42"/><circle cx="314.1" cy="289.3" r="4.5" fill="#008b4b" fill-opacity="0.42"/><circle cx="314.9" cy="289.1" r="4.5" fill="#007962" fill-opacity="0.42"/><circle cx="312.0" cy="297.4" r="4.5" fill="#007d5d" fill-opacity="0.42"/><circle cx="315.0" cy="291.7" r="4.5" fill="#007c5e" fill-opacity="0.42"/><circle cx="316.1" cy="290.4" r="4.5" fill="#007369" fill-opacity="0.42"/><circle cx="310.7" cy="304.4" r="4.5" fill="#007666" fill-opacity="0.42"/><circle cx="312.7" cy="300.8" r="4.5" fill="#007f5b" fill-opacity="0.42"/><circle cx="315.5" cy="294.7" r="4.5" fill="#00716d" fill-opacity="0.42"/><circle cx="317.5" cy="290.1" r="4.5" fill="#00627f" fill-opacity="0.42"/><circle cx="316.5" cy="296.3" r="4.5" fill="#005d86" fill-opacity="0.42"/><circle cx="317.4" cy="294.2" r="4.5" fill="#008158" fill-opacity="0.42"/><circle cx="316.4" cy="298.3" r="4.5" fill="#006d71" fill-opacity="0.42"/><circle cx="316.2" cy="302.3" r="4.5" fill="#007568" fill-opacity="0.42"/><circle cx="317.7" cy="298.9" r="4.5" fill="#006d71" fill-opacity="0.42"/><circle cx="317.7" cy="300.3" r="4.5" fill="#006f6f" fill-opacity="0.42"/><circle cx="317.9" cy="300.5" r="4.5" fill="#00657b" fill-opacity="0.42"/><circle cx="317.0" cy="306.5" r="4.5" fill="#00706e" fill-opacity="0.42"/><circle cx="319.8" cy="297.6" r="4.5" fill="#00726a" fill-opacity="0.42"/><circle cx="318.2" cy="305.1" r="4.5" fill="#007765" fill-opacity="0.42"/><circle cx="322.9" cy="291.2" r="4.5" fill="#006878" fill-opacity="0.42"/><circle cx="324.0" cy="289.8" r="4.5" fill="#004f99" fill-opacity="0.42"/><circle cx="319.1" cy="307.3" r="4.5" fill="#004b9d" fill-opacity="0.42"/><circle cx="321.7" cy="300.8" r="4.5" fill="#00667a" fill-opacity="0.42"/><circle cx="323.6" cy="295.3" r="4.5" fill="#00667b" fill-opacity="0.42"/><circle cx="325.7" cy="290.7" r="4.5" fill="#005c88" fill-opacity="0.42"/><circle cx="323.6" cy="299.5" r="4.5" fill="#004a9f" fill-opacity="0.42"/><circle cx="325.4" cy="295.1" r="4.5" fill="#003db0" fill-opacity="0.42"/><circle cx="326.2" cy="294.2" r="4.5" fill="#005590" fill-opacity="0.42"/><circle cx="328.1" cy="289.8" r="4.5" fill="#004c9c" fill-opacity="0.42"/><circle cx="327.0" cy="294.8" r="4.5" fill="#006b74" fill-opacity="0.42"/><circle cx="326.5" cy="297.9" r="4.5" fill="#00588d" fill-opacity="0.42"/><circle cx="328.1" cy="294.7" r="4.5" fill="#0048a1" fill-opacity="0.42"/><circle cx="325.6" cy="305.4" r="4.5" fill="#003ab4" fill-opacity="0.42"/><circle cx="324.9" cy="309.2" r="4.5" fill="#0049a0" fill-opacity="0.42"/><circle cx="329.5" cy="294.7" r="4.5" fill="#003cb1" fill-opacity="0.42"/><circle cx="327.6" cy="303.6" r="4.5" fill="#00588d" fill-opacity="0.42"/><circle cx="330.7" cy="295.2" r="4.5" fill="#002cc5" fill-opacity="0.42"/><circle cx="330.2" cy="298.1" r="4.5" fill="#003eae" fill-opacity="0.42"/><circle cx="329.9" cy="301.2" r="4.5" fill="#003daf" fill-opacity="0.42"/><circle cx="329.4" cy="305.4" r="4.5" fill="#00598b" fill-opacity="0.42"/><circle cx="334.1" cy="290.6" r="4.5" fill="#005a8a" fill-opacity="0.42"/><circle cx="333.0" cy="296.1" r="4.5" fill="#00598b" fill-opacity="0.42"/><circle cx="331.9" cy="300.6" r="4.5" fill="#0023d2" fill-opacity="0.42"/><circle cx="334.2" cy="294.0" r="4.5" fill="#00588d" fill-opacity="0.42"/><circle cx="333.9" cy="297.2" r="4.5" fill="#0036b9" fill-opacity="0.42"/><circle cx="332.9" cy="304.3" r="4.5" fill="#001add" fill-opacity="0.42"/><circle cx="331.7" cy="309.8" r="4.5" fill="#0025cf" fill-opacity="0.42"/><circle cx="335.1" cy="298.8" r="4.5" fill="#0030c0" fill-opacity="0.42"/><circle cx="332.3" cy="310.3" r="4.5" fill="#002ec3" fill-opacity="0.42"/><circle cx="335.3" cy="301.5" r="4.5" fill="#0017e2" fill-opacity="0.42"/><circle cx="335.3" cy="303.7" r="4.5" fill="#0043a7" fill-opacity="0.42"/><circle cx="338.1" cy="295.4" r="4.5" fill="#0026ce" fill-opacity="0.42"/><circle cx="338.6" cy="296.4" r="4.5" fill="#0017e1" fill-opacity="0.42"/><circle cx="335.9" cy="307.5" r="4.5" fill="#0001fe" fill-opacity="0.42"/><circle cx="334.8" cy="312.8" r="4.5" fill="#0023d2" fill-opacity="0.42"/><circle cx="340.2" cy="295.7" r="4.5" fill="#0039b5" fill-opacity="0.42"/><circle cx="341.2" cy="294.3" r="4.5" fill="#003ab4" fill-opacity="0.42"/><circle cx="338.8" cy="303.6" r="4.5" fill="#002ec3" fill-opacity="0.42"/><circle cx="338.1" cy="308.6" r="4.5" fill="#001bdc" fill-opacity="0.42"/><circle cx="339.1" cy="306.8" r="4.5" fill="#0f00f1" fill-opacity="0.42"/><circle cx="341.1" cy="302.0" r="4.5" fill="#0011e9" fill-opacity="0.42"/><circle cx="339.5" cy="310.3" r="4.5" fill="#0200fd" fill-opacity="0.42"/><circle cx="340.1" cy="309.2" r="4.5" fill="#002ac8" fill-opacity="0.42"/><circle cx="341.9" cy="303.6" r="4.5" fill="#0024d1" fill-opacity="0.42"/><circle cx="343.8" cy="299.3" r="4.5" fill="#1800e9" fill-opacity="0.42"/><circle cx="341.5" cy="310.0" r="4.5" fill="#1a00e7" fill-opacity="0.42"/><circle cx="342.3" cy="309.2" r="4.5" fill="#0009f3" fill-opacity="0.42"/><circle cx="345.9" cy="296.7" r="4.5" fill="#0500fb" fill-opacity="0.42"/><circle cx="343.9" cy="307.8" r="4.5" fill="#0011e9" fill-opacity="0.42"/><circle cx="345.7" cy="301.6" r="4.5" fill="#000bf1" fill-opacity="0.42"/><circle cx="347.9" cy="295.2" r="4.5" fill="#0002fc" fill-opacity="0.42"/><circle cx="347.6" cy="298.0" r="4.5" fill="#1600ec" fill-opacity="0.42"/><circle cx="346.8" cy="302.8" r="4.5" fill="#000feb" fill-opacity="0.42"/><circle cx="347.3" cy="303.5" r="4.5" fill="#1600eb" fill-opacity="0.42"/><circle cx="346.1" cy="309.9" r="4.5" fill="#0c00f4" fill-opacity="0.42"/><circle cx="347.8" cy="304.8" r="4.5" fill="#000af2" fill-opacity="0.42"/><circle cx="346.4" cy="312.8" r="4.5" fill="#0a00f6" fill-opacity="0.42"/><circle cx="350.5" cy="299.4" r="4.5" fill="#1c00e6" fill-opacity="0.42"/><circle cx="350.4" cy="300.6" r="4.5" fill="#000dee" fill-opacity="0.42"/><circle cx="347.9" cy="312.2" r="4.5" fill="#3e00c8" fill-opacity="0.42"/><circle cx="352.3" cy="297.6" r="4.5" fill="#2c00d8" fill-opacity="0.42"/><circle cx="352.7" cy="298.4" r="4.5" fill="#3200d2" fill-opacity="0.42"/><circle cx="352.1" cy="301.5" r="4.5" fill="#3400d0" fill-opacity="0.42"/><circle cx="352.9" cy="301.8" r="4.5" fill="#1f00e3" fill-opacity="0.42"/><circle cx="352.0" cy="306.0" r="4.5" fill="#1f00e3" fill-opacity="0.42"/><circle cx="351.3" cy="299.7" r="4.5" fill="#4300c3" fill-opacity="0.5"/><circle cx="349.7" cy="297.0" r="4.5" fill="#4500c2" fill-opacity="0.5"/><circle cx="353.1" cy="298.1" r="4.5" fill="#4c00bb" fill-opacity="0.5"/><circle cx="354.2" cy="297.0" r="4.5" fill="#5200b5" fill-opacity="0.5"/><circle cx="356.0" cy="297.4" r="4.5" fill="#5700b1" fill-opacity="0.5"/><circle cx="357.9" cy="296.5" r="4.5" fill="#5f00aa" fill-opacity="0.5"/><circle cx="358.0" cy="294.5" r="4.5" fill="#6400a5" fill-opacity="0.5"/><circle cx="356.7" cy="292.0" r="4.5" fill="#6700a3" fill-opacity="0.5"/><circle cx="359.3" cy="292.9" r="4.5" fill="#6c009e" fill-opacity="0.5"/><circle cx="360.3" cy="291.0" r="4.5" fill="#740097" fill-opacity="0.5"/><circle cx="361.8" cy="291.3" r="4.5" fill="#780094" fill-opacity="0.5"/><circle cx="362.0" cy="290.0" r="4.5" fill="#7c0090" fill-opacity="0.5"/><circle cx="352.9" cy="312.1" r="4.5" fill="#4100c5" fill-opacity="0.55"/><circle cx="352.6" cy="314.1" r="4.5" fill="#4c00bb" fill-opacity="0.55"/><circle cx="352.9" cy="316.1" r="4.5" fill="#5a00af" fill-opacity="0.55"/><circle cx="355.0" cy="317.0" r="4.5" fill="#6600a4" fill-opacity="0.55"/><circle cx="355.9" cy="317.6" r="4.5" fill="#6c009e" fill-opacity="0.55"/><circle cx="355.7" cy="319.1" r="4.5" fill="#740097" fill-opacity="0.55"/><circle cx="358.1" cy="319.3" r="4.5" fill="#7b008f" fill-opacity="0.55"/><circle cx="356.0" cy="322.4" r="4.5" fill="#730088" fill-opacity="0.55"/><circle cx="357.0" cy="324.2" r="4.5" fill="#69007f" fill-opacity="0.55"/><circle cx="360.0" cy="323.2" r="4.5" fill="#67007d" fill-opacity="0.55"/><circle cx="359.8" cy="324.6" r="4.5" fill="#610078" fill-opacity="0.55"/><circle cx="359.4" cy="327.5" r="4.5" fill="#56006e" fill-opacity="0.55"/><circle cx="360.7" cy="327.7" r="4.5" fill="#53006b" fill-opacity="0.55"/><circle cx="361.6" cy="329.2" r="4.5" fill="#4a0064" fill-opacity="0.55"/><circle cx="362.0" cy="330.0" r="4.5" fill="#460060" fill-opacity="0.55"/><circle cx="355.0" cy="287.0" r="4.5" fill="#7c0090" fill-opacity="0.6"/><circle cx="360.0" cy="283.0" r="4.5" fill="#66007d" fill-opacity="0.6"/><circle cx="357.0" cy="290.0" r="4.5" fill="#5d00ac" fill-opacity="0.5"/><circle cx="365.0" cy="293.0" r="4.5" fill="#7c0090" fill-opacity="0.35"/><circle cx="365.0" cy="305.0" r="4.5" fill="#7c0090" fill-opacity="0.6"/><circle cx="372.0" cy="307.0" r="4.5" fill="#66007d" fill-opacity="0.4"/><circle cx="352.0" cy="298.0" r="4.5" fill="#3e00c8" fill-opacity="0.5"/><circle cx="355.0" cy="315.0" r="4.5" fill="#3e00c8" fill-opacity="0.55"/><circle cx="358.0" cy="322.0" r="4.5" fill="#66007d" fill-opacity="0.6"/><circle cx="362.0" cy="330.0" r="4.5" fill="#3b0056" fill-opacity="0.65"/><circle cx="368.0" cy="333.0" r="4.5" fill="#260043" fill-opacity="0.5"/><circle cx="366.0" cy="318.0" r="4.5" fill="#7c0090" fill-opacity="0.35"/><circle cx="300.0" cy="308.0" r="4.5" fill="#7c0090" fill-opacity="0.6"/><circle cx="377.0" cy="275.0" r="4.5" fill="#7c0090" fill-opacity="0.5"/><circle cx="322.0" cy="315.0" r="4.5" fill="#0016e2" fill-opacity="0.4"/><circle cx="329.0" cy="321.0" r="4.5" fill="#0016e2" fill-opacity="0.4"/><circle cx="335.0" cy="327.0" r="4.5" fill="#0000ff" fill-opacity="0.4"/><circle cx="340.0" cy="331.0" r="4.5" fill="#0000ff" fill-opacity="0.4"/><circle cx="297.0" cy="257.0" r="4.5" fill="#0016e2" fill-opacity="0.4"/><circle cx="310.0" cy="255.0" r="4.5" fill="#0000ff" fill-opacity="0.4"/><circle cx="312.0" cy="262.0" r="4.5" fill="#0000ff" fill-opacity="0.4"/><circle cx="316.0" cy="263.0" r="4.5" fill="#0016e2" fill-opacity="0.4"/><circle cx="332.0" cy="345.0" r="4.5" fill="#00b028" fill-opacity="0.33"/><circle cx="339.0" cy="352.0" r="4.5" fill="#00b028" fill-opacity="0.33"/><circle cx="346.0" cy="358.0" r="4.5" fill="#00a030" fill-opacity="0.33"/><circle cx="351.0" cy="364.0" r="4.5" fill="#00a030" fill-opacity="0.33"/><circle cx="357.0" cy="370.0" r="4.5" fill="#00963d" fill-opacity="0.33"/><circle cx="363.0" cy="376.0" r="4.5" fill="#008256" fill-opacity="0.33"/><circle cx="332.6" cy="318.7" r="4.5" fill="#0000ff" fill-opacity="0.42"/><circle cx="335.3" cy="318.5" r="4.5" fill="#0000ff" fill-opacity="0.42"/><circle cx="333.9" cy="321.3" r="4.5" fill="#0000ff" fill-opacity="0.42"/><circle cx="334.7" cy="322.7" r="4.5" fill="#0000ff" fill-opacity="0.42"/><circle cx="337.2" cy="322.7" r="4.5" fill="#0000ff" fill-opacity="0.42"/><circle cx="336.2" cy="324.3" r="4.5" fill="#0000ff" fill-opacity="0.42"/><circle cx="338.8" cy="324.4" r="4.5" fill="#0000ff" fill-opacity="0.42"/><circle cx="338.8" cy="325.6" r="4.5" fill="#0000ff" fill-opacity="0.42"/><circle cx="337.3" cy="328.1" r="4.5" fill="#0000ff" fill-opacity="0.42"/><circle cx="339.0" cy="328.0" r="4.5" fill="#0000ff" fill-opacity="0.42"/><circle cx="339.3" cy="329.5" r="4.5" fill="#0000ff" fill-opacity="0.42"/><circle cx="341.5" cy="329.7" r="4.5" fill="#0100fe" fill-opacity="0.42"/><circle cx="339.8" cy="332.0" r="4.5" fill="#0500fa" fill-opacity="0.42"/><circle cx="340.9" cy="333.4" r="4.5" fill="#0a00f6" fill-opacity="0.42"/><circle cx="340.1" cy="334.2" r="4.5" fill="#0b00f5" fill-opacity="0.42"/><circle cx="343.0" cy="335.1" r="4.5" fill="#1100f0" fill-opacity="0.42"/><circle cx="343.5" cy="335.9" r="4.5" fill="#1400ed" fill-opacity="0.42"/><circle cx="343.1" cy="336.7" r="4.5" fill="#1500ec" fill-opacity="0.42"/><circle cx="343.7" cy="338.0" r="4.5" fill="#1900e8" fill-opacity="0.42"/><circle cx="344.9" cy="338.9" r="4.5" fill="#1d00e5" fill-opacity="0.42"/><circle cx="343.6" cy="340.7" r="4.5" fill="#2300e0" fill-opacity="0.42"/><circle cx="344.2" cy="342.7" r="4.5" fill="#3300d1" fill-opacity="0.42"/><circle cx="344.6" cy="343.7" r="4.5" fill="#3c00c9" fill-opacity="0.42"/><circle cx="345.7" cy="343.9" r="4.5" fill="#4200c4" fill-opacity="0.42"/><circle cx="346.8" cy="344.7" r="4.5" fill="#4c00bb" fill-opacity="0.42"/><circle cx="346.2" cy="345.8" r="4.5" fill="#5300b5" fill-opacity="0.42"/><circle cx="347.6" cy="347.1" r="4.5" fill="#6100a8" fill-opacity="0.42"/><circle cx="348.9" cy="348.1" r="4.5" fill="#6e009d" fill-opacity="0.42"/><circle cx="348.4" cy="349.3" r="4.5" fill="#740097" fill-opacity="0.42"/><circle cx="349.8" cy="350.9" r="4.5" fill="#7c0090" fill-opacity="0.42"/><circle cx="349.3" cy="351.8" r="4.5" fill="#7c0090" fill-opacity="0.42"/><circle cx="350.7" cy="352.3" r="4.5" fill="#7c0090" fill-opacity="0.42"/><circle cx="352.6" cy="353.5" r="4.5" fill="#7c0090" fill-opacity="0.42"/><circle cx="352.7" cy="354.7" r="4.5" fill="#7c0090" fill-opacity="0.42"/><circle cx="353.9" cy="355.3" r="4.5" fill="#7c0090" fill-opacity="0.42"/><circle cx="354.0" cy="356.0" r="4.5" fill="#7c0090" fill-opacity="0.42"/><circle cx="355.0" cy="357.0" r="4.5" fill="#7c0090" fill-opacity="0.42"/><circle cx="355.4" cy="358.7" r="4.5" fill="#7c0090" fill-opacity="0.42"/><circle cx="356.0" cy="359.0" r="4.5" fill="#7c0090" fill-opacity="0.42"/><circle cx="353.5" cy="338.0" r="4.5" fill="#7c0090" fill-opacity="0.4"/><circle cx="363.0" cy="347.5" r="4.5" fill="#7c0090" fill-opacity="0.4"/><circle cx="371.0" cy="352.0" r="4.5" fill="#7c0090" fill-opacity="0.4"/><circle cx="379.0" cy="357.0" r="4.5" fill="#7c0090" fill-opacity="0.4"/><circle cx="373.5" cy="334.6" r="4.5" fill="#007863" fill-opacity="0.45"/><circle cx="385.0" cy="343.0" r="4.5" fill="#006e70" fill-opacity="0.45"/><circle cx="400.5" cy="359.0" r="4.5" fill="#0016e2" fill-opacity="0.45"/><circle cx="373.5" cy="390.0" r="4.5" fill="#006e70" fill-opacity="0.45"/><circle cx="383.0" cy="394.5" r="4.5" fill="#006e70" fill-opacity="0.45"/><circle cx="255.9" cy="365.8" r="4.5" fill="#1900e8" fill-opacity="0.42"/><circle cx="252.2" cy="366.3" r="4.5" fill="#3400d0" fill-opacity="0.42"/><circle cx="248.2" cy="356.4" r="4.5" fill="#5000b7" fill-opacity="0.42"/><circle cx="244.4" cy="362.9" r="4.5" fill="#750096" fill-opacity="0.42"/><circle cx="236.2" cy="366.7" r="4.5" fill="#1d00e5" fill-opacity="0.42"/><circle cx="236.6" cy="364.4" r="4.5" fill="#2300e0" fill-opacity="0.42"/><circle cx="258.1" cy="365.5" r="4.5" fill="#77008b" fill-opacity="0.42"/><circle cx="256.3" cy="362.0" r="4.5" fill="#6a00a0" fill-opacity="0.42"/><circle cx="238.2" cy="358.7" r="4.5" fill="#2500de" fill-opacity="0.42"/><circle cx="240.2" cy="357.9" r="4.5" fill="#6400a6" fill-opacity="0.42"/><circle cx="253.3" cy="363.1" r="4.5" fill="#1d00e5" fill-opacity="0.42"/><circle cx="246.8" cy="356.5" r="4.5" fill="#3300d1" fill-opacity="0.42"/><circle cx="248.0" cy="356.3" r="4.5" fill="#3400d1" fill-opacity="0.42"/><circle cx="245.5" cy="362.2" r="4.5" fill="#1700ea" fill-opacity="0.42"/><circle cx="259.4" cy="363.8" r="4.5" fill="#7c0090" fill-opacity="0.42"/><circle cx="232.9" cy="359.9" r="4.5" fill="#5200b5" fill-opacity="0.42"/><circle cx="244.1" cy="359.6" r="4.5" fill="#4600c1" fill-opacity="0.42"/><circle cx="239.1" cy="358.7" r="4.5" fill="#6000a9" fill-opacity="0.42"/><circle cx="239.7" cy="367.4" r="4.5" fill="#2900da" fill-opacity="0.42"/><circle cx="236.9" cy="362.3" r="4.5" fill="#5100b7" fill-opacity="0.42"/><circle cx="252.5" cy="363.3" r="4.5" fill="#6800a2" fill-opacity="0.42"/><circle cx="250.9" cy="366.8" r="4.5" fill="#720087" fill-opacity="0.42"/><circle cx="236.7" cy="357.6" r="4.5" fill="#6f009c" fill-opacity="0.42"/><circle cx="254.5" cy="361.0" r="4.5" fill="#4100c5" fill-opacity="0.42"/><circle cx="246.1" cy="360.7" r="4.5" fill="#4a00bd" fill-opacity="0.42"/><circle cx="244.6" cy="367.9" r="4.5" fill="#6a00a0" fill-opacity="0.42"/><circle cx="252.4" cy="357.6" r="4.5" fill="#6500a4" fill-opacity="0.42"/><circle cx="256.0" cy="365.1" r="4.5" fill="#77008c" fill-opacity="0.42"/><circle cx="238.7" cy="358.3" r="4.5" fill="#4f00b8" fill-opacity="0.42"/><circle cx="241.0" cy="363.8" r="4.5" fill="#2800db" fill-opacity="0.42"/><circle cx="248.8" cy="356.5" r="4.5" fill="#1400ed" fill-opacity="0.42"/><circle cx="236.4" cy="357.2" r="4.5" fill="#6000a9" fill-opacity="0.42"/><circle cx="251.8" cy="369.1" r="4.5" fill="#2600dd" fill-opacity="0.42"/><circle cx="236.5" cy="361.7" r="4.5" fill="#2400df" fill-opacity="0.42"/><circle cx="245.4" cy="365.4" r="4.5" fill="#2400df" fill-opacity="0.42"/><circle cx="256.9" cy="363.6" r="4.5" fill="#6200a7" fill-opacity="0.42"/><circle cx="245.9" cy="369.8" r="4.5" fill="#4400c2" fill-opacity="0.42"/><circle cx="233.0" cy="364.1" r="4.5" fill="#6000a9" fill-opacity="0.42"/><circle cx="234.2" cy="363.5" r="4.5" fill="#6b009f" fill-opacity="0.42"/><circle cx="244.7" cy="364.0" r="4.5" fill="#6a00a0" fill-opacity="0.42"/><circle cx="245.9" cy="355.8" r="4.5" fill="#1e00e4" fill-opacity="0.42"/><circle cx="245.8" cy="358.7" r="4.5" fill="#720099" fill-opacity="0.42"/><circle cx="237.9" cy="357.6" r="4.5" fill="#1900e9" fill-opacity="0.42"/><circle cx="238.1" cy="367.1" r="4.5" fill="#1d00e5" fill-opacity="0.42"/><circle cx="254.7" cy="363.2" r="4.5" fill="#790092" fill-opacity="0.42"/><circle cx="241.4" cy="359.2" r="4.5" fill="#1a00e8" fill-opacity="0.42"/><circle cx="252.7" cy="355.7" r="4.5" fill="#6600a3" fill-opacity="0.42"/><circle cx="249.2" cy="368.7" r="4.5" fill="#1100f0" fill-opacity="0.42"/><circle cx="249.7" cy="366.0" r="4.5" fill="#75008a" fill-opacity="0.42"/><circle cx="251.5" cy="362.7" r="4.5" fill="#6b00a0" fill-opacity="0.42"/><circle cx="246.6" cy="357.9" r="4.5" fill="#1900e9" fill-opacity="0.42"/><circle cx="254.4" cy="355.7" r="4.5" fill="#79008d" fill-opacity="0.42"/><circle cx="242.3" cy="361.1" r="4.5" fill="#6b009f" fill-opacity="0.42"/><circle cx="238.5" cy="356.1" r="4.5" fill="#6e009d" fill-opacity="0.42"/><circle cx="232.2" cy="361.9" r="4.5" fill="#4900be" fill-opacity="0.42"/><circle cx="235.5" cy="364.1" r="4.5" fill="#71009a" fill-opacity="0.42"/><circle cx="234.4" cy="357.9" r="4.5" fill="#3100d3" fill-opacity="0.42"/><circle cx="256.4" cy="357.5" r="4.5" fill="#3a00cb" fill-opacity="0.42"/><circle cx="256.7" cy="363.1" r="4.5" fill="#5c00ac" fill-opacity="0.42"/><circle cx="256.1" cy="360.5" r="4.5" fill="#6900a1" fill-opacity="0.42"/><circle cx="246.3" cy="358.7" r="4.5" fill="#6200a7" fill-opacity="0.42"/><circle cx="240.0" cy="363.4" r="4.5" fill="#3200d3" fill-opacity="0.42"/><circle cx="238.2" cy="367.2" r="4.5" fill="#5400b4" fill-opacity="0.42"/><circle cx="244.6" cy="363.7" r="4.5" fill="#71009a" fill-opacity="0.42"/><circle cx="246.3" cy="354.7" r="4.5" fill="#71009a" fill-opacity="0.42"/><circle cx="252.8" cy="363.6" r="4.5" fill="#4900be" fill-opacity="0.42"/><circle cx="242.3" cy="368.9" r="4.5" fill="#2900da" fill-opacity="0.42"/><circle cx="255.4" cy="362.5" r="4.5" fill="#1600ec" fill-opacity="0.42"/><circle cx="256.7" cy="363.1" r="4.5" fill="#5a00ae" fill-opacity="0.42"/><circle cx="242.4" cy="361.4" r="4.5" fill="#5500b3" fill-opacity="0.42"/><circle cx="238.4" cy="361.4" r="4.5" fill="#2b00d8" fill-opacity="0.42"/><circle cx="251.4" cy="366.6" r="4.5" fill="#3d00c8" fill-opacity="0.42"/><circle cx="236.1" cy="358.6" r="4.5" fill="#3200d2" fill-opacity="0.42"/><circle cx="240.4" cy="359.5" r="4.5" fill="#6c009e" fill-opacity="0.42"/><circle cx="249.1" cy="367.9" r="4.5" fill="#6b009f" fill-opacity="0.42"/><circle cx="249.1" cy="356.5" r="4.5" fill="#79008d" fill-opacity="0.42"/><circle cx="258.4" cy="361.4" r="4.5" fill="#3c00c9" fill-opacity="0.42"/><circle cx="244.9" cy="368.3" r="4.5" fill="#1f00e3" fill-opacity="0.42"/><circle cx="247.9" cy="364.2" r="4.5" fill="#6000a9" fill-opacity="0.42"/><circle cx="235.8" cy="367.0" r="4.5" fill="#740098" fill-opacity="0.42"/><circle cx="238.0" cy="361.1" r="4.5" fill="#3700ce" fill-opacity="0.42"/><circle cx="250.4" cy="362.9" r="4.5" fill="#7c0090" fill-opacity="0.42"/><circle cx="245.6" cy="362.7" r="4.5" fill="#730088" fill-opacity="0.42"/><circle cx="237.0" cy="366.8" r="4.5" fill="#4800bf" fill-opacity="0.42"/><circle cx="249.9" cy="361.6" r="4.5" fill="#4a00bd" fill-opacity="0.42"/><circle cx="244.7" cy="361.0" r="4.5" fill="#78008d" fill-opacity="0.42"/><circle cx="239.9" cy="367.6" r="4.5" fill="#1900e8" fill-opacity="0.42"/><circle cx="249.6" cy="363.1" r="4.5" fill="#71009a" fill-opacity="0.42"/><circle cx="258.5" cy="359.3" r="4.5" fill="#5100b6" fill-opacity="0.42"/><circle cx="256.4" cy="365.8" r="4.5" fill="#4e00b9" fill-opacity="0.42"/><circle cx="233.0" cy="383.0" r="4.5" fill="#0900f7" fill-opacity="0.42"/><circle cx="230.6" cy="378.6" r="4.5" fill="#0024d0" fill-opacity="0.42"/><circle cx="231.8" cy="379.6" r="4.5" fill="#3a00cb" fill-opacity="0.42"/><circle cx="234.6" cy="383.6" r="4.5" fill="#0020d5" fill-opacity="0.42"/><circle cx="235.9" cy="384.8" r="4.5" fill="#0017e1" fill-opacity="0.42"/><circle cx="234.6" cy="381.4" r="4.5" fill="#0007f6" fill-opacity="0.42"/><circle cx="232.5" cy="377.2" r="4.5" fill="#1c00e6" fill-opacity="0.42"/><circle cx="235.4" cy="381.2" r="4.5" fill="#2b00d8" fill-opacity="0.42"/><circle cx="234.7" cy="379.4" r="4.5" fill="#000af2" fill-opacity="0.42"/><circle cx="236.6" cy="380.8" r="4.5" fill="#0017e1" fill-opacity="0.42"/><circle cx="233.3" cy="374.9" r="4.5" fill="#0700f9" fill-opacity="0.42"/><circle cx="234.2" cy="375.9" r="4.5" fill="#0700f9" fill-opacity="0.42"/><circle cx="235.2" cy="376.3" r="4.5" fill="#1100f0" fill-opacity="0.42"/><circle cx="238.4" cy="380.8" r="4.5" fill="#0022d2" fill-opacity="0.42"/><circle cx="237.5" cy="378.0" r="4.5" fill="#0017e1" fill-opacity="0.42"/><circle cx="238.7" cy="379.6" r="4.5" fill="#001ed8" fill-opacity="0.42"/><circle cx="236.9" cy="375.2" r="4.5" fill="#0002fd" fill-opacity="0.42"/><circle cx="238.4" cy="377.5" r="4.5" fill="#4200c4" fill-opacity="0.42"/><circle cx="237.1" cy="374.4" r="4.5" fill="#0f00f1" fill-opacity="0.42"/><circle cx="237.4" cy="373.7" r="4.5" fill="#0011e8" fill-opacity="0.42"/><circle cx="238.4" cy="374.4" r="4.5" fill="#0022d3" fill-opacity="0.42"/><circle cx="242.8" cy="380.7" r="4.5" fill="#3100d3" fill-opacity="0.42"/><circle cx="239.1" cy="373.6" r="4.5" fill="#0008f4" fill-opacity="0.42"/><circle cx="241.9" cy="377.6" r="4.5" fill="#1c00e6" fill-opacity="0.42"/><circle cx="239.8" cy="373.3" r="4.5" fill="#000eed" fill-opacity="0.42"/><circle cx="238.9" cy="371.3" r="4.5" fill="#1700ea" fill-opacity="0.42"/><circle cx="244.6" cy="379.9" r="4.5" fill="#4700c0" fill-opacity="0.42"/><circle cx="245.7" cy="380.6" r="4.5" fill="#1e00e4" fill-opacity="0.42"/><circle cx="242.1" cy="374.1" r="4.5" fill="#0002fd" fill-opacity="0.42"/><circle cx="240.5" cy="370.2" r="4.5" fill="#000cf0" fill-opacity="0.42"/><circle cx="243.4" cy="374.3" r="4.5" fill="#0d00f3" fill-opacity="0.42"/><circle cx="247.1" cy="379.4" r="4.5" fill="#4000c5" fill-opacity="0.42"/><circle cx="246.8" cy="377.7" r="4.5" fill="#0001fe" fill-opacity="0.42"/><circle cx="247.1" cy="377.2" r="4.5" fill="#0000fe" fill-opacity="0.42"/><circle cx="244.5" cy="372.0" r="4.5" fill="#0010ea" fill-opacity="0.42"/><circle cx="243.1" cy="369.1" r="4.5" fill="#2e00d6" fill-opacity="0.42"/><circle cx="246.1" cy="373.4" r="4.5" fill="#3900cc" fill-opacity="0.42"/><circle cx="249.6" cy="377.9" r="4.5" fill="#3000d4" fill-opacity="0.42"/><circle cx="248.8" cy="375.7" r="4.5" fill="#2c00d8" fill-opacity="0.42"/><circle cx="248.3" cy="373.7" r="4.5" fill="#2900da" fill-opacity="0.42"/><circle cx="248.1" cy="372.8" r="4.5" fill="#4c00bb" fill-opacity="0.42"/><circle cx="245.8" cy="368.4" r="4.5" fill="#1600eb" fill-opacity="0.42"/><circle cx="250.1" cy="374.6" r="4.5" fill="#2700dc" fill-opacity="0.42"/><circle cx="246.6" cy="368.2" r="4.5" fill="#2500de" fill-opacity="0.42"/><circle cx="250.7" cy="373.7" r="4.5" fill="#1400ee" fill-opacity="0.42"/><circle cx="251.0" cy="373.7" r="4.5" fill="#5200b5" fill-opacity="0.42"/><circle cx="250.9" cy="372.5" r="4.5" fill="#2600dd" fill-opacity="0.42"/><circle cx="250.6" cy="370.8" r="4.5" fill="#1a00e8" fill-opacity="0.42"/><circle cx="254.0" cy="375.1" r="4.5" fill="#1200ef" fill-opacity="0.42"/><circle cx="252.7" cy="372.3" r="4.5" fill="#4000c6" fill-opacity="0.42"/><circle cx="248.5" cy="364.3" r="4.5" fill="#0006f7" fill-opacity="0.42"/><circle cx="254.5" cy="374.0" r="4.5" fill="#5000b8" fill-opacity="0.42"/><circle cx="252.2" cy="369.4" r="4.5" fill="#4c00bb" fill-opacity="0.42"/><circle cx="253.6" cy="370.4" r="4.5" fill="#4d00ba" fill-opacity="0.42"/><circle cx="250.1" cy="363.5" r="4.5" fill="#5700b1" fill-opacity="0.42"/><circle cx="254.5" cy="370.4" r="4.5" fill="#3c00c9" fill-opacity="0.42"/><circle cx="252.4" cy="366.0" r="4.5" fill="#5000b8" fill-opacity="0.42"/><circle cx="258.5" cy="374.7" r="4.5" fill="#000eed" fill-opacity="0.42"/><circle cx="256.8" cy="371.4" r="4.5" fill="#5700b1" fill-opacity="0.42"/><circle cx="254.0" cy="364.6" r="4.5" fill="#000ded" fill-opacity="0.42"/><circle cx="254.1" cy="364.2" r="4.5" fill="#2700dc" fill-opacity="0.42"/><circle cx="253.9" cy="362.4" r="4.5" fill="#000feb" fill-opacity="0.42"/><circle cx="258.5" cy="372.1" r="4.5" fill="#000dee" fill-opacity="0.42"/><circle cx="259.8" cy="374.5" r="4.5" fill="#0b00f5" fill-opacity="0.42"/><circle cx="259.2" cy="371.7" r="4.5" fill="#0017e2" fill-opacity="0.42"/><circle cx="259.6" cy="371.0" r="4.5" fill="#3800cd" fill-opacity="0.42"/><circle cx="258.1" cy="366.6" r="4.5" fill="#5100b7" fill-opacity="0.42"/><circle cx="255.9" cy="360.3" r="4.5" fill="#2b00d8" fill-opacity="0.42"/><circle cx="257.1" cy="361.0" r="4.5" fill="#000af2" fill-opacity="0.42"/><circle cx="261.2" cy="370.6" r="4.5" fill="#2000e2" fill-opacity="0.42"/><circle cx="257.2" cy="359.2" r="4.5" fill="#000af2" fill-opacity="0.42"/><circle cx="261.7" cy="369.3" r="4.5" fill="#0014e5" fill-opacity="0.42"/><circle cx="259.4" cy="362.9" r="4.5" fill="#0c00f4" fill-opacity="0.42"/><circle cx="259.1" cy="360.5" r="4.5" fill="#0016e2" fill-opacity="0.42"/><circle cx="264.5" cy="372.4" r="4.5" fill="#2500de" fill-opacity="0.42"/><circle cx="259.9" cy="359.3" r="4.5" fill="#2200e0" fill-opacity="0.42"/><circle cx="264.5" cy="370.4" r="4.5" fill="#2000e3" fill-opacity="0.42"/><circle cx="265.5" cy="371.3" r="4.5" fill="#4b00bc" fill-opacity="0.42"/><circle cx="262.8" cy="363.8" r="4.5" fill="#0017e1" fill-opacity="0.42"/><circle cx="262.0" cy="360.2" r="4.5" fill="#2a00d9" fill-opacity="0.42"/><circle cx="261.0" cy="356.6" r="4.5" fill="#4100c5" fill-opacity="0.42"/><circle cx="263.0" cy="360.6" r="4.5" fill="#1300ee" fill-opacity="0.42"/><circle cx="266.5" cy="368.4" r="4.5" fill="#2b00d9" fill-opacity="0.42"/><circle cx="266.0" cy="365.8" r="4.5" fill="#0016e2" fill-opacity="0.42"/><circle cx="263.3" cy="357.2" r="4.5" fill="#0009f3" fill-opacity="0.42"/><circle cx="266.5" cy="364.2" r="4.5" fill="#2100e2" fill-opacity="0.42"/><circle cx="265.8" cy="360.6" r="4.5" fill="#0004f9" fill-opacity="0.42"/><circle cx="268.5" cy="367.0" r="4.5" fill="#0003fb" fill-opacity="0.42"/><circle cx="265.5" cy="358.1" r="4.5" fill="#0200fd" fill-opacity="0.42"/><circle cx="267.7" cy="361.8" r="4.5" fill="#3200d3" fill-opacity="0.42"/><circle cx="268.9" cy="364.0" r="4.5" fill="#000eec" fill-opacity="0.42"/><circle cx="270.2" cy="366.1" r="4.5" fill="#001ed8" fill-opacity="0.42"/><circle cx="267.6" cy="358.3" r="4.5" fill="#000cef" fill-opacity="0.42"/><circle cx="267.7" cy="357.3" r="4.5" fill="#1200ef" fill-opacity="0.42"/><circle cx="268.2" cy="357.8" r="4.5" fill="#000feb" fill-opacity="0.42"/><circle cx="272.6" cy="367.3" r="4.5" fill="#1e00e4" fill-opacity="0.42"/><circle cx="268.7" cy="355.5" r="4.5" fill="#0017e1" fill-opacity="0.42"/><circle cx="271.4" cy="361.6" r="4.5" fill="#2f00d5" fill-opacity="0.42"/><circle cx="274.3" cy="367.1" r="4.5" fill="#0027cc" fill-opacity="0.42"/><circle cx="271.0" cy="358.5" r="4.5" fill="#0003fb" fill-opacity="0.42"/><circle cx="271.5" cy="358.6" r="4.5" fill="#001ed8" fill-opacity="0.42"/><circle cx="271.3" cy="355.9" r="4.5" fill="#000eed" fill-opacity="0.42"/><circle cx="275.7" cy="366.4" r="4.5" fill="#0020d5" fill-opacity="0.42"/><circle cx="272.1" cy="355.8" r="4.5" fill="#0015e4" fill-opacity="0.42"/><circle cx="276.0" cy="363.7" r="4.5" fill="#1e00e4" fill-opacity="0.42"/><circle cx="277.9" cy="368.1" r="4.5" fill="#3a00cb" fill-opacity="0.42"/><circle cx="273.9" cy="355.2" r="4.5" fill="#0028cb" fill-opacity="0.42"/><circle cx="275.6" cy="359.6" r="4.5" fill="#2c00d8" fill-opacity="0.42"/><circle cx="277.9" cy="364.9" r="4.5" fill="#0018df" fill-opacity="0.42"/><circle cx="277.3" cy="361.4" r="4.5" fill="#002bc7" fill-opacity="0.42"/><circle cx="279.1" cy="367.1" r="4.5" fill="#2100e1" fill-opacity="0.42"/><circle cx="278.3" cy="361.9" r="4.5" fill="#002dc4" fill-opacity="0.42"/><circle cx="277.1" cy="355.8" r="4.5" fill="#1c00e6" fill-opacity="0.42"/><circle cx="278.2" cy="358.8" r="4.5" fill="#0002fc" fill-opacity="0.42"/><circle cx="280.5" cy="364.2" r="4.5" fill="#000eec" fill-opacity="0.42"/><circle cx="277.8" cy="353.6" r="4.5" fill="#0013e7" fill-opacity="0.42"/><circle cx="277.4" cy="351.5" r="4.5" fill="#000fec" fill-opacity="0.42"/><circle cx="282.0" cy="365.9" r="4.5" fill="#1f00e4" fill-opacity="0.42"/><circle cx="278.5" cy="351.6" r="4.5" fill="#001cdb" fill-opacity="0.42"/><circle cx="280.1" cy="355.1" r="4.5" fill="#002bc7" fill-opacity="0.42"/><circle cx="281.6" cy="359.3" r="4.5" fill="#0029ca" fill-opacity="0.42"/><circle cx="282.0" cy="358.9" r="4.5" fill="#1200ef" fill-opacity="0.42"/><circle cx="284.3" cy="365.2" r="4.5" fill="#001fd7" fill-opacity="0.42"/><circle cx="280.9" cy="351.6" r="4.5" fill="#2500de" fill-opacity="0.42"/><circle cx="281.7" cy="352.9" r="4.5" fill="#1800e9" fill-opacity="0.42"/><circle cx="282.1" cy="352.1" r="4.5" fill="#2000e3" fill-opacity="0.42"/><circle cx="283.5" cy="355.3" r="4.5" fill="#1300ee" fill-opacity="0.42"/><circle cx="284.7" cy="358.2" r="4.5" fill="#0016e2" fill-opacity="0.42"/><circle cx="286.0" cy="361.6" r="4.5" fill="#1100f0" fill-opacity="0.42"/><circle cx="283.7" cy="351.0" r="4.5" fill="#0007f5" fill-opacity="0.42"/><circle cx="284.6" cy="353.0" r="4.5" fill="#0038b6" fill-opacity="0.42"/><circle cx="287.4" cy="360.5" r="4.5" fill="#0600fa" fill-opacity="0.42"/><circle cx="286.2" cy="355.8" r="4.5" fill="#1200ef" fill-opacity="0.42"/><circle cx="287.7" cy="359.5" r="4.5" fill="#0400fb" fill-opacity="0.42"/><circle cx="289.1" cy="362.3" r="4.5" fill="#0004f9" fill-opacity="0.42"/><circle cx="286.9" cy="352.2" r="4.5" fill="#0019df" fill-opacity="0.42"/><circle cx="288.2" cy="356.1" r="4.5" fill="#0700f8" fill-opacity="0.42"/><circle cx="290.5" cy="361.0" r="4.5" fill="#1200ef" fill-opacity="0.42"/><circle cx="290.2" cy="358.7" r="4.5" fill="#0300fc" fill-opacity="0.42"/><circle cx="289.1" cy="354.6" r="4.5" fill="#0014e5" fill-opacity="0.42"/><circle cx="291.3" cy="360.5" r="4.5" fill="#001ed7" fill-opacity="0.42"/><circle cx="288.9" cy="350.4" r="4.5" fill="#0011e9" fill-opacity="0.42"/><circle cx="292.4" cy="360.7" r="4.5" fill="#0009f4" fill-opacity="0.42"/><circle cx="290.1" cy="351.2" r="4.5" fill="#003db0" fill-opacity="0.42"/><circle cx="292.2" cy="356.3" r="4.5" fill="#0016e2" fill-opacity="0.42"/><circle cx="292.0" cy="355.0" r="4.5" fill="#0016e2" fill-opacity="0.42"/><circle cx="268.6" cy="369.8" r="4.5" fill="#590071" fill-opacity="0.45"/><circle cx="279.5" cy="371.0" r="4.5" fill="#630079" fill-opacity="0.45"/><circle cx="272.7" cy="373.2" r="4.5" fill="#740098" fill-opacity="0.45"/><circle cx="272.5" cy="375.0" r="4.5" fill="#4a00bd" fill-opacity="0.45"/><circle cx="267.1" cy="368.3" r="4.5" fill="#6900a1" fill-opacity="0.45"/><circle cx="274.2" cy="366.5" r="4.5" fill="#710087" fill-opacity="0.45"/><circle cx="279.5" cy="372.0" r="4.5" fill="#77008b" fill-opacity="0.45"/><circle cx="269.8" cy="367.4" r="4.5" fill="#4300c3" fill-opacity="0.45"/><circle cx="266.0" cy="368.6" r="4.5" fill="#6000a9" fill-opacity="0.45"/><circle cx="277.0" cy="374.6" r="4.5" fill="#5b00ae" fill-opacity="0.45"/><circle cx="277.2" cy="371.0" r="4.5" fill="#710086" fill-opacity="0.45"/><circle cx="281.5" cy="366.4" r="4.5" fill="#740089" fill-opacity="0.45"/><circle cx="281.5" cy="366.1" r="4.5" fill="#5f00aa" fill-opacity="0.45"/><circle cx="267.8" cy="374.0" r="4.5" fill="#56006e" fill-opacity="0.45"/><circle cx="270.0" cy="366.3" r="4.5" fill="#6800a1" fill-opacity="0.45"/><circle cx="279.8" cy="371.9" r="4.5" fill="#5b00ae" fill-opacity="0.45"/><circle cx="269.5" cy="366.4" r="4.5" fill="#710086" fill-opacity="0.45"/><circle cx="275.2" cy="369.9" r="4.5" fill="#5800b1" fill-opacity="0.45"/><circle cx="279.9" cy="372.1" r="4.5" fill="#580070" fill-opacity="0.45"/><circle cx="266.2" cy="371.1" r="4.5" fill="#5500b3" fill-opacity="0.45"/><circle cx="269.5" cy="374.2" r="4.5" fill="#6200a7" fill-opacity="0.45"/><circle cx="274.0" cy="365.4" r="4.5" fill="#6f0084" fill-opacity="0.45"/><circle cx="280.9" cy="370.7" r="4.5" fill="#52006b" fill-opacity="0.45"/><circle cx="271.3" cy="372.2" r="4.5" fill="#51006a" fill-opacity="0.45"/><circle cx="268.0" cy="367.3" r="4.5" fill="#7a0092" fill-opacity="0.45"/><circle cx="270.5" cy="367.4" r="4.5" fill="#6000a9" fill-opacity="0.45"/><circle cx="273.8" cy="372.8" r="4.5" fill="#6b0081" fill-opacity="0.45"/><circle cx="277.9" cy="371.1" r="4.5" fill="#7b008f" fill-opacity="0.45"/><circle cx="283.8" cy="369.7" r="4.5" fill="#6d0083" fill-opacity="0.45"/><circle cx="274.8" cy="367.3" r="4.5" fill="#7b008f" fill-opacity="0.45"/><circle cx="267.0" cy="378.0" r="4.5" fill="#100030" fill-opacity="0.65"/><circle cx="280.0" cy="372.0" r="4.5" fill="#100030" fill-opacity="0.6"/><circle cx="272.0" cy="365.0" r="4.5" fill="#66007d" fill-opacity="0.5"/><circle cx="238.0" cy="360.0" r="4.5" fill="#7c0090" fill-opacity="0.5"/><circle cx="232.0" cy="357.0" r="4.5" fill="#5d00ac" fill-opacity="0.45"/><circle cx="300.0" cy="357.0" r="4.5" fill="#0016e2" fill-opacity="0.33"/><circle cx="303.0" cy="360.5" r="4.5" fill="#0016e2" fill-opacity="0.33"/><circle cx="306.0" cy="364.0" r="4.5" fill="#0016e2" fill-opacity="0.33"/><circle cx="308.0" cy="367.0" r="4.5" fill="#000bf1" fill-opacity="0.33"/><circle cx="310.0" cy="370.0" r="4.5" fill="#0000ff" fill-opacity="0.33"/><circle cx="312.5" cy="373.5" r="4.5" fill="#0000ff" fill-opacity="0.33"/><circle cx="315.0" cy="377.0" r="4.5" fill="#0000ff" fill-opacity="0.33"/><circle cx="318.5" cy="378.5" r="4.5" fill="#1000f1" fill-opacity="0.33"/><circle cx="322.0" cy="380.0" r="4.5" fill="#1f00e3" fill-opacity="0.33"/><circle cx="325.0" cy="384.0" r="4.5" fill="#3e00c8" fill-opacity="0.33"/><circle cx="328.0" cy="388.0" r="4.5" fill="#5d00ac" fill-opacity="0.33"/><circle cx="290.6" cy="367.4" r="4.5" fill="#2d00d6" fill-opacity="0.42"/><circle cx="291.6" cy="369.2" r="4.5" fill="#3a00cb" fill-opacity="0.42"/><circle cx="293.5" cy="371.7" r="4.5" fill="#4d00ba" fill-opacity="0.42"/><circle cx="295.1" cy="372.9" r="4.5" fill="#5800b0" fill-opacity="0.42"/><circle cx="296.5" cy="375.8" r="4.5" fill="#6b009f" fill-opacity="0.42"/><circle cx="296.6" cy="377.2" r="4.5" fill="#730098" fill-opacity="0.42"/><circle cx="297.9" cy="379.6" r="4.5" fill="#7c0090" fill-opacity="0.42"/><circle cx="299.4" cy="381.1" r="4.5" fill="#7c0090" fill-opacity="0.42"/><circle cx="300.1" cy="383.3" r="4.5" fill="#7c0090" fill-opacity="0.42"/><circle cx="304.2" cy="386.7" r="4.5" fill="#7c0090" fill-opacity="0.42"/><circle cx="304.5" cy="388.0" r="4.5" fill="#7c0090" fill-opacity="0.42"/><circle cx="305.9" cy="392.1" r="4.5" fill="#51006a" fill-opacity="0.42"/><circle cx="307.0" cy="392.6" r="4.5" fill="#40005b" fill-opacity="0.42"/><circle cx="309.6" cy="396.4" r="4.5" fill="#250043" fill-opacity="0.42"/><circle cx="312.2" cy="397.4" r="4.5" fill="#43005d" fill-opacity="0.42"/><circle cx="314.3" cy="398.6" r="4.5" fill="#5c0074" fill-opacity="0.42"/><circle cx="316.3" cy="400.4" r="4.5" fill="#78008c" fill-opacity="0.42"/><circle cx="317.0" cy="400.0" r="4.5" fill="#7c0090" fill-opacity="0.42"/><circle cx="283.0" cy="380.0" r="4.5" fill="#0016e2" fill-opacity="0.33"/><circle cx="284.2" cy="383.3" r="4.5" fill="#0012e7" fill-opacity="0.33"/><circle cx="285.3" cy="386.7" r="4.5" fill="#000fec" fill-opacity="0.33"/><circle cx="286.5" cy="390.0" r="4.5" fill="#000bf1" fill-opacity="0.33"/><circle cx="287.7" cy="393.3" r="4.5" fill="#0007f5" fill-opacity="0.33"/><circle cx="288.8" cy="396.7" r="4.5" fill="#0004fa" fill-opacity="0.33"/><circle cx="290.0" cy="400.0" r="4.5" fill="#0000ff" fill-opacity="0.33"/><circle cx="291.4" cy="403.0" r="4.5" fill="#1300ee" fill-opacity="0.33"/><circle cx="292.8" cy="406.0" r="4.5" fill="#2500de" fill-opacity="0.33"/><circle cx="294.2" cy="409.0" r="4.5" fill="#3800cd" fill-opacity="0.33"/><circle cx="295.6" cy="412.0" r="4.5" fill="#4a00bc" fill-opacity="0.33"/><circle cx="297.0" cy="415.0" r="4.5" fill="#5d00ac" fill-opacity="0.33"/><circle cx="299.0" cy="417.3" r="4.5" fill="#6700a2" fill-opacity="0.33"/><circle cx="301.0" cy="419.7" r="4.5" fill="#720099" fill-opacity="0.33"/><circle cx="303.0" cy="422.0" r="4.5" fill="#7c0090" fill-opacity="0.33"/><circle cx="271.0" cy="392.0" r="4.5" fill="#006e70" fill-opacity="0.33"/><circle cx="278.0" cy="403.0" r="4.5" fill="#006e70" fill-opacity="0.33"/><circle cx="285.0" cy="412.0" r="4.5" fill="#00588d" fill-opacity="0.33"/><circle cx="290.0" cy="425.0" r="4.5" fill="#0016e2" fill-opacity="0.33"/><circle cx="292.0" cy="432.0" r="4.5" fill="#0016e2" fill-opacity="0.33"/><circle cx="302.0" cy="440.0" r="4.5" fill="#7c0090" fill-opacity="0.33"/><circle cx="300.0" cy="425.0" r="4.5" fill="#0000ff" fill-opacity="0.33"/><circle cx="256.9" cy="393.8" r="4.5" fill="#002ac9" fill-opacity="0.45"/><circle cx="259.4" cy="394.0" r="4.5" fill="#0027cc" fill-opacity="0.45"/><circle cx="259.9" cy="395.8" r="4.5" fill="#0024d1" fill-opacity="0.45"/><circle cx="261.3" cy="395.4" r="4.5" fill="#0023d1" fill-opacity="0.45"/><circle cx="263.1" cy="397.5" r="4.5" fill="#001ed8" fill-opacity="0.45"/><circle cx="262.0" cy="398.9" r="4.5" fill="#001cda" fill-opacity="0.45"/><circle cx="263.6" cy="400.6" r="4.5" fill="#0018e0" fill-opacity="0.45"/><circle cx="261.8" cy="402.3" r="4.5" fill="#0016e2" fill-opacity="0.45"/><circle cx="263.5" cy="402.7" r="4.5" fill="#0014e5" fill-opacity="0.45"/><circle cx="264.1" cy="404.7" r="4.5" fill="#0010ea" fill-opacity="0.45"/><circle cx="264.9" cy="405.9" r="4.5" fill="#000ded" fill-opacity="0.45"/><circle cx="267.1" cy="406.9" r="4.5" fill="#000af2" fill-opacity="0.45"/><circle cx="264.2" cy="409.3" r="4.5" fill="#0008f5" fill-opacity="0.45"/><circle cx="265.2" cy="411.5" r="4.5" fill="#0003fb" fill-opacity="0.45"/><circle cx="266.5" cy="411.7" r="4.5" fill="#0002fd" fill-opacity="0.45"/><circle cx="268.9" cy="413.2" r="4.5" fill="#0000ff" fill-opacity="0.45"/><circle cx="269.0" cy="414.5" r="4.5" fill="#0000ff" fill-opacity="0.45"/><circle cx="270.7" cy="414.9" r="4.5" fill="#0000ff" fill-opacity="0.45"/><circle cx="272.7" cy="415.8" r="4.5" fill="#0000ff" fill-opacity="0.45"/><circle cx="270.1" cy="418.6" r="4.5" fill="#0000ff" fill-opacity="0.45"/><circle cx="271.2" cy="420.1" r="4.5" fill="#0000ff" fill-opacity="0.45"/><circle cx="274.3" cy="420.5" r="4.5" fill="#0000ff" fill-opacity="0.45"/><circle cx="276.5" cy="419.8" r="4.5" fill="#0000ff" fill-opacity="0.45"/><circle cx="275.9" cy="422.3" r="4.5" fill="#0000ff" fill-opacity="0.45"/><circle cx="278.1" cy="422.7" r="4.5" fill="#0000ff" fill-opacity="0.45"/><circle cx="277.8" cy="425.2" r="4.5" fill="#0000ff" fill-opacity="0.45"/><circle cx="279.0" cy="425.9" r="4.5" fill="#0000ff" fill-opacity="0.45"/><circle cx="281.4" cy="426.1" r="4.5" fill="#0000ff" fill-opacity="0.45"/><circle cx="279.7" cy="428.5" r="4.5" fill="#0400fc" fill-opacity="0.45"/><circle cx="278.6" cy="431.2" r="4.5" fill="#1b00e7" fill-opacity="0.45"/><circle cx="280.9" cy="431.9" r="4.5" fill="#2900db" fill-opacity="0.45"/><circle cx="282.6" cy="433.3" r="4.5" fill="#3a00cb" fill-opacity="0.45"/><circle cx="282.6" cy="434.7" r="4.5" fill="#4700bf" fill-opacity="0.45"/><circle cx="280.4" cy="436.7" r="4.5" fill="#5600b2" fill-opacity="0.45"/><circle cx="283.0" cy="437.6" r="4.5" fill="#6400a5" fill-opacity="0.45"/><circle cx="282.6" cy="439.5" r="4.5" fill="#770095" fill-opacity="0.45"/><circle cx="283.6" cy="440.4" r="4.5" fill="#7c0090" fill-opacity="0.45"/><circle cx="284.6" cy="441.8" r="4.5" fill="#7c0090" fill-opacity="0.45"/><circle cx="285.5" cy="442.5" r="4.5" fill="#7c0090" fill-opacity="0.45"/><circle cx="284.6" cy="445.7" r="4.5" fill="#7c0090" fill-opacity="0.45"/><circle cx="285.9" cy="446.3" r="4.5" fill="#7c0090" fill-opacity="0.45"/><circle cx="286.4" cy="447.0" r="4.5" fill="#7c0090" fill-opacity="0.45"/><circle cx="286.1" cy="449.4" r="4.5" fill="#7c0090" fill-opacity="0.45"/><circle cx="287.6" cy="450.4" r="4.5" fill="#7c0090" fill-opacity="0.45"/><circle cx="288.0" cy="452.5" r="4.5" fill="#7c0090" fill-opacity="0.45"/><circle cx="289.0" cy="453.7" r="4.5" fill="#7c0090" fill-opacity="0.45"/><circle cx="290.0" cy="454.6" r="4.5" fill="#7c0090" fill-opacity="0.45"/><circle cx="290.0" cy="455.0" r="4.5" fill="#7c0090" fill-opacity="0.45"/><circle cx="275.0" cy="440.0" r="4.5" fill="#5d00ac" fill-opacity="0.38"/><circle cx="276.8" cy="442.5" r="4.5" fill="#6500a5" fill-opacity="0.38"/><circle cx="278.5" cy="445.0" r="4.5" fill="#6c009e" fill-opacity="0.38"/><circle cx="280.2" cy="447.5" r="4.5" fill="#740097" fill-opacity="0.38"/><circle cx="282.0" cy="450.0" r="4.5" fill="#7c0090" fill-opacity="0.38"/><circle cx="284.0" cy="452.7" r="4.5" fill="#7c0090" fill-opacity="0.38"/><circle cx="286.0" cy="455.3" r="4.5" fill="#7c0090" fill-opacity="0.38"/><circle cx="288.0" cy="458.0" r="4.5" fill="#7c0090" fill-opacity="0.38"/><circle cx="240.1" cy="376.0" r="4.5" fill="#0000ff" fill-opacity="0.48"/><circle cx="237.0" cy="376.4" r="4.5" fill="#0000ff" fill-opacity="0.48"/><circle cx="236.3" cy="378.1" r="4.5" fill="#0000ff" fill-opacity="0.48"/><circle cx="235.5" cy="379.6" r="4.5" fill="#0000ff" fill-opacity="0.48"/><circle cx="232.1" cy="378.7" r="4.5" fill="#0000ff" fill-opacity="0.48"/><circle cx="232.2" cy="381.8" r="4.5" fill="#0000ff" fill-opacity="0.48"/><circle cx="230.9" cy="382.1" r="4.5" fill="#0000ff" fill-opacity="0.48"/><circle cx="229.0" cy="382.6" r="4.5" fill="#0b00f5" fill-opacity="0.48"/><circle cx="227.5" cy="383.4" r="4.5" fill="#1b00e7" fill-opacity="0.48"/><circle cx="225.6" cy="384.5" r="4.5" fill="#3000d4" fill-opacity="0.48"/><circle cx="224.7" cy="385.5" r="4.5" fill="#3d00c8" fill-opacity="0.48"/><circle cx="224.3" cy="386.8" r="4.5" fill="#4800be" fill-opacity="0.48"/><circle cx="221.4" cy="386.5" r="4.5" fill="#5d00ac" fill-opacity="0.48"/><circle cx="220.8" cy="389.5" r="4.5" fill="#730098" fill-opacity="0.48"/><circle cx="220.5" cy="390.9" r="4.5" fill="#7a008e" fill-opacity="0.48"/><circle cx="218.7" cy="392.1" r="4.5" fill="#6a0080" fill-opacity="0.48"/><circle cx="216.5" cy="393.8" r="4.5" fill="#55006d" fill-opacity="0.48"/><circle cx="215.0" cy="393.1" r="4.5" fill="#500069" fill-opacity="0.48"/><circle cx="215.0" cy="396.7" r="4.5" fill="#3d0058" fill-opacity="0.48"/><circle cx="212.5" cy="395.8" r="4.5" fill="#340050" fill-opacity="0.48"/><circle cx="212.2" cy="399.3" r="4.5" fill="#20003e" fill-opacity="0.48"/><circle cx="210.2" cy="400.2" r="4.5" fill="#100030" fill-opacity="0.48"/><circle cx="210.0" cy="400.0" r="4.5" fill="#100030" fill-opacity="0.48"/><circle cx="232.0" cy="388.0" r="4.5" fill="#006e70" fill-opacity="0.33"/><circle cx="228.0" cy="395.0" r="4.5" fill="#006e70" fill-opacity="0.33"/><circle cx="225.0" cy="402.0" r="4.5" fill="#006e70" fill-opacity="0.33"/><circle cx="222.0" cy="410.0" r="4.5" fill="#00588d" fill-opacity="0.33"/><circle cx="218.0" cy="416.0" r="4.5" fill="#0042a9" fill-opacity="0.33"/><circle cx="238.0" cy="395.0" r="4.5" fill="#00588d" fill-opacity="0.33"/><circle cx="235.0" cy="403.0" r="4.5" fill="#006e70" fill-opacity="0.33"/><circle cx="217.1" cy="420.6" r="4.5" fill="#0016e3" fill-opacity="0.42"/><circle cx="216.2" cy="422.2" r="4.5" fill="#0014e5" fill-opacity="0.42"/><circle cx="215.6" cy="424.0" r="4.5" fill="#0012e8" fill-opacity="0.42"/><circle cx="213.5" cy="424.8" r="4.5" fill="#0010ea" fill-opacity="0.42"/><circle cx="213.7" cy="426.7" r="4.5" fill="#000eec" fill-opacity="0.42"/><circle cx="212.8" cy="427.5" r="4.5" fill="#000dee" fill-opacity="0.42"/><circle cx="211.9" cy="429.4" r="4.5" fill="#000bf1" fill-opacity="0.42"/><circle cx="210.1" cy="430.0" r="4.5" fill="#000af2" fill-opacity="0.42"/><circle cx="209.7" cy="431.4" r="4.5" fill="#0008f4" fill-opacity="0.42"/><circle cx="207.5" cy="432.7" r="4.5" fill="#0006f7" fill-opacity="0.42"/><circle cx="208.1" cy="436.0" r="4.5" fill="#0003fa" fill-opacity="0.42"/><circle cx="206.6" cy="436.4" r="4.5" fill="#0002fc" fill-opacity="0.42"/><circle cx="204.2" cy="436.5" r="4.5" fill="#0001fe" fill-opacity="0.42"/><circle cx="204.0" cy="438.2" r="4.5" fill="#0600fa" fill-opacity="0.42"/><circle cx="202.6" cy="439.6" r="4.5" fill="#1700ea" fill-opacity="0.42"/><circle cx="202.3" cy="441.3" r="4.5" fill="#2500de" fill-opacity="0.42"/><circle cx="201.2" cy="442.0" r="4.5" fill="#3000d4" fill-opacity="0.42"/><circle cx="201.4" cy="445.7" r="4.5" fill="#4c00bb" fill-opacity="0.42"/><circle cx="200.6" cy="445.6" r="4.5" fill="#4e00b9" fill-opacity="0.42"/><circle cx="199.5" cy="447.9" r="4.5" fill="#6500a5" fill-opacity="0.42"/><circle cx="198.0" cy="448.9" r="4.5" fill="#730098" fill-opacity="0.42"/><circle cx="197.9" cy="450.7" r="4.5" fill="#79008d" fill-opacity="0.42"/><circle cx="196.0" cy="451.4" r="4.5" fill="#6e0083" fill-opacity="0.42"/><circle cx="195.0" cy="452.0" r="4.5" fill="#66007d" fill-opacity="0.42"/><circle cx="232.0" cy="425.0" r="4.5" fill="#0016e2" fill-opacity="0.33"/><circle cx="230.5" cy="427.5" r="4.5" fill="#0013e6" fill-opacity="0.33"/><circle cx="229.0" cy="430.0" r="4.5" fill="#0010ea" fill-opacity="0.33"/><circle cx="227.5" cy="432.5" r="4.5" fill="#000eed" fill-opacity="0.33"/><circle cx="226.0" cy="435.0" r="4.5" fill="#000bf1" fill-opacity="0.33"/><circle cx="224.5" cy="437.5" r="4.5" fill="#0008f4" fill-opacity="0.33"/><circle cx="223.0" cy="440.0" r="4.5" fill="#0006f8" fill-opacity="0.33"/><circle cx="221.5" cy="442.5" r="4.5" fill="#0003fb" fill-opacity="0.33"/><circle cx="220.0" cy="445.0" r="4.5" fill="#0000ff" fill-opacity="0.33"/><circle cx="218.7" cy="447.5" r="4.5" fill="#1000f1" fill-opacity="0.33"/><circle cx="217.3" cy="450.0" r="4.5" fill="#1f00e3" fill-opacity="0.33"/><circle cx="216.0" cy="452.5" r="4.5" fill="#2e00d5" fill-opacity="0.33"/><circle cx="214.7" cy="455.0" r="4.5" fill="#3e00c8" fill-opacity="0.33"/><circle cx="213.3" cy="457.5" r="4.5" fill="#4e00ba" fill-opacity="0.33"/><circle cx="212.0" cy="460.0" r="4.5" fill="#5d00ac" fill-opacity="0.33"/><circle cx="237.0" cy="440.0" r="4.5" fill="#1f00e3" fill-opacity="0.42"/><circle cx="235.9" cy="441.9" r="4.5" fill="#2b00d9" fill-opacity="0.42"/><circle cx="234.8" cy="443.8" r="4.5" fill="#3600ce" fill-opacity="0.42"/><circle cx="233.6" cy="445.6" r="4.5" fill="#4200c4" fill-opacity="0.42"/><circle cx="232.5" cy="447.5" r="4.5" fill="#4e00ba" fill-opacity="0.42"/><circle cx="231.4" cy="449.4" r="4.5" fill="#5900af" fill-opacity="0.42"/><circle cx="230.2" cy="451.2" r="4.5" fill="#6500a5" fill-opacity="0.42"/><circle cx="229.1" cy="453.1" r="4.5" fill="#70009a" fill-opacity="0.42"/><circle cx="228.0" cy="455.0" r="4.5" fill="#7c0090" fill-opacity="0.42"/><circle cx="227.8" cy="457.2" r="4.5" fill="#730088" fill-opacity="0.42"/><circle cx="227.7" cy="459.3" r="4.5" fill="#6a0080" fill-opacity="0.42"/><circle cx="227.5" cy="461.5" r="4.5" fill="#610078" fill-opacity="0.42"/><circle cx="227.3" cy="463.7" r="4.5" fill="#580070" fill-opacity="0.42"/><circle cx="227.2" cy="465.8" r="4.5" fill="#4f0068" fill-opacity="0.42"/><circle cx="227.0" cy="468.0" r="4.5" fill="#460060" fill-opacity="0.42"/><circle cx="251.5" cy="372.7" r="4.5" fill="#007863" fill-opacity="0.45"/><circle cx="248.7" cy="374.2" r="4.5" fill="#007764" fill-opacity="0.45"/><circle cx="250.4" cy="374.9" r="4.5" fill="#007765" fill-opacity="0.45"/><circle cx="246.5" cy="375.5" r="4.5" fill="#007765" fill-opacity="0.45"/><circle cx="251.5" cy="377.6" r="4.5" fill="#007666" fill-opacity="0.45"/><circle cx="249.2" cy="378.2" r="4.5" fill="#007666" fill-opacity="0.45"/><circle cx="248.9" cy="379.8" r="4.5" fill="#007567" fill-opacity="0.45"/><circle cx="249.7" cy="380.3" r="4.5" fill="#007567" fill-opacity="0.45"/><circle cx="251.2" cy="381.7" r="4.5" fill="#007468" fill-opacity="0.45"/><circle cx="253.0" cy="382.9" r="4.5" fill="#007468" fill-opacity="0.45"/><circle cx="245.9" cy="383.2" r="4.5" fill="#007469" fill-opacity="0.45"/><circle cx="248.6" cy="384.7" r="4.5" fill="#007369" fill-opacity="0.45"/><circle cx="250.5" cy="386.5" r="4.5" fill="#00726a" fill-opacity="0.45"/><circle cx="252.4" cy="387.0" r="4.5" fill="#00726a" fill-opacity="0.45"/><circle cx="250.6" cy="388.7" r="4.5" fill="#00726b" fill-opacity="0.45"/><circle cx="248.6" cy="389.4" r="4.5" fill="#00716c" fill-opacity="0.45"/><circle cx="247.4" cy="390.6" r="4.5" fill="#00716c" fill-opacity="0.45"/><circle cx="247.9" cy="391.5" r="4.5" fill="#00706d" fill-opacity="0.45"/><circle cx="248.5" cy="393.3" r="4.5" fill="#00706e" fill-opacity="0.45"/><circle cx="249.0" cy="394.6" r="4.5" fill="#006f6e" fill-opacity="0.45"/><circle cx="247.5" cy="395.7" r="4.5" fill="#006f6f" fill-opacity="0.45"/><circle cx="247.3" cy="396.6" r="4.5" fill="#006f6f" fill-opacity="0.45"/><circle cx="249.9" cy="397.8" r="4.5" fill="#006e70" fill-opacity="0.45"/><circle cx="246.3" cy="397.7" r="4.5" fill="#006e70" fill-opacity="0.45"/><circle cx="244.1" cy="399.3" r="4.5" fill="#006877" fill-opacity="0.45"/><circle cx="248.9" cy="400.6" r="4.5" fill="#006779" fill-opacity="0.45"/><circle cx="244.6" cy="400.9" r="4.5" fill="#00647d" fill-opacity="0.45"/><circle cx="249.3" cy="402.9" r="4.5" fill="#006082" fill-opacity="0.45"/><circle cx="250.2" cy="404.8" r="4.5" fill="#005b88" fill-opacity="0.45"/><circle cx="244.3" cy="404.4" r="4.5" fill="#005a8b" fill-opacity="0.45"/><circle cx="247.3" cy="405.8" r="4.5" fill="#00578e" fill-opacity="0.45"/><circle cx="243.7" cy="407.3" r="4.5" fill="#005196" fill-opacity="0.45"/><circle cx="243.3" cy="407.4" r="4.5" fill="#005097" fill-opacity="0.45"/><circle cx="244.2" cy="409.4" r="4.5" fill="#004b9e" fill-opacity="0.45"/><circle cx="247.4" cy="410.5" r="4.5" fill="#0049a0" fill-opacity="0.45"/><circle cx="246.3" cy="411.5" r="4.5" fill="#0046a4" fill-opacity="0.45"/><circle cx="247.4" cy="413.1" r="4.5" fill="#0042aa" fill-opacity="0.45"/><circle cx="243.5" cy="413.5" r="4.5" fill="#003fae" fill-opacity="0.45"/><circle cx="243.0" cy="415.1" r="4.5" fill="#003ab4" fill-opacity="0.45"/><circle cx="245.0" cy="416.3" r="4.5" fill="#0037b7" fill-opacity="0.45"/><circle cx="245.2" cy="417.9" r="4.5" fill="#0033bd" fill-opacity="0.45"/><circle cx="242.0" cy="417.4" r="4.5" fill="#0032bd" fill-opacity="0.45"/><circle cx="245.9" cy="420.0" r="4.5" fill="#002dc4" fill-opacity="0.45"/><circle cx="244.0" cy="420.6" r="4.5" fill="#002ac8" fill-opacity="0.45"/><circle cx="242.0" cy="420.7" r="4.5" fill="#0027cc" fill-opacity="0.45"/><circle cx="241.9" cy="422.6" r="4.5" fill="#0021d4" fill-opacity="0.45"/><circle cx="243.6" cy="424.2" r="4.5" fill="#001ed8" fill-opacity="0.45"/><circle cx="241.2" cy="424.4" r="4.5" fill="#001add" fill-opacity="0.45"/><circle cx="243.8" cy="426.5" r="4.5" fill="#0016e2" fill-opacity="0.45"/><circle cx="243.8" cy="427.5" r="4.5" fill="#0013e6" fill-opacity="0.45"/><circle cx="239.7" cy="427.5" r="4.5" fill="#000eec" fill-opacity="0.45"/><circle cx="242.3" cy="430.3" r="4.5" fill="#0008f5" fill-opacity="0.45"/><circle cx="241.6" cy="430.5" r="4.5" fill="#0007f6" fill-opacity="0.45"/><circle cx="242.1" cy="431.9" r="4.5" fill="#0003fc" fill-opacity="0.45"/><circle cx="239.4" cy="433.0" r="4.5" fill="#0300fc" fill-opacity="0.45"/><circle cx="239.4" cy="433.7" r="4.5" fill="#0600fa" fill-opacity="0.45"/><circle cx="241.7" cy="434.4" r="4.5" fill="#0b00f5" fill-opacity="0.45"/><circle cx="242.3" cy="435.9" r="4.5" fill="#1100ef" fill-opacity="0.45"/><circle cx="241.9" cy="437.2" r="4.5" fill="#1600ec" fill-opacity="0.45"/><circle cx="242.5" cy="437.7" r="4.5" fill="#1900e9" fill-opacity="0.45"/><circle cx="242.8" cy="439.0" r="4.5" fill="#1d00e5" fill-opacity="0.45"/><circle cx="241.2" cy="440.0" r="4.5" fill="#1f00e3" fill-opacity="0.45"/><circle cx="243.2" cy="441.3" r="4.5" fill="#2700dc" fill-opacity="0.45"/><circle cx="242.6" cy="441.9" r="4.5" fill="#2800db" fill-opacity="0.45"/><circle cx="242.8" cy="443.5" r="4.5" fill="#2e00d6" fill-opacity="0.45"/><circle cx="243.1" cy="444.7" r="4.5" fill="#3300d1" fill-opacity="0.45"/><circle cx="244.2" cy="445.0" r="4.5" fill="#3600cf" fill-opacity="0.45"/><circle cx="244.8" cy="446.1" r="4.5" fill="#3a00cb" fill-opacity="0.45"/><circle cx="243.8" cy="447.8" r="4.5" fill="#3e00c7" fill-opacity="0.45"/><circle cx="245.2" cy="448.7" r="4.5" fill="#4500c1" fill-opacity="0.45"/><circle cx="247.4" cy="448.4" r="4.5" fill="#4a00bd" fill-opacity="0.45"/><circle cx="245.9" cy="451.5" r="4.5" fill="#5200b6" fill-opacity="0.45"/><circle cx="247.2" cy="451.6" r="4.5" fill="#5600b2" fill-opacity="0.45"/><circle cx="249.0" cy="451.1" r="4.5" fill="#5900b0" fill-opacity="0.45"/><circle cx="248.5" cy="452.6" r="4.5" fill="#5d00ac" fill-opacity="0.45"/><circle cx="249.3" cy="454.4" r="4.5" fill="#6700a3" fill-opacity="0.45"/><circle cx="249.8" cy="454.4" r="4.5" fill="#6800a2" fill-opacity="0.45"/><circle cx="250.4" cy="455.8" r="4.5" fill="#6f009c" fill-opacity="0.45"/><circle cx="250.4" cy="456.9" r="4.5" fill="#740098" fill-opacity="0.45"/><circle cx="252.1" cy="456.9" r="4.5" fill="#780094" fill-opacity="0.45"/><circle cx="252.0" cy="458.0" r="4.5" fill="#7c0090" fill-opacity="0.45"/><circle cx="249.0" cy="406.3" r="4.5" fill="#003daf" fill-opacity="0.42"/><circle cx="248.1" cy="407.8" r="4.5" fill="#003ab3" fill-opacity="0.42"/><circle cx="249.4" cy="410.4" r="4.5" fill="#0032be" fill-opacity="0.42"/><circle cx="249.3" cy="410.8" r="4.5" fill="#0031bf" fill-opacity="0.42"/><circle cx="252.4" cy="412.7" r="4.5" fill="#0028cb" fill-opacity="0.42"/><circle cx="253.5" cy="414.0" r="4.5" fill="#0023d2" fill-opacity="0.42"/><circle cx="252.6" cy="415.6" r="4.5" fill="#0020d5" fill-opacity="0.42"/><circle cx="254.6" cy="416.4" r="4.5" fill="#001bdc" fill-opacity="0.42"/><circle cx="254.4" cy="420.1" r="4.5" fill="#0012e8" fill-opacity="0.42"/><circle cx="256.6" cy="419.8" r="4.5" fill="#0010eb" fill-opacity="0.42"/><circle cx="257.6" cy="421.7" r="4.5" fill="#0009f3" fill-opacity="0.42"/><circle cx="257.0" cy="423.4" r="4.5" fill="#0005f8" fill-opacity="0.42"/><circle cx="259.0" cy="425.4" r="4.5" fill="#0100fe" fill-opacity="0.42"/><circle cx="258.1" cy="428.9" r="4.5" fill="#0800f8" fill-opacity="0.42"/><circle cx="260.4" cy="430.4" r="4.5" fill="#0c00f5" fill-opacity="0.42"/><circle cx="258.9" cy="432.1" r="4.5" fill="#0e00f2" fill-opacity="0.42"/><circle cx="259.5" cy="433.6" r="4.5" fill="#1100ef" fill-opacity="0.42"/><circle cx="260.2" cy="436.4" r="4.5" fill="#1700ea" fill-opacity="0.42"/><circle cx="260.0" cy="437.6" r="4.5" fill="#1900e8" fill-opacity="0.42"/><circle cx="262.1" cy="439.9" r="4.5" fill="#1f00e3" fill-opacity="0.42"/><circle cx="262.0" cy="440.6" r="4.5" fill="#2400df" fill-opacity="0.42"/><circle cx="261.1" cy="443.1" r="4.5" fill="#3700ce" fill-opacity="0.42"/><circle cx="261.5" cy="444.4" r="4.5" fill="#4100c5" fill-opacity="0.42"/><circle cx="262.9" cy="446.8" r="4.5" fill="#5400b4" fill-opacity="0.42"/><circle cx="261.5" cy="450.0" r="4.5" fill="#6c009e" fill-opacity="0.42"/><circle cx="262.4" cy="450.2" r="4.5" fill="#6e009d" fill-opacity="0.42"/><circle cx="262.2" cy="452.2" r="4.5" fill="#7c0090" fill-opacity="0.42"/><circle cx="262.6" cy="454.8" r="4.5" fill="#7c0090" fill-opacity="0.42"/><circle cx="262.0" cy="457.9" r="4.5" fill="#7c0090" fill-opacity="0.42"/><circle cx="262.1" cy="458.9" r="4.5" fill="#7c0090" fill-opacity="0.42"/><circle cx="261.9" cy="460.4" r="4.5" fill="#7c0090" fill-opacity="0.42"/><circle cx="262.0" cy="462.0" r="4.5" fill="#7c0090" fill-opacity="0.42"/><circle cx="238.0" cy="418.0" r="4.5" fill="#0016e2" fill-opacity="0.3"/><circle cx="255.0" cy="452.0" r="4.5" fill="#7c0090" fill-opacity="0.3"/><circle cx="268.0" cy="453.0" r="4.5" fill="#7c0090" fill-opacity="0.3"/><circle cx="270.0" cy="445.0" r="4.5" fill="#3e00c8" fill-opacity="0.3"/><circle cx="290.0" cy="430.0" r="4.5" fill="#0000ff" fill-opacity="0.3"/><circle cx="295.0" cy="425.0" r="4.5" fill="#0000ff" fill-opacity="0.3"/><circle cx="232.0" cy="445.0" r="4.5" fill="#1f00e3" fill-opacity="0.3"/><circle cx="215.0" cy="455.0" r="4.5" fill="#5d00ac" fill-opacity="0.3"/><g><line x1="128.5" y1="195.5" x2="418.5" y2="211.5" stroke="#c4c4c4" stroke-width="1"/><line x1="418.5" y1="211.5" x2="418.5" y2="514.5" stroke="#c4c4c4" stroke-width="1"/></g><g><line x1="128.5" y1="195.5" x2="128.5" y2="498.5" stroke="#000" stroke-width="1"/><line x1="128.5" y1="498.5" x2="418.5" y2="514.5" stroke="#000" stroke-width="1"/><line x1="128.5" y1="498.5" x2="227.5" y2="454.5" stroke="#000" stroke-width="1"/></g><line x1="124" y1="262.5" x2="132" y2="262.5" stroke="#000"/><line x1="124" y1="336.5" x2="132" y2="336.5" stroke="#000"/><line x1="124" y1="410.5" x2="132" y2="410.5" stroke="#000"/><line x1="124" y1="486.5" x2="132" y2="486.5" stroke="#000"/><text transform="translate(146.3,261) rotate(-90)" text-anchor="middle" style="font-family:'Liberation Sans',sans-serif;font-size:15.5px" fill="#444">24</text><text transform="translate(146.3,336.5) rotate(-90)" text-anchor="middle" style="font-family:'Liberation Sans',sans-serif;font-size:15.5px" fill="#444">22</text><text transform="translate(146.3,410.5) rotate(-90)" text-anchor="middle" style="font-family:'Liberation Sans',sans-serif;font-size:15.5px" fill="#444">20</text><text transform="translate(146.3,486) rotate(-90)" text-anchor="middle" style="font-family:'Liberation Sans',sans-serif;font-size:15.5px" fill="#444">18</text><text transform="translate(164,347) rotate(-90)" text-anchor="middle" style="font-family:'Liberation Sans',sans-serif;font-size:13px" fill="#444">z</text><line x1="159.5" y1="495.7103448275862" x2="159.5" y2="503.7103448275862" stroke="#000"/><text x="157.5" y="518.3103448275862" text-anchor="middle" style="font-family:'Liberation Sans',sans-serif;font-size:15.5px" fill="#444">6</text><line x1="247.5" y1="500.5655172413793" x2="247.5" y2="508.5655172413793" stroke="#000"/><text x="246.5" y="523.1655172413793" text-anchor="middle" style="font-family:'Liberation Sans',sans-serif;font-size:15.5px" fill="#444">8</text><line x1="335.5" y1="505.4206896551724" x2="335.5" y2="513.4206896551724" stroke="#000"/><text x="334.5" y="528.0206896551724" text-anchor="middle" style="font-family:'Liberation Sans',sans-serif;font-size:15.5px" fill="#444">10</text><text x="270" y="544" text-anchor="middle" style="font-family:'Liberation Sans',sans-serif;font-size:14px" fill="#444">x</text><line x1="145" y1="484" x2="147" y2="492" stroke="#000"/><text transform="translate(154,502) rotate(70) scale(0.9,0.55)" text-anchor="middle" style="font-family:'Liberation Sans',sans-serif;font-size:14px" fill="#444">11</text><line x1="168" y1="474" x2="170" y2="482" stroke="#000"/><text transform="translate(177,492) rotate(70) scale(0.9,0.55)" text-anchor="middle" style="font-family:'Liberation Sans',sans-serif;font-size:14px" fill="#444">12</text><line x1="190" y1="464" x2="192" y2="472" stroke="#000"/><text transform="translate(199,482) rotate(70) scale(0.9,0.55)" text-anchor="middle" style="font-family:'Liberation Sans',sans-serif;font-size:14px" fill="#444">13</text><line x1="211" y1="455" x2="213" y2="463" stroke="#000"/><text transform="translate(220,473) rotate(70) scale(0.9,0.55)" text-anchor="middle" style="font-family:'Liberation Sans',sans-serif;font-size:14px" fill="#444">14</text><text transform="translate(192,508) rotate(70) scale(0.9,0.6)" text-anchor="middle" style="font-family:'Liberation Sans',sans-serif;font-size:14px" fill="#444">y</text></svg></div></div><svg style="position:absolute;left:0;top:0" width="681" height="872"><rect x="27" y="59.5" width="21" height="21" fill="#fff" stroke="#000" stroke-width="1.6"/><rect x="28" y="60.5" width="19" height="1.6" fill="#7c6cd4"/><line x1="27" y1="71.5" x2="48" y2="71.5" stroke="#000" stroke-width="1.3"/><path d="M37.5 71.5 L44 66 L44 77 Z" fill="#e8c000" stroke="#a88000" stroke-width="1"/><path d="M74.5 66 A5.6 5.6 0 1 0 76 75.5" fill="none" stroke="#202040" stroke-width="5"/><path d="M74.5 66 A5.6 5.6 0 1 0 76 75.5" fill="none" stroke="#a4aee4" stroke-width="2.8"/><path d="M73.8 59 L80.5 64.6 L74.2 70 Z" fill="#a4aee4" stroke="#202040" stroke-width="1.1"/><rect x="98.5" y="58" width="21" height="4.5" fill="#000"/><rect x="99.5" y="59.5" width="19" height="1.6" fill="#fff"/><rect x="100.5" y="59.5" width="0.9" height="1.2" fill="#000"/><rect x="103.2" y="59.5" width="0.9" height="1.2" fill="#000"/><rect x="105.9" y="59.5" width="0.9" height="1.2" fill="#000"/><rect x="108.6" y="59.5" width="0.9" height="1.2" fill="#000"/><rect x="111.3" y="59.5" width="0.9" height="1.2" fill="#000"/><rect x="114.0" y="59.5" width="0.9" height="1.2" fill="#000"/><rect x="116.7" y="59.5" width="0.9" height="1.2" fill="#000"/><rect x="98.8" y="65.3" width="20.5" height="6.2" fill="#fff" stroke="#000" stroke-width="1.2"/><text x="109" y="70.6" text-anchor="middle" style="font-family:'Liberation Sans',sans-serif;font-weight:bold;font-size:5.6px" fill="#000">TITLE</text><line x1="99" y1="73" x2="99" y2="82" stroke="#000" stroke-width="1"/><line x1="119.5" y1="73" x2="119.5" y2="82" stroke="#000" stroke-width="1"/><line x1="100" y1="77.5" x2="118.5" y2="77.5" stroke="#000" stroke-width="1.6"/><path d="M100 77.5 L104 74.5 L104 80.5 Z M118.5 77.5 L114.5 74.5 L114.5 80.5 Z" fill="#000"/><path d="M134 58.5 L148.5 58.5 L156.5 66.5 L156.5 81 L134 81 Z" fill="#fff" stroke="#bdbdbd" stroke-width="0.8"/><path d="M148.5 58.5 L148.5 66.5 L156.5 66.5 Z" fill="#d8d8d8" stroke="#bdbdbd" stroke-width="0.6"/><path d="M143.5 62 C141 66 146 72 152 74 C148 72 140 74 136 78 C140 74 144 68 143.5 62 Z" fill="none" stroke="#e84848" stroke-width="1.3"/><circle cx="143.5" cy="61.8" r="1.3" fill="#e83030"/><rect x="172.5" y="60.5" width="17.5" height="18.5" fill="#fff" stroke="#000" stroke-width="1.3"/><rect x="174.5" y="62" width="7.5" height="7.5" fill="#e82020"/><path d="M189 67.5 L189 77.5 L179 77.5 Z" fill="#1a6cc0"/><circle cx="181.5" cy="70.5" r="4" fill="#18a030" stroke="#0a4010" stroke-width="0.6"/><circle cx="180.5" cy="69.2" r="1.3" fill="#b0f0b0"/><path d="M217 57.5 L222 63 L219.2 63 L219.2 67.3 L223.5 67.3 L223.5 64.5 L229 69.5 L223.5 74.5 L223.5 71.7 L219.2 71.7 L219.2 76 L222 76 L217 81.5 L212 76 L214.8 76 L214.8 71.7 L210.5 71.7 L210.5 74.5 L205 69.5 L210.5 64.5 L210.5 67.3 L214.8 67.3 L214.8 63 L212 63 Z" fill="#58b4f0" stroke="#000" stroke-width="1.1"/><path d="M245.5 62 L245.5 74 L255 78 M245.5 74 L253.5 70.5" fill="none" stroke="#101090" stroke-width="1.2"/><text x="250.5" y="64.5" text-anchor="middle" style="font-family:'Liberation Sans',sans-serif;font-weight:bold;font-size:6px" fill="#101090">Z</text><text x="257" y="70.5" text-anchor="middle" style="font-family:'Liberation Sans',sans-serif;font-weight:bold;font-size:6px" fill="#101090">Y</text><text x="259.5" y="79.5" text-anchor="middle" style="font-family:'Liberation Sans',sans-serif;font-weight:bold;font-size:6px" fill="#101090">X</text><path d="M279.5 65 L279.5 76.5 L289 80.5 M279.5 76.5 L287 73" fill="none" stroke="#101090" stroke-width="1.2"/><text x="284" y="67.5" text-anchor="middle" style="font-family:'Liberation Sans',sans-serif;font-weight:bold;font-size:6px" fill="#101090">Z</text><path d="M294 59 L299.5 65 L296.3 65 L296.3 74.5 L291.7 74.5 L291.7 65 L288.5 65 Z" fill="#58b4f0" stroke="#000" stroke-width="1.1"/><rect x="315" y="59.5" width="20.5" height="20.5" fill="#000"/><rect x="316.5" y="60.7" width="2.6" height="2.6" fill="#f4f4f4"/><rect x="316.5" y="64.6" width="2.6" height="2.6" fill="#f4f4f4"/><rect x="316.5" y="68.5" width="2.6" height="2.6" fill="#f4f4f4"/><rect x="316.5" y="72.4" width="2.6" height="2.6" fill="#f4f4f4"/><rect x="316.5" y="76.3" width="2.6" height="2.6" fill="#f4f4f4"/><rect x="320.4" y="60.7" width="2.6" height="2.6" fill="#f4f4f4"/><rect x="320.4" y="64.6" width="2.6" height="2.6" fill="#f4f4f4"/><rect x="320.4" y="68.5" width="2.6" height="2.6" fill="#f4f4f4"/><rect x="320.4" y="72.4" width="2.6" height="2.6" fill="#f4f4f4"/><rect x="320.4" y="76.3" width="2.6" height="2.6" fill="#f4f4f4"/><rect x="324.3" y="60.7" width="2.6" height="2.6" fill="#f4f4f4"/><rect x="324.3" y="64.6" width="2.6" height="2.6" fill="#f4f4f4"/><rect x="324.3" y="68.5" width="2.6" height="2.6" fill="#f4f4f4"/><rect x="324.3" y="72.4" width="2.6" height="2.6" fill="#f4f4f4"/><rect x="324.3" y="76.3" width="2.6" height="2.6" fill="#f4f4f4"/><rect x="328.2" y="60.7" width="2.6" height="2.6" fill="#f4f4f4"/><rect x="328.2" y="64.6" width="2.6" height="2.6" fill="#f4f4f4"/><rect x="328.2" y="68.5" width="2.6" height="2.6" fill="#f4f4f4"/><rect x="328.2" y="72.4" width="2.6" height="2.6" fill="#f4f4f4"/><rect x="328.2" y="76.3" width="2.6" height="2.6" fill="#f4f4f4"/><rect x="332.1" y="60.7" width="2.6" height="2.6" fill="#f4f4f4"/><rect x="332.1" y="64.6" width="2.6" height="2.6" fill="#f4f4f4"/><rect x="332.1" y="68.5" width="2.6" height="2.6" fill="#f4f4f4"/><rect x="332.1" y="72.4" width="2.6" height="2.6" fill="#f4f4f4"/><rect x="332.1" y="76.3" width="2.6" height="2.6" fill="#f4f4f4"/><rect x="349.5" y="58.5" width="23" height="23" fill="#e6e6e6" stroke="#8a8a8a" stroke-width="1"/><circle cx="355" cy="63" r="2.2" fill="none" stroke="#e00000" stroke-width="1.2"/><path d="M352.5 70 L357.5 70 M355 67.5 L355 72.5" stroke="#0000e0" stroke-width="1.2"/><path d="M352.8 74.8 L357.2 79.2 M357.2 74.8 L352.8 79.2" stroke="#00b000" stroke-width="1.1"/><text x="359.5" y="65.5" style="font-family:'Liberation Sans',sans-serif;font-weight:bold;font-size:7.5px" fill="#000">Aa</text><text x="359.5" y="72.5" style="font-family:'Liberation Sans',sans-serif;font-weight:bold;font-size:7.5px" fill="#000">Bb</text><text x="359.5" y="79.5" style="font-family:'Liberation Sans',sans-serif;font-weight:bold;font-size:7.5px" fill="#000">Cc</text><circle cx="390" cy="63.2" r="3.4" fill="#f8b4b4"/><circle cx="394.3" cy="67.2" r="3.4" fill="#f07c7c"/><circle cx="398.5" cy="71.2" r="3.4" fill="#f03838"/><circle cx="402.6" cy="75.5" r="3.4" fill="#ff0000"/><rect x="425.0" y="59.8" width="1.1" height="1.1" fill="#1a1a1a"/><rect x="429.2" y="58.3" width="1.1" height="1.1" fill="#1a1a1a"/><rect x="431.4" y="57.7" width="1.1" height="1.1" fill="#1a1a1a"/><rect x="436.6" y="58.8" width="1.1" height="1.1" fill="#1a1a1a"/><rect x="440.9" y="60.9" width="1.1" height="1.1" fill="#1a1a1a"/><rect x="422.9" y="64.1" width="1.1" height="1.1" fill="#1a1a1a"/><rect x="426.1" y="63.0" width="1.1" height="1.1" fill="#1a1a1a"/><rect x="428.7" y="62.0" width="1.1" height="1.1" fill="#1a1a1a"/><rect x="432.4" y="61.4" width="1.1" height="1.1" fill="#1a1a1a"/><rect x="421.8" y="67.2" width="1.1" height="1.1" fill="#1a1a1a"/><rect x="425.5" y="67.2" width="1.1" height="1.1" fill="#1a1a1a"/><rect x="429.2" y="66.7" width="1.1" height="1.1" fill="#1a1a1a"/><rect x="424.0" y="70.4" width="1.1" height="1.1" fill="#1a1a1a"/><rect x="427.1" y="73.1" width="1.1" height="1.1" fill="#1a1a1a"/><rect x="422.9" y="73.6" width="1.1" height="1.1" fill="#1a1a1a"/><rect x="421.8" y="76.2" width="1.1" height="1.1" fill="#1a1a1a"/><rect x="425.5" y="77.3" width="1.1" height="1.1" fill="#1a1a1a"/><rect x="428.2" y="79.4" width="1.1" height="1.1" fill="#1a1a1a"/><rect x="434.5" y="58.3" width="1.1" height="1.1" fill="#1a1a1a"/><rect x="427.1" y="59.8" width="1.1" height="1.1" fill="#1a1a1a"/><rect x="431.4" y="64.1" width="1.1" height="1.1" fill="#1a1a1a"/><rect x="424.5" y="61.4" width="1.1" height="1.1" fill="#1a1a1a"/><path d="M436.1 64 L441.9 64 L443 68.3 L443.7 68.8 L442.2 71.4 L441.9 77.8 L437.1 78.8 L430.3 78.8 L429.2 71.4 L434.5 70.9 L435.6 65.6 Z" fill="#e8eeee" stroke="#000" stroke-width="1.4"/><rect x="437.5" y="65.5" width="1.1" height="1.1" fill="#f00000"/><rect x="439.5" y="67.5" width="1.1" height="1.1" fill="#f00000"/><rect x="436.5" y="69.5" width="1.1" height="1.1" fill="#f00000"/><rect x="439.5" y="71.5" width="1.1" height="1.1" fill="#f00000"/><rect x="435.5" y="73.5" width="1.1" height="1.1" fill="#f00000"/><rect x="438.5" y="75.5" width="1.1" height="1.1" fill="#f00000"/><rect x="432.5" y="72.5" width="1.1" height="1.1" fill="#f00000"/><rect x="430.5" y="75.5" width="1.1" height="1.1" fill="#f00000"/><rect x="433.5" y="76.5" width="1.1" height="1.1" fill="#f00000"/><rect x="440.5" y="73.5" width="1.1" height="1.1" fill="#f00000"/><rect x="431.5" y="71.5" width="1.1" height="1.1" fill="#f00000"/><rect x="437.5" y="72.5" width="1.1" height="1.1" fill="#f00000"/><rect x="462.5" y="62.5" width="13" height="12" fill="#e8eeee" stroke="#000" stroke-width="1.5"/><rect x="464.5" y="66.5" width="1.1" height="1.1" fill="#f00000"/><rect x="467.5" y="64.5" width="1.1" height="1.1" fill="#f00000"/><rect x="470.5" y="65.5" width="1.1" height="1.1" fill="#f00000"/><rect x="472.5" y="63.5" width="1.1" height="1.1" fill="#f00000"/><rect x="465.5" y="69.5" width="1.1" height="1.1" fill="#f00000"/><rect x="468.5" y="68.5" width="1.1" height="1.1" fill="#f00000"/><rect x="471.5" y="69.5" width="1.1" height="1.1" fill="#f00000"/><rect x="466.5" y="72.5" width="1.1" height="1.1" fill="#f00000"/><rect x="469.5" y="71.5" width="1.1" height="1.1" fill="#f00000"/><rect x="472.5" y="71.5" width="1.1" height="1.1" fill="#f00000"/><rect x="463.5" y="72.5" width="1.1" height="1.1" fill="#f00000"/><rect x="471.5" y="58.8" width="1.1" height="1.1" fill="#1a1a1a"/><rect x="474.7" y="58.3" width="1.1" height="1.1" fill="#1a1a1a"/><rect x="477.9" y="58.3" width="1.1" height="1.1" fill="#1a1a1a"/><rect x="473.1" y="60.4" width="1.1" height="1.1" fill="#1a1a1a"/><rect x="476.3" y="59.8" width="1.1" height="1.1" fill="#1a1a1a"/><rect x="478.9" y="60.9" width="1.1" height="1.1" fill="#1a1a1a"/><rect x="474.7" y="62.5" width="1.1" height="1.1" fill="#1a1a1a"/><rect x="477.9" y="63.0" width="1.1" height="1.1" fill="#1a1a1a"/><rect x="476.8" y="65.1" width="1.1" height="1.1" fill="#1a1a1a"/><rect x="478.9" y="64.1" width="1.1" height="1.1" fill="#1a1a1a"/><rect x="456.2" y="78.9" width="1.1" height="1.1" fill="#1a1a1a"/><rect x="457.8" y="77.3" width="1.1" height="1.1" fill="#1a1a1a"/><rect x="459.9" y="78.3" width="1.1" height="1.1" fill="#1a1a1a"/><rect x="458.8" y="75.7" width="1.1" height="1.1" fill="#1a1a1a"/><rect x="461.0" y="74.6" width="1.1" height="1.1" fill="#1a1a1a"/><rect x="462.5" y="73.6" width="1.1" height="1.1" fill="#1a1a1a"/><rect x="457.3" y="79.9" width="1.1" height="1.1" fill="#1a1a1a"/><rect x="460.4" y="70.9" width="1.1" height="1.1" fill="#1a1a1a"/><path d="M507.5 62 L522.5 62 L523 62.5 L523 74.5 L522.5 75 L513 75 L509.5 78.5 L509 75 L507.5 75 L507 74.5 L507 62.5 Z" fill="#fff" stroke="#000" stroke-width="2"/><text x="515" y="73" text-anchor="middle" style="font-family:'Liberation Serif',serif;font-weight:bold;font-size:14px" fill="#000">?</text><path d="M543.5 62.5 L558 77 M558 62.5 L543.5 77" stroke="#000" stroke-width="3.4" stroke-linecap="square"/><path d="M25.5 572.5 L29.5 572.5 L31 570.5 L42.5 570.5 L42.5 586.5 L25.5 586.5 Z" fill="#fff" stroke="#5a7898" stroke-width="0.9"/><path d="M39.5 579.5 L43.5 579.5 L43.5 583.5 L47.5 583.5 L47.5 587.5 L43.5 587.5 L43.5 591.5 L39.5 591.5 L39.5 587.5 L35.5 587.5 L35.5 583.5 L39.5 583.5 Z" fill="#10a830" stroke="#000" stroke-width="1.6"/><path d="M61.5 572.5 L65 572.5 L66.5 570.5 L78.5 570.5 L78.5 586.5 L61.5 586.5 Z" fill="#a6a6a6" stroke="#a0a0a0" stroke-width="0.9"/><rect x="70.5" y="583" width="14" height="6" fill="#a0a0a0" stroke="#909090" stroke-width="0.9"/><defs><linearGradient id="rb" x1="0" x2="1" y1="0" y2="0"><stop offset="0" stop-color="#3010d0"/><stop offset="0.3" stop-color="#9010a0"/><stop offset="0.6" stop-color="#e03030"/><stop offset="0.85" stop-color="#ff9000"/><stop offset="1" stop-color="#ffff00"/></linearGradient><linearGradient id="rb2" x1="0" x2="1"><stop offset="0" stop-color="#200050"/><stop offset="0.15" stop-color="#2020ff"/><stop offset="0.45" stop-color="#00c000"/><stop offset="0.75" stop-color="#ffff00"/><stop offset="0.88" stop-color="#ff2000"/><stop offset="1" stop-color="#d00000"/></linearGradient></defs><rect x="107" y="570" width="21" height="21" fill="url(#rb)"/><path d="M121 579 L125 579 L125 583.5 L129.5 583.5 L129.5 587.5 L125 587.5 L125 592 L121 592 L121 587.5 L116.5 587.5 L116.5 583.5 L121 583.5 Z" fill="#b0b0b0" stroke="#000" stroke-width="1.6"/><rect x="143" y="570" width="21" height="21" fill="url(#rb)"/><rect x="152" y="583" width="14" height="5.5" fill="#b0b0b0" stroke="#000" stroke-width="1.6"/><rect x="189.5" y="570.5" width="23" height="23" fill="#fff" stroke="#7a7a7a" stroke-width="1"/><text x="196" y="584" style="font-family:'Liberation Sans',sans-serif;font-size:10.5px" fill="#000">Txt</text><path d="M194.5 584.5 L197 587 L194.5 589.5 L192 587 Z" fill="#f00000"/><path d="M236.5 582.5 L259.5 582.5 M236.5 578.5 L236.5 586.5 M259.5 578.5 L259.5 586.5" stroke="#000" stroke-width="1.3"/><circle cx="248" cy="582.5" r="2.2" fill="#fff" stroke="#000" stroke-width="1"/><path d="M283.5 571.5 L283.5 593.5 M279.5 571.5 L287.5 571.5 M279.5 593.5 L287.5 593.5" stroke="#000" stroke-width="1.3"/><circle cx="283.5" cy="582.5" r="2.2" fill="#fff" stroke="#000" stroke-width="1"/><path d="M312 589 L327.5 575.5 M309.5 586 L314.5 592 M325 572.5 L330 578.5" stroke="#000" stroke-width="1.3"/><circle cx="319.7" cy="582.3" r="2.2" fill="#fff" stroke="#000" stroke-width="1"/></svg><div style="position:absolute;left:28px;top:652px;white-space:pre;will-change:transform;font-family:'Liberation Sans',sans-serif;font-weight:bold;font-size:12px;line-height:14px;color:#000;letter-spacing:0.6px">Table:</div><div style="position:absolute;left:69px;top:646px;width:163px;height:23px;box-sizing:border-box;border:1px solid #7a7b78;box-shadow:1px 1px 0 #fff, inset 1px 1px 0 #fff"></div><div style="position:absolute;left:74px;top:651px;white-space:pre;will-change:transform;font-family:'Liberation Sans',sans-serif;font-weight:bold;font-size:12px;line-height:14px;color:#000;letter-spacing:0.7px">1: Millennium query 2</div><div style="position:absolute;left:215.0px;top:656px;width:0;height:0;border-left:5.0px solid transparent;border-right:5.0px solid transparent;border-top:5px solid #000"></div><div style="position:absolute;left:28px;top:681px;white-space:pre;will-change:transform;font-family:'Liberation Sans',sans-serif;font-size:12px;line-height:14px;color:#000;letter-spacing:1.2px;-webkit-text-stroke:0.25px #000">X Axis:</div><div style="position:absolute;left:75px;top:675px;width:113px;height:23px;box-sizing:border-box;border:1px solid #7a7b78;background:#fff;box-shadow:1px 1px 0 #fff, inset 1px 1px 0 #fff"></div><div style="position:absolute;left:77px;top:680px;white-space:pre;will-change:transform;font-family:'Liberation Sans',sans-serif;font-size:12px;line-height:14px;color:#000;font-size:13px;-webkit-text-stroke:0.2px #000">x</div><div style="position:absolute;left:188px;top:675px;width:23px;height:23px;box-sizing:border-box;border:1px solid #7a7b78;box-shadow:1px 1px 0 #fff, inset 1px 1px 0 #fff"></div><div style="position:absolute;left:195.0px;top:685px;width:0;height:0;border-left:5.0px solid transparent;border-right:5.0px solid transparent;border-top:5px solid #000"></div><div style="position:absolute;left:217px;top:675px;width:12px;height:23px;box-sizing:border-box;border:1px solid #7a7b78;box-shadow:1px 1px 0 #fff, inset 1px 1px 0 #fff"></div><div style="position:absolute;left:220.5px;top:682.0px;width:0;height:0;border-top:5.0px solid transparent;border-bottom:5.0px solid transparent;border-right:5px solid #000"></div><div style="position:absolute;left:230px;top:675px;width:12px;height:23px;box-sizing:border-box;border:1px solid #7a7b78;box-shadow:1px 1px 0 #fff, inset 1px 1px 0 #fff"></div><div style="position:absolute;left:234px;top:682.0px;width:0;height:0;border-top:5.0px solid transparent;border-bottom:5.0px solid transparent;border-left:5px solid #000"></div><div style="position:absolute;left:257px;top:681px;width:12px;height:12px;box-sizing:border-box;border:1px solid #7a7b78;box-shadow:1px 1px 0 #fff, inset 1px 1px 0 #fff"></div><div style="position:absolute;left:274.5px;top:680px;white-space:pre;will-change:transform;font-family:'Liberation Sans',sans-serif;font-weight:bold;font-size:12px;line-height:14px;color:#000">Log</div><div style="position:absolute;left:310px;top:681px;width:12px;height:12px;box-sizing:border-box;border:1px solid #7a7b78;box-shadow:1px 1px 0 #fff, inset 1px 1px 0 #fff"></div><div style="position:absolute;left:327.5px;top:680px;white-space:pre;will-change:transform;font-family:'Liberation Sans',sans-serif;font-weight:bold;font-size:12px;line-height:14px;color:#000">Flip</div><div style="position:absolute;left:28px;top:710px;white-space:pre;will-change:transform;font-family:'Liberation Sans',sans-serif;font-size:12px;line-height:14px;color:#000;letter-spacing:1.2px;-webkit-text-stroke:0.25px #000">Y Axis:</div><div style="position:absolute;left:75px;top:704px;width:113px;height:23px;box-sizing:border-box;border:1px solid #7a7b78;background:#fff;box-shadow:1px 1px 0 #fff, inset 1px 1px 0 #fff"></div><div style="position:absolute;left:77px;top:709px;white-space:pre;will-change:transform;font-family:'Liberation Sans',sans-serif;font-size:12px;line-height:14px;color:#000;font-size:13px;-webkit-text-stroke:0.2px #000">y</div><div style="position:absolute;left:188px;top:704px;width:23px;height:23px;box-sizing:border-box;border:1px solid #7a7b78;box-shadow:1px 1px 0 #fff, inset 1px 1px 0 #fff"></div><div style="position:absolute;left:195.0px;top:714px;width:0;height:0;border-left:5.0px solid transparent;border-right:5.0px solid transparent;border-top:5px solid #000"></div><div style="position:absolute;left:217px;top:704px;width:12px;height:23px;box-sizing:border-box;border:1px solid #7a7b78;box-shadow:1px 1px 0 #fff, inset 1px 1px 0 #fff"></div><div style="position:absolute;left:220.5px;top:711.0px;width:0;height:0;border-top:5.0px solid transparent;border-bottom:5.0px solid transparent;border-right:5px solid #000"></div><div style="position:absolute;left:230px;top:704px;width:12px;height:23px;box-sizing:border-box;border:1px solid #7a7b78;box-shadow:1px 1px 0 #fff, inset 1px 1px 0 #fff"></div><div style="position:absolute;left:234px;top:711.0px;width:0;height:0;border-top:5.0px solid transparent;border-bottom:5.0px solid transparent;border-left:5px solid #000"></div><div style="position:absolute;left:257px;top:710px;width:12px;height:12px;box-sizing:border-box;border:1px solid #7a7b78;box-shadow:1px 1px 0 #fff, inset 1px 1px 0 #fff"></div><div style="position:absolute;left:274.5px;top:709px;white-space:pre;will-change:transform;font-family:'Liberation Sans',sans-serif;font-weight:bold;font-size:12px;line-height:14px;color:#000">Log</div><div style="position:absolute;left:310px;top:710px;width:12px;height:12px;box-sizing:border-box;border:1px solid #7a7b78;box-shadow:1px 1px 0 #fff, inset 1px 1px 0 #fff"></div><div style="position:absolute;left:327.5px;top:709px;white-space:pre;will-change:transform;font-family:'Liberation Sans',sans-serif;font-weight:bold;font-size:12px;line-height:14px;color:#000">Flip</div><div style="position:absolute;left:28px;top:739px;white-space:pre;will-change:transform;font-family:'Liberation Sans',sans-serif;font-size:12px;line-height:14px;color:#000;letter-spacing:1.2px;-webkit-text-stroke:0.25px #000">Z Axis:</div><div style="position:absolute;left:75px;top:733px;width:113px;height:23px;box-sizing:border-box;border:1px solid #7a7b78;background:#fff;box-shadow:1px 1px 0 #fff, inset 1px 1px 0 #fff"></div><div style="position:absolute;left:77px;top:738px;white-space:pre;will-change:transform;font-family:'Liberation Sans',sans-serif;font-size:12px;line-height:14px;color:#000;font-size:13px;-webkit-text-stroke:0.2px #000">z</div><div style="position:absolute;left:188px;top:733px;width:23px;height:23px;box-sizing:border-box;border:1px solid #7a7b78;box-shadow:1px 1px 0 #fff, inset 1px 1px 0 #fff"></div><div style="position:absolute;left:195.0px;top:743px;width:0;height:0;border-left:5.0px solid transparent;border-right:5.0px solid transparent;border-top:5px solid #000"></div><div style="position:absolute;left:217px;top:733px;width:12px;height:23px;box-sizing:border-box;border:1px solid #7a7b78;box-shadow:1px 1px 0 #fff, inset 1px 1px 0 #fff"></div><div style="position:absolute;left:220.5px;top:740.0px;width:0;height:0;border-top:5.0px solid transparent;border-bottom:5.0px solid transparent;border-right:5px solid #000"></div><div style="position:absolute;left:230px;top:733px;width:12px;height:23px;box-sizing:border-box;border:1px solid #7a7b78;box-shadow:1px 1px 0 #fff, inset 1px 1px 0 #fff"></div><div style="position:absolute;left:234px;top:740.0px;width:0;height:0;border-top:5.0px solid transparent;border-bottom:5.0px solid transparent;border-left:5px solid #000"></div><div style="position:absolute;left:257px;top:739px;width:12px;height:12px;box-sizing:border-box;border:1px solid #7a7b78;box-shadow:1px 1px 0 #fff, inset 1px 1px 0 #fff"></div><div style="position:absolute;left:274.5px;top:738px;white-space:pre;will-change:transform;font-family:'Liberation Sans',sans-serif;font-weight:bold;font-size:12px;line-height:14px;color:#000">Log</div><div style="position:absolute;left:310px;top:739px;width:12px;height:12px;box-sizing:border-box;border:1px solid #7a7b78;box-shadow:1px 1px 0 #fff, inset 1px 1px 0 #fff"></div><div style="position:absolute;left:327.5px;top:738px;white-space:pre;will-change:transform;font-family:'Liberation Sans',sans-serif;font-weight:bold;font-size:12px;line-height:14px;color:#000">Flip</div><div style="position:absolute;left:29px;top:768px;white-space:pre;will-change:transform;font-family:'Liberation Sans',sans-serif;font-size:12px;line-height:14px;color:#000;letter-spacing:1.2px;-webkit-text-stroke:0.25px #000">Aux 1 Axis:</div><div style="position:absolute;left:103px;top:762px;width:113px;height:23px;box-sizing:border-box;border:1px solid #7a7b78;background:#fff;box-shadow:1px 1px 0 #fff, inset 1px 1px 0 #fff"></div><div style="position:absolute;left:105px;top:766px;white-space:pre;will-change:transform;font-family:'Liberation Sans',sans-serif;font-weight:bold;font-size:12px;line-height:14px;color:#000;letter-spacing:0.3px">redshift</div><div style="position:absolute;left:216px;top:762px;width:23px;height:23px;box-sizing:border-box;border:1px solid #7a7b78;box-shadow:1px 1px 0 #fff, inset 1px 1px 0 #fff"></div><div style="position:absolute;left:223.0px;top:772px;width:0;height:0;border-left:5.0px solid transparent;border-right:5.0px solid transparent;border-top:5px solid #000"></div><div style="position:absolute;left:245px;top:762px;width:12px;height:23px;box-sizing:border-box;border:1px solid #7a7b78;box-shadow:1px 1px 0 #fff, inset 1px 1px 0 #fff"></div><div style="position:absolute;left:248.5px;top:769.0px;width:0;height:0;border-top:5.0px solid transparent;border-bottom:5.0px solid transparent;border-right:5px solid #000"></div><div style="position:absolute;left:258px;top:762px;width:12px;height:23px;box-sizing:border-box;border:1px solid #7a7b78;box-shadow:1px 1px 0 #fff, inset 1px 1px 0 #fff"></div><div style="position:absolute;left:262px;top:769.0px;width:0;height:0;border-top:5.0px solid transparent;border-bottom:5.0px solid transparent;border-left:5px solid #000"></div><div style="position:absolute;left:285px;top:768px;width:12px;height:12px;box-sizing:border-box;border:1px solid #7a7b78;box-shadow:1px 1px 0 #fff, inset 1px 1px 0 #fff"></div><svg style="position:absolute;left:285px;top:768px" width="13" height="13"><path d="M3 6.5 L5.2 9 L9.5 3.2" fill="none" stroke="#000" stroke-width="2"/></svg><div style="position:absolute;left:302.5px;top:767px;white-space:pre;will-change:transform;font-family:'Liberation Sans',sans-serif;font-weight:bold;font-size:12px;line-height:14px;color:#000">Log</div><div style="position:absolute;left:338px;top:768px;width:12px;height:12px;box-sizing:border-box;border:1px solid #7a7b78;box-shadow:1px 1px 0 #fff, inset 1px 1px 0 #fff"></div><svg style="position:absolute;left:338px;top:768px" width="13" height="13"><path d="M3 6.5 L5.2 9 L9.5 3.2" fill="none" stroke="#000" stroke-width="2"/></svg><div style="position:absolute;left:355.5px;top:767px;white-space:pre;will-change:transform;font-family:'Liberation Sans',sans-serif;font-weight:bold;font-size:12px;line-height:14px;color:#000">Flip</div><div style="position:absolute;left:382px;top:762px;width:139px;height:25px;overflow:hidden"><div style="position:absolute;left:0;top:0;width:160px;height:23px;box-sizing:border-box;border:1px solid #7a7b78;box-shadow:1px 1px 0 #fff, inset 1px 1px 0 #fff"></div></div><div style="position:absolute;left:391px;top:767px;width:40px;height:15px;background:linear-gradient(to right,#300040 0%,#1010c0 10%,#0020ff 22%,#00a040 38%,#00e000 52%,#c0e000 62%,#ffff00 70%,#ff8000 78%,#ff0000 85%,#e00000 100%)"></div><div style="position:absolute;left:439px;top:767px;white-space:pre;will-change:transform;font-family:'Liberation Sans',sans-serif;font-weight:bold;font-size:12px;line-height:14px;color:#000;letter-spacing:0.6px">Rainbow</div><div style="position:absolute;left:24px;top:792px;width:497px;height:16px;box-sizing:border-box;border:1px solid #7a7b78;background:#c4c5c2;box-shadow:inset 1px 1px 0 #a8a9a6"></div><div style="position:absolute;left:24px;top:792px;width:15px;height:16px;box-sizing:border-box;border:1px solid #7a7b78;box-shadow:1px 1px 0 #fff, inset 1px 1px 0 #fff"></div><div style="position:absolute;left:29.5px;top:797.0px;width:0;height:0;border-top:4.0px solid transparent;border-bottom:4.0px solid transparent;border-right:4.5px solid #000"></div><svg style="position:absolute;left:39px;top:792px" width="412" height="16"><defs><pattern id="bump" x="3" y="3" width="4" height="4" patternUnits="userSpaceOnUse"><rect x="0" y="0" width="1" height="1" fill="#d6d6ff"/><rect x="2" y="2" width="1" height="1" fill="#d6d6ff"/><rect x="1" y="1" width="1" height="1" fill="#7c7cb4"/><rect x="3" y="3" width="1" height="1" fill="#7c7cb4"/></pattern></defs><rect x="0" y="0" width="412" height="16" fill="#a3a3d6"/><rect x="2" y="2" width="408" height="12" fill="url(#bump)"/><rect x="0" y="0" width="412" height="1" fill="#6a6aa0"/><rect x="0" y="15" width="412" height="1" fill="#6a6aa0"/><rect x="411" y="0" width="1" height="16" fill="#6a6aa0"/><rect x="0" y="1" width="411" height="1" fill="#d0d0fc"/><rect x="0" y="1" width="1" height="14" fill="#d0d0fc"/></svg><div style="position:absolute;left:505px;top:792px;width:15px;height:16px;box-sizing:border-box;border:1px solid #7a7b78;box-shadow:1px 1px 0 #fff, inset 1px 1px 0 #fff"></div><div style="position:absolute;left:511px;top:797.0px;width:0;height:0;border-top:4.0px solid transparent;border-bottom:4.0px solid transparent;border-left:4.5px solid #000"></div><div style="position:absolute;left:540px;top:651px;width:12px;height:12px;box-sizing:border-box;border:1px solid #7a7b78;box-shadow:1px 1px 0 #fff, inset 1px 1px 0 #fff"></div><svg style="position:absolute;left:540px;top:651px" width="13" height="13"><path d="M3 6.5 L5.2 9 L9.5 3.2" fill="none" stroke="#000" stroke-width="2"/></svg><div style="position:absolute;left:557px;top:652px;white-space:pre;will-change:transform;font-family:'Liberation Sans',sans-serif;font-weight:bold;font-size:12px;line-height:14px;color:#000;letter-spacing:1.2px">All</div><div style="position:absolute;left:604px;top:648px;width:25px;height:17px;box-sizing:border-box;border:1px solid #7a7b78;box-shadow:1px 1px 0 #fff, inset 1px 1px 0 #fff"></div><div style="position:absolute;left:612.5px;top:652.5px;width:9px;height:9px;border-radius:50%;background:#f00000"></div></body></html>
